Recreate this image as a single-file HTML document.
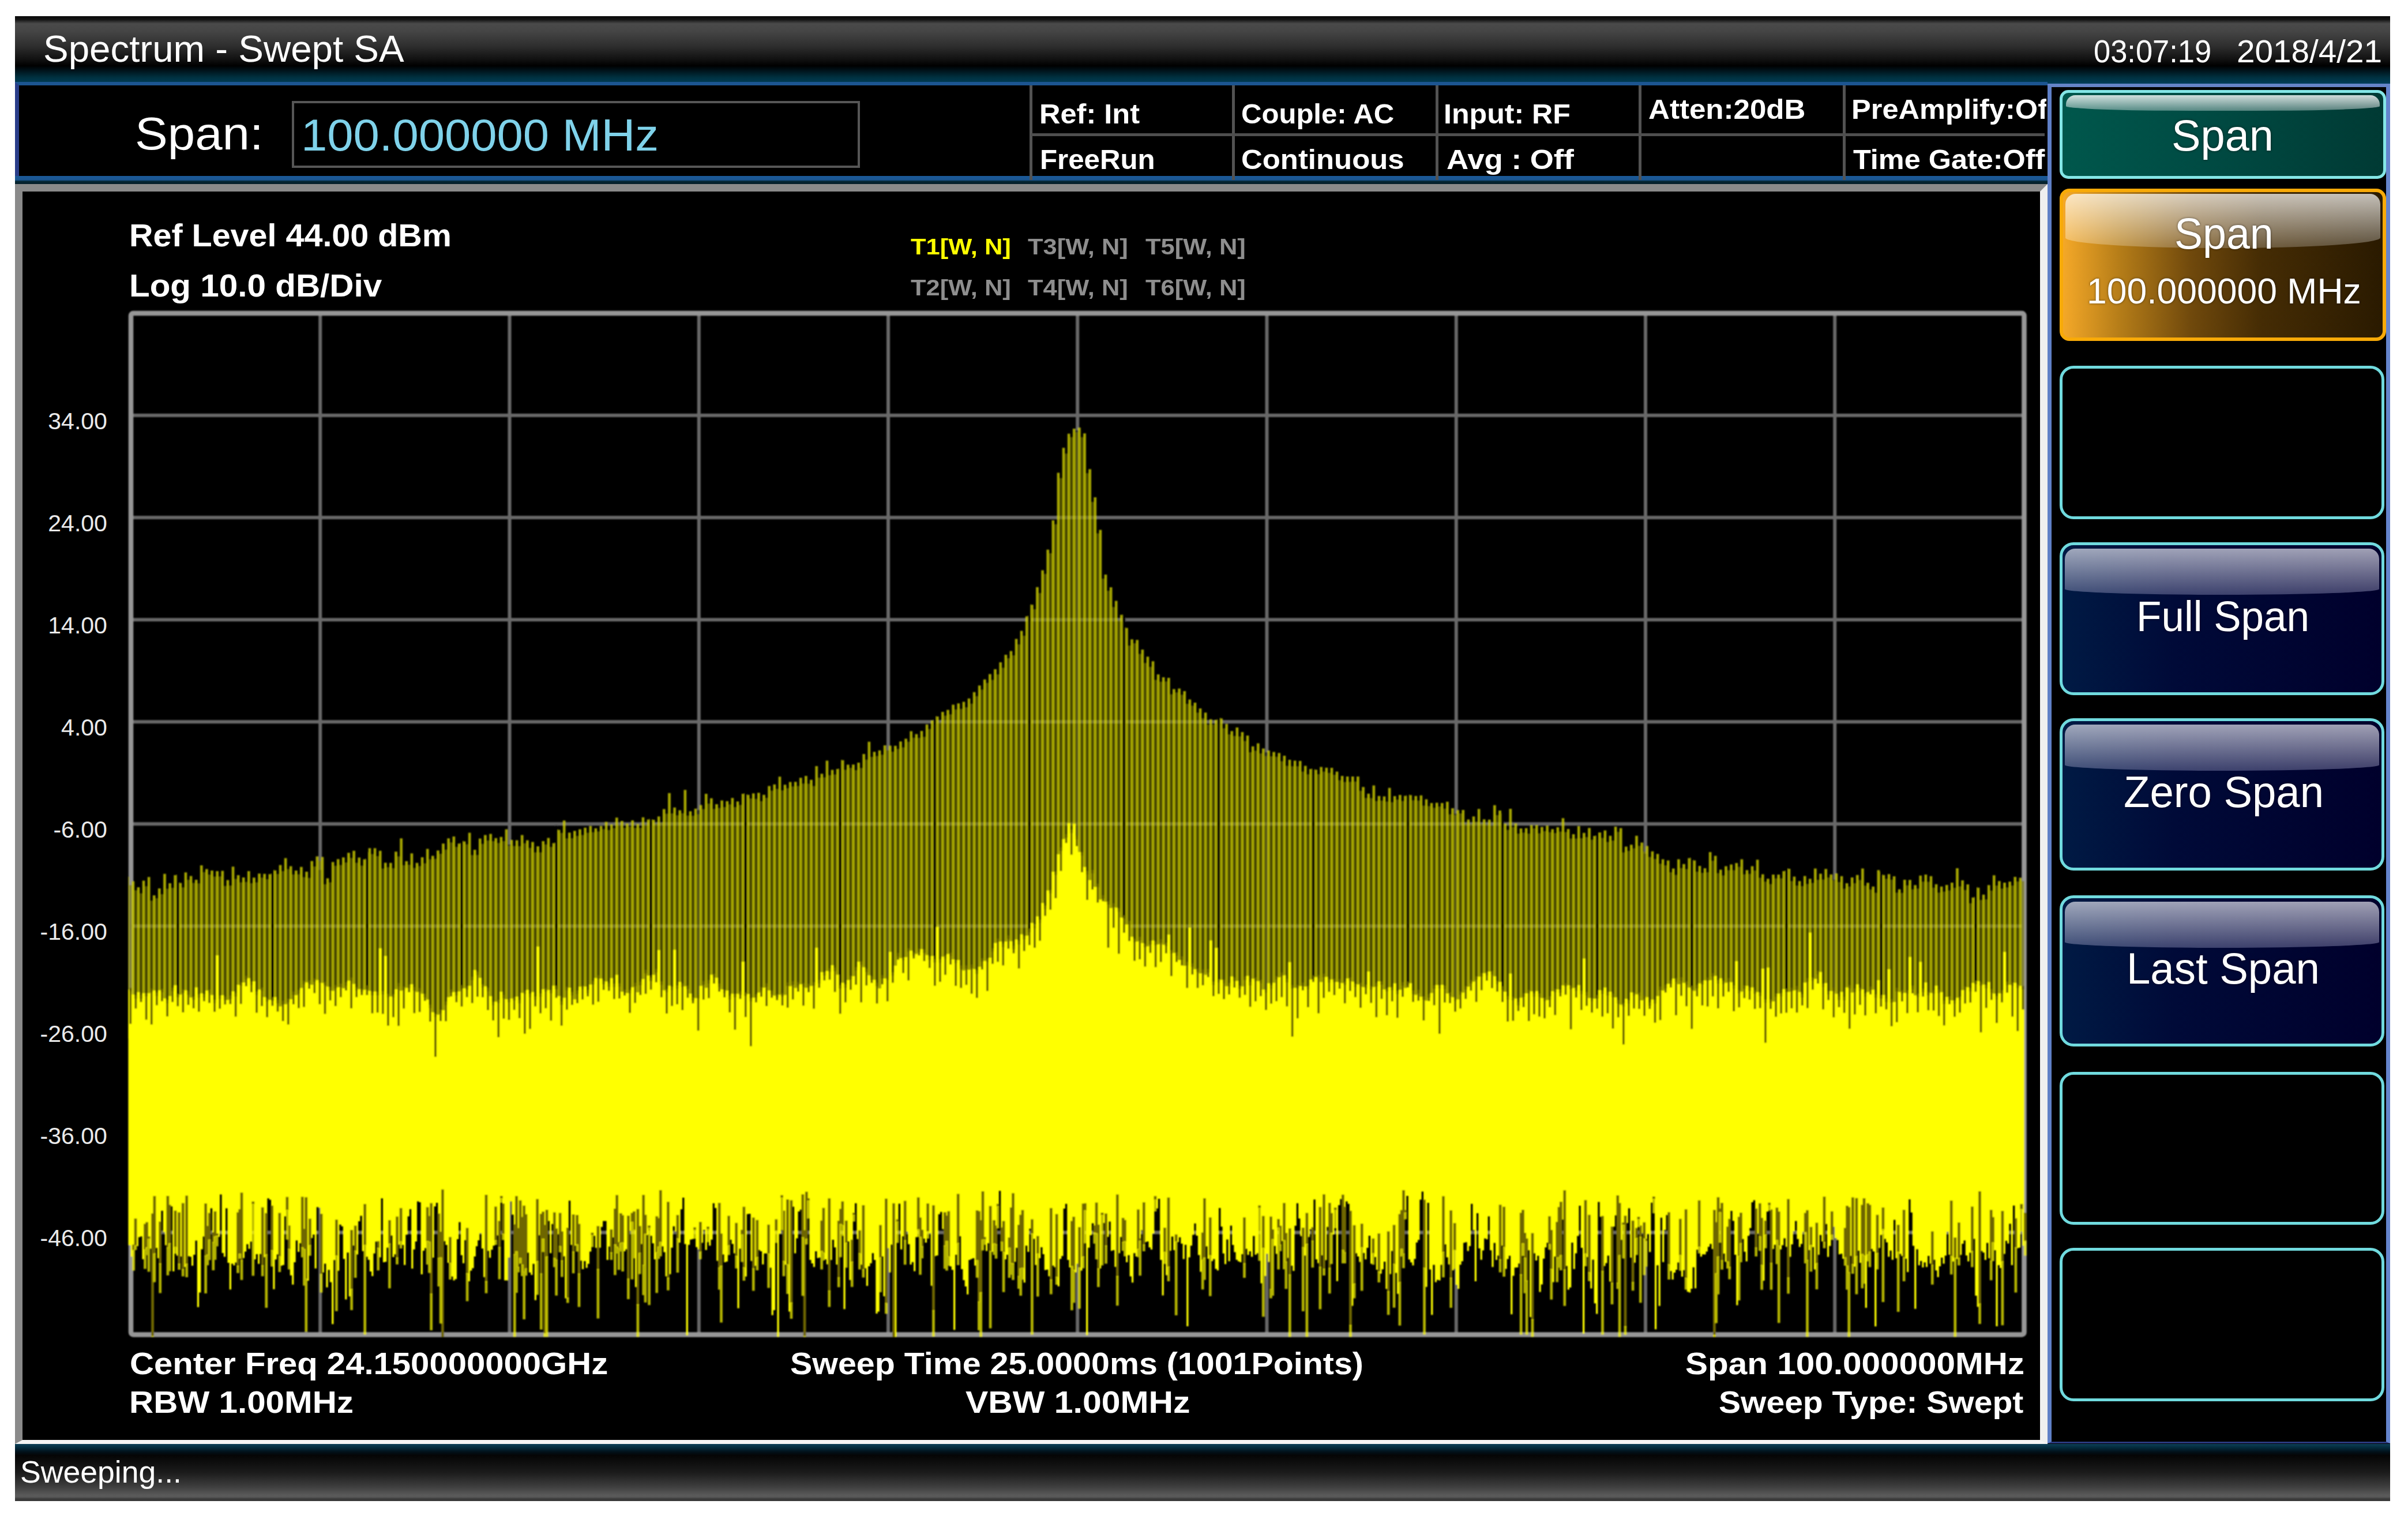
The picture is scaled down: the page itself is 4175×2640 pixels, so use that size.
<!DOCTYPE html>
<html><head><meta charset="utf-8"><title>Spectrum - Swept SA</title>
<style>
html,body{margin:0;padding:0;background:#fff;}
body{width:4175px;height:2640px;overflow:hidden;position:relative;font-family:"Liberation Sans",sans-serif;color:#fff;}
div{box-sizing:border-box;}
.tx{position:absolute;white-space:nowrap;transform-origin:0 0;}
#app{position:absolute;left:26px;top:28px;width:4118px;height:2574px;background:#000;}
#title{position:absolute;left:26px;top:28px;width:4118px;height:118px;
 background:linear-gradient(to bottom,#0a0a0a 0px,#141414 6px,#4a4a4a 13px,#454545 26px,#2e2e2e 52px,#121212 74px,#000 86px,#00121a 94px,#00303f 106px,#003a52 114px,#004060 118px);}
#spanbar{position:absolute;left:26px;top:142px;width:3524px;height:177px;background:#000;border-top:6px solid #1c5591;border-left:7px solid #2a3e8a;}
#spanbar .bb{position:absolute;left:-7px;right:0;bottom:0;height:14px;background:linear-gradient(to bottom,#1b5a98 0px,#1b5590 7px,#062836 9px,#031c26 14px);}
#spanbar .inp{position:absolute;left:473px;top:27px;width:985px;height:116px;border:4px solid #565656;}
.vsep{position:absolute;top:148px;width:5px;height:164px;background:#525252;}
.hsep{position:absolute;left:1788px;top:231px;width:1757px;height:5px;background:#4e4e4e;}
#panel{position:absolute;left:26px;top:319px;width:3524px;height:2184px;background:#000;border:13px solid;border-bottom-width:7px;border-color:#8a8a8a #efefef #f4f4f4 #8a8a8a;}
#plot{position:absolute;left:0;top:0;}
#side{position:absolute;left:3550px;top:145px;width:594px;height:2357px;background:#000;border:7px solid;border-top-width:6px;border-color:#6584c8 #6484cc #2a3a80 #5f7fc6;border-bottom-width:3px;}
.btn{position:absolute;left:3571px;border:5px solid #70dade;border-radius:24px;overflow:hidden;}
.btn.empty{background:#000;}
.btn.teal{background:linear-gradient(to right,#00574c 0%,#004c44 40%,#003a34 100%);border-color:#84e6e6;border-width:5px;border-radius:15px;}
.btn.orange{background:linear-gradient(to right,#f4a828 0%,#b47c18 18%,#70490c 40%,#452c04 62%,#2a1a00 100%);border-color:#f8aa08;border-width:6px;border-radius:17px;}
.btn.navy{background:linear-gradient(to right,#001a44 0%,#000a38 35%,#00002c 100%);}
.gloss{position:absolute;left:4px;right:4px;}
.g1{top:4px;height:27px;left:6px;right:6px;border-radius:16px 16px 40% 40%/16px 16px 8px 8px;background:linear-gradient(to bottom,rgba(255,255,255,.82),rgba(255,255,255,.34));}
.g2{top:3px;height:94px;border-radius:18px 18px 50% 50%/18px 18px 18px 18px;background:linear-gradient(to bottom,rgba(255,255,255,.72),rgba(255,255,255,.22));}
.g3{top:6px;height:80px;border-radius:18px 18px 50% 50%/18px 18px 10px 10px;background:linear-gradient(to bottom,rgba(235,235,245,.68),rgba(160,160,200,.38));}
#status{position:absolute;left:26px;top:2503px;width:4118px;height:99px;
 background:linear-gradient(to bottom,#0c4058 0px,#03283a 7px,#021018 14px,#050505 20px,#1c1c1c 50px,#3e3e3e 74px,#5a5a5a 89px,#585858 92px,#3c3c3c 95px,#383838 99px);}
</style></head><body>
<div id="app"></div>
<div id="title"></div>
<div id="spanbar"><div class="bb"></div><div class="inp"></div></div>
<div class="vsep" style="left:1785px"></div><div class="vsep" style="left:2136px"></div><div class="vsep" style="left:2489px"></div><div class="vsep" style="left:2841px"></div><div class="vsep" style="left:3195px"></div>
<div class="hsep"></div>
<div id="panel"></div>
<svg id="plot" width="4175" height="2640" viewBox="0 0 4175 2640">
<defs>
<pattern id="st" x="219.263" y="0" width="9.1144" height="64" patternUnits="userSpaceOnUse">
<rect x="0" y="0" width="4.9" height="64" fill="#ffff00" fill-opacity="0.65"/><rect x="4.9" y="0" width="4.2144" height="64" fill="#ffff00" fill-opacity="0.25"/>
</pattern>
<filter id="bl" x="0" y="0" width="100%" height="100%" filterUnits="userSpaceOnUse"><feGaussianBlur stdDeviation="1.25"/></filter>
<clipPath id="cp"><rect x="222.5" y="543.0" width="3291.5" height="1775.0"/></clipPath>
</defs>
<g filter="url(#bl)">
<g fill="#686868"><rect x="552.2" y="543.0" width="6" height="965.0"/><rect x="552.2" y="1508.0" width="6" height="292.0" fill-opacity="0.4"/><rect x="552.2" y="2050.0" width="6" height="263.5"/><rect x="227.0" y="717.0" width="3282.5" height="6"/><rect x="880.5" y="543.0" width="6" height="921.1"/><rect x="880.5" y="1464.1" width="6" height="335.9" fill-opacity="0.4"/><rect x="880.5" y="2050.0" width="6" height="263.5"/><rect x="227.0" y="894.1" width="3282.5" height="6"/><rect x="1208.8" y="543.0" width="6" height="861.4"/><rect x="1208.8" y="1404.4" width="6" height="395.6" fill-opacity="0.4"/><rect x="1208.8" y="2050.0" width="6" height="263.5"/><rect x="227.0" y="1071.2" width="3282.5" height="6"/><rect x="1537.0" y="543.0" width="6" height="757.9"/><rect x="1537.0" y="1300.9" width="6" height="499.1" fill-opacity="0.4"/><rect x="1537.0" y="2050.0" width="6" height="263.5"/><rect x="227.0" y="1248.2" width="3282.5" height="6"/><rect x="1865.2" y="543.0" width="6" height="203.0"/><rect x="1865.2" y="746.0" width="6" height="1054.0" fill-opacity="0.4"/><rect x="1865.2" y="2050.0" width="6" height="263.5"/><rect x="227.0" y="1425.2" width="3282.5" height="6"/><rect x="2193.5" y="543.0" width="6" height="761.2"/><rect x="2193.5" y="1304.2" width="6" height="495.8" fill-opacity="0.4"/><rect x="2193.5" y="2050.0" width="6" height="263.5"/><rect x="227.0" y="1602.3" width="3282.5" height="6"/><rect x="2521.8" y="543.0" width="6" height="867.7"/><rect x="2521.8" y="1410.7" width="6" height="389.3" fill-opacity="0.4"/><rect x="2521.8" y="2050.0" width="6" height="263.5"/><rect x="227.0" y="1779.4" width="3282.5" height="6"/><rect x="2850.0" y="543.0" width="6" height="937.0"/><rect x="2850.0" y="1480.0" width="6" height="320.0" fill-opacity="0.4"/><rect x="2850.0" y="2050.0" width="6" height="263.5"/><rect x="227.0" y="1956.4" width="3282.5" height="6"/><rect x="3178.2" y="543.0" width="6" height="981.9"/><rect x="3178.2" y="1524.9" width="6" height="275.1" fill-opacity="0.4"/><rect x="3178.2" y="2050.0" width="6" height="263.5"/><rect x="227.0" y="2133.4" width="3282.5" height="6"/></g>
<rect x="227.0" y="543.0" width="3282.5" height="1770.5" rx="4" fill="none" stroke="#969696" stroke-width="8.5"/>
<g clip-path="url(#cp)">
<polygon points="219.3,1519.7 224.2,1519.7 224.2,1534.2 228.4,1534.2 228.4,1527.4 233.3,1527.4 233.3,1543.3 237.5,1543.3 237.5,1538.1 242.4,1538.1 242.4,1548.4 246.6,1548.4 246.6,1526.6 251.5,1526.6 251.5,1536.3 255.7,1536.3 255.7,1520.2 260.6,1520.2 260.6,1561.3 264.8,1561.3 264.8,1552.0 269.7,1552.0 269.7,1557.0 273.9,1557.0 273.9,1540.0 278.8,1540.0 278.8,1550.1 283.1,1550.1 283.1,1514.7 288.0,1514.7 288.0,1540.6 292.2,1540.6 292.2,1531.1 297.1,1531.1 297.1,1538.9 301.3,1538.9 301.3,1517.0 306.2,1517.0 306.2,1540.0 310.4,1540.0 310.4,1530.5 315.3,1530.5 315.3,1538.2 319.5,1538.2 319.5,1512.2 324.4,1512.2 324.4,1525.0 328.6,1525.0 328.6,1518.6 333.5,1518.6 333.5,1530.5 337.8,1530.5 337.8,1524.9 342.7,1524.9 342.7,1531.2 346.9,1531.2 346.9,1500.0 351.8,1500.0 351.8,1511.7 356.0,1511.7 356.0,1506.4 360.9,1506.4 360.9,1516.0 365.1,1516.0 365.1,1509.0 370.0,1509.0 370.0,1519.6 374.2,1519.6 374.2,1510.1 379.1,1510.1 379.1,1519.3 383.3,1519.3 383.3,1509.4 388.2,1509.4 388.2,1535.7 392.4,1535.7 392.4,1525.6 397.3,1525.6 397.3,1534.9 401.6,1534.9 401.6,1502.3 406.5,1502.3 406.5,1523.5 410.7,1523.5 410.7,1516.9 415.6,1516.9 415.6,1529.5 419.8,1529.5 419.8,1521.1 424.7,1521.1 424.7,1528.7 428.9,1528.7 428.9,1509.9 433.8,1509.9 433.8,1531.0 438.0,1531.0 438.0,1521.2 442.9,1521.2 442.9,1529.4 447.1,1529.4 447.1,1514.3 452.0,1514.3 452.0,1521.3 456.2,1521.3 456.2,1514.7 461.1,1514.7 461.1,1524.1 465.4,1524.1 465.4,1515.2 470.3,1515.2 470.3,1526.0 474.5,1526.0 474.5,1508.7 479.4,1508.7 479.4,1515.0 483.6,1515.0 483.6,1499.6 488.5,1499.6 488.5,1509.9 492.7,1509.9 492.7,1487.5 497.6,1487.5 497.6,1506.6 501.8,1506.6 501.8,1501.5 506.7,1501.5 506.7,1515.7 510.9,1515.7 510.9,1509.1 515.8,1509.1 515.8,1515.5 520.0,1515.5 520.0,1502.8 524.9,1502.8 524.9,1520.5 529.2,1520.5 529.2,1511.0 534.1,1511.0 534.1,1521.7 538.3,1521.7 538.3,1492.5 543.2,1492.5 543.2,1502.0 547.4,1502.0 547.4,1484.4 552.3,1484.4 552.3,1492.3 556.5,1492.3 556.5,1485.4 561.4,1485.4 561.4,1532.8 565.6,1532.8 565.6,1522.6 570.5,1522.6 570.5,1529.5 574.7,1529.5 574.7,1494.3 579.6,1494.3 579.6,1500.7 583.8,1500.7 583.8,1489.2 588.7,1489.2 588.7,1499.6 593.0,1499.6 593.0,1486.3 597.9,1486.3 597.9,1495.1 602.1,1495.1 602.1,1478.2 607.0,1478.2 607.0,1487.3 611.2,1487.3 611.2,1474.7 616.1,1474.7 616.1,1495.4 620.3,1495.4 620.3,1486.4 625.2,1486.4 625.2,1500.5 629.4,1500.5 629.4,1489.6 634.3,1489.6 634.3,1497.4 638.5,1497.4 638.5,1470.3 643.4,1470.3 643.4,1480.4 647.6,1480.4 647.6,1470.3 652.5,1470.3 652.5,1483.9 656.8,1483.9 656.8,1474.7 661.7,1474.7 661.7,1505.6 665.9,1505.6 665.9,1495.4 670.8,1495.4 670.8,1503.3 675.0,1503.3 675.0,1495.7 679.9,1495.7 679.9,1505.0 684.1,1505.0 684.1,1476.2 689.0,1476.2 689.0,1484.6 693.2,1484.6 693.2,1453.3 698.1,1453.3 698.1,1499.7 702.3,1499.7 702.3,1492.8 707.2,1492.8 707.2,1499.1 711.4,1499.1 711.4,1479.2 716.3,1479.2 716.3,1504.4 720.6,1504.4 720.6,1495.7 725.5,1495.7 725.5,1501.2 729.7,1501.2 729.7,1486.1 734.6,1486.1 734.6,1496.6 738.8,1496.6 738.8,1471.6 743.7,1471.6 743.7,1489.4 747.9,1489.4 747.9,1483.5 752.8,1483.5 752.8,1488.7 757.0,1488.7 757.0,1474.2 761.9,1474.2 761.9,1479.9 766.1,1479.9 766.1,1462.2 771.0,1462.2 771.0,1472.8 775.2,1472.8 775.2,1453.2 780.1,1453.2 780.1,1460.3 784.4,1460.3 784.4,1450.1 789.3,1450.1 789.3,1468.0 793.5,1468.0 793.5,1462.2 798.4,1462.2 798.4,1467.3 802.6,1467.3 802.6,1458.4 807.5,1458.4 807.5,1463.6 811.7,1463.6 811.7,1443.5 816.6,1443.5 816.6,1482.2 820.8,1482.2 820.8,1473.1 825.7,1473.1 825.7,1481.9 829.9,1481.9 829.9,1453.5 834.8,1453.5 834.8,1462.7 839.0,1462.7 839.0,1447.5 843.9,1447.5 843.9,1456.9 848.2,1456.9 848.2,1445.4 853.1,1445.4 853.1,1458.1 857.3,1458.1 857.3,1452.8 862.2,1452.8 862.2,1461.3 866.4,1461.3 866.4,1450.8 871.3,1450.8 871.3,1458.0 875.5,1458.0 875.5,1437.5 880.4,1437.5 880.4,1466.1 884.6,1466.1 884.6,1456.1 889.5,1456.1 889.5,1466.4 893.7,1466.4 893.7,1456.5 898.6,1456.5 898.6,1466.8 902.8,1466.8 902.8,1447.5 907.7,1447.5 907.7,1461.8 912.0,1461.8 912.0,1456.4 916.9,1456.4 916.9,1469.7 921.1,1469.7 921.1,1459.5 926.0,1459.5 926.0,1477.4 930.2,1477.4 930.2,1466.9 935.1,1466.9 935.1,1477.6 939.3,1477.6 939.3,1458.1 944.2,1458.1 944.2,1463.8 948.4,1463.8 948.4,1452.4 953.3,1452.4 953.3,1467.9 957.5,1467.9 957.5,1461.6 962.4,1461.6 962.4,1467.3 966.6,1467.3 966.6,1438.5 971.5,1438.5 971.5,1443.7 975.8,1443.7 975.8,1422.3 980.7,1422.3 980.7,1453.3 984.9,1453.3 984.9,1443.2 989.8,1443.2 989.8,1453.1 994.0,1453.1 994.0,1440.2 998.9,1440.2 998.9,1449.0 1003.1,1449.0 1003.1,1437.6 1008.0,1437.6 1008.0,1447.6 1012.2,1447.6 1012.2,1434.8 1017.1,1434.8 1017.1,1443.6 1021.3,1443.6 1021.3,1431.7 1026.2,1431.7 1026.2,1442.4 1030.4,1442.4 1030.4,1435.7 1035.3,1435.7 1035.3,1441.3 1039.6,1441.3 1039.6,1431.7 1044.5,1431.7 1044.5,1437.3 1048.7,1437.3 1048.7,1424.4 1053.6,1424.4 1053.6,1438.7 1057.8,1438.7 1057.8,1429.1 1062.7,1429.1 1062.7,1435.4 1066.9,1435.4 1066.9,1417.2 1071.8,1417.2 1071.8,1429.8 1076.0,1429.8 1076.0,1422.9 1080.9,1422.9 1080.9,1435.1 1085.1,1435.1 1085.1,1427.5 1090.0,1427.5 1090.0,1432.7 1094.2,1432.7 1094.2,1422.1 1099.1,1422.1 1099.1,1434.9 1103.4,1434.9 1103.4,1428.3 1108.3,1428.3 1108.3,1435.0 1112.5,1435.0 1112.5,1416.7 1117.4,1416.7 1117.4,1429.7 1121.6,1429.7 1121.6,1420.4 1126.5,1420.4 1126.5,1428.2 1130.7,1428.2 1130.7,1420.9 1135.6,1420.9 1135.6,1427.9 1139.8,1427.9 1139.8,1415.2 1144.7,1415.2 1144.7,1426.0 1148.9,1426.0 1148.9,1402.6 1153.8,1402.6 1153.8,1410.6 1158.1,1410.6 1158.1,1374.7 1163.0,1374.7 1163.0,1410.0 1167.2,1410.0 1167.2,1399.8 1172.1,1399.8 1172.1,1413.2 1176.3,1413.2 1176.3,1404.5 1181.2,1404.5 1181.2,1409.7 1185.4,1409.7 1185.4,1369.2 1190.3,1369.2 1190.3,1413.8 1194.5,1413.8 1194.5,1406.3 1199.4,1406.3 1199.4,1413.9 1203.6,1413.9 1203.6,1401.8 1208.5,1401.8 1208.5,1411.4 1212.7,1411.4 1212.7,1395.5 1217.6,1395.5 1217.6,1402.5 1221.9,1402.5 1221.9,1376.1 1226.8,1376.1 1226.8,1393.0 1231.0,1393.0 1231.0,1383.8 1235.9,1383.8 1235.9,1402.3 1240.1,1402.3 1240.1,1394.1 1245.0,1394.1 1245.0,1400.4 1249.2,1400.4 1249.2,1387.4 1254.1,1387.4 1254.1,1398.9 1258.3,1398.9 1258.3,1388.8 1263.2,1388.8 1263.2,1394.3 1267.4,1394.3 1267.4,1383.2 1272.3,1383.2 1272.3,1399.1 1276.5,1399.1 1276.5,1389.2 1281.4,1389.2 1281.4,1395.3 1285.7,1395.3 1285.7,1376.0 1290.6,1376.0 1290.6,1382.8 1294.8,1382.8 1294.8,1377.8 1299.7,1377.8 1299.7,1384.0 1303.9,1384.0 1303.9,1375.2 1308.8,1375.2 1308.8,1384.8 1313.0,1384.8 1313.0,1374.3 1317.9,1374.3 1317.9,1388.7 1322.1,1388.7 1322.1,1377.8 1327.0,1377.8 1327.0,1382.9 1331.2,1382.9 1331.2,1362.5 1336.1,1362.5 1336.1,1370.4 1340.3,1370.4 1340.3,1359.7 1345.2,1359.7 1345.2,1367.6 1349.5,1367.6 1349.5,1346.2 1354.4,1346.2 1354.4,1369.9 1358.6,1369.9 1358.6,1360.2 1363.5,1360.2 1363.5,1366.3 1367.7,1366.3 1367.7,1355.4 1372.6,1355.4 1372.6,1363.3 1376.8,1363.3 1376.8,1355.3 1381.7,1355.3 1381.7,1362.4 1385.9,1362.4 1385.9,1348.3 1390.8,1348.3 1390.8,1358.3 1395.0,1358.3 1395.0,1345.0 1399.9,1345.0 1399.9,1358.4 1404.1,1358.4 1404.1,1351.8 1409.0,1351.8 1409.0,1362.5 1413.3,1362.5 1413.3,1328.0 1418.2,1328.0 1418.2,1348.0 1422.4,1348.0 1422.4,1341.3 1427.3,1341.3 1427.3,1347.6 1431.5,1347.6 1431.5,1318.6 1436.4,1318.6 1436.4,1343.7 1440.6,1343.7 1440.6,1334.5 1445.5,1334.5 1445.5,1342.5 1449.7,1342.5 1449.7,1333.0 1454.6,1333.0 1454.6,1338.6 1458.8,1338.6 1458.8,1317.8 1463.7,1317.8 1463.7,1334.2 1467.9,1334.2 1467.9,1325.4 1472.8,1325.4 1472.8,1330.9 1477.1,1330.9 1477.1,1325.2 1482.0,1325.2 1482.0,1334.9 1486.2,1334.9 1486.2,1322.1 1491.1,1322.1 1491.1,1331.3 1495.3,1331.3 1495.3,1306.9 1500.2,1306.9 1500.2,1316.7 1504.4,1316.7 1504.4,1285.8 1509.3,1285.8 1509.3,1312.1 1513.5,1312.1 1513.5,1303.3 1518.4,1303.3 1518.4,1310.4 1522.6,1310.4 1522.6,1300.7 1527.5,1300.7 1527.5,1308.2 1531.7,1308.2 1531.7,1292.0 1536.6,1292.0 1536.6,1299.9 1540.9,1299.9 1540.9,1292.6 1545.8,1292.6 1545.8,1303.1 1550.0,1303.1 1550.0,1292.7 1554.9,1292.7 1554.9,1298.2 1559.1,1298.2 1559.1,1285.2 1564.0,1285.2 1564.0,1295.6 1568.2,1295.6 1568.2,1280.6 1573.1,1280.6 1573.1,1285.7 1577.3,1285.7 1577.3,1267.6 1582.2,1267.6 1582.2,1278.7 1586.4,1278.7 1586.4,1272.4 1591.3,1272.4 1591.3,1279.0 1595.5,1279.0 1595.5,1266.9 1600.4,1266.9 1600.4,1277.3 1604.7,1277.3 1604.7,1255.7 1609.6,1255.7 1609.6,1263.7 1613.8,1263.7 1613.8,1248.8 1618.7,1248.8 1618.7,1256.0 1622.9,1256.0 1622.9,1242.0 1627.8,1242.0 1627.8,1252.3 1632.0,1252.3 1632.0,1233.9 1636.9,1233.9 1636.9,1240.4 1641.1,1240.4 1641.1,1230.5 1646.0,1230.5 1646.0,1238.3 1650.2,1238.3 1650.2,1221.5 1655.1,1221.5 1655.1,1229.7 1659.3,1229.7 1659.3,1219.2 1664.2,1219.2 1664.2,1228.7 1668.5,1228.7 1668.5,1216.4 1673.4,1216.4 1673.4,1225.9 1677.6,1225.9 1677.6,1210.8 1682.5,1210.8 1682.5,1219.7 1686.7,1219.7 1686.7,1199.7 1691.6,1199.7 1691.6,1206.8 1695.8,1206.8 1695.8,1188.2 1700.7,1188.2 1700.7,1195.2 1704.9,1195.2 1704.9,1177.7 1709.8,1177.7 1709.8,1183.7 1714.0,1183.7 1714.0,1168.4 1718.9,1168.4 1718.9,1178.5 1723.1,1178.5 1723.1,1159.9 1728.0,1159.9 1728.0,1168.9 1732.3,1168.9 1732.3,1148.1 1737.2,1148.1 1737.2,1157.6 1741.4,1157.6 1741.4,1135.1 1746.3,1135.1 1746.3,1141.1 1750.5,1141.1 1750.5,1128.4 1755.4,1128.4 1755.4,1136.1 1759.6,1136.1 1759.6,1107.5 1764.5,1107.5 1764.5,1117.1 1768.7,1117.1 1768.7,1093.5 1773.6,1093.5 1773.6,1101.9 1777.8,1101.9 1777.8,1068.2 1782.7,1068.2 1782.7,1074.0 1786.9,1074.0 1786.9,1048.3 1791.8,1048.3 1791.8,1056.1 1796.1,1056.1 1796.1,1017.8 1801.0,1017.8 1801.0,1028.1 1805.2,1028.1 1805.2,988.4 1810.1,988.4 1810.1,994.8 1814.3,994.8 1814.3,952.8 1819.2,952.8 1819.2,959.0 1823.4,959.0 1823.4,901.9 1828.3,901.9 1828.3,908.7 1832.5,908.7 1832.5,819.6 1837.4,819.6 1837.4,828.8 1841.6,828.8 1841.6,776.3 1846.5,776.3 1846.5,786.3 1850.7,786.3 1850.7,751.8 1855.6,751.8 1855.6,757.7 1859.9,757.7 1859.9,743.0 1864.8,743.0 1864.8,749.0 1869.0,749.0 1869.0,741.2 1873.9,741.2 1873.9,757.8 1878.1,757.8 1878.1,751.3 1883.0,751.3 1883.0,820.3 1887.2,820.3 1887.2,813.3 1892.1,813.3 1892.1,870.1 1896.3,870.1 1896.3,862.0 1901.2,862.0 1901.2,924.4 1905.4,924.4 1905.4,918.4 1910.3,918.4 1910.3,1002.9 1914.5,1002.9 1914.5,996.0 1919.4,996.0 1919.4,1024.1 1923.7,1024.1 1923.7,1017.9 1928.6,1017.9 1928.6,1052.2 1932.8,1052.2 1932.8,1041.4 1937.7,1041.4 1937.7,1075.0 1941.9,1075.0 1941.9,1065.7 1946.8,1065.7 1946.8,1094.0 1951.0,1094.0 1951.0,1088.4 1955.9,1088.4 1955.9,1119.1 1960.1,1119.1 1960.1,1108.3 1965.0,1108.3 1965.0,1114.9 1969.2,1114.9 1969.2,1109.3 1974.1,1109.3 1974.1,1133.4 1978.4,1133.4 1978.4,1126.1 1983.3,1126.1 1983.3,1149.2 1987.5,1149.2 1987.5,1138.3 1992.4,1138.3 1992.4,1156.0 1996.6,1156.0 1996.6,1146.2 2001.5,1146.2 2001.5,1178.4 2005.7,1178.4 2005.7,1169.0 2010.6,1169.0 2010.6,1181.7 2014.8,1181.7 2014.8,1174.1 2019.7,1174.1 2019.7,1181.2 2023.9,1181.2 2023.9,1175.0 2028.8,1175.0 2028.8,1203.4 2033.0,1203.4 2033.0,1194.6 2037.9,1194.6 2037.9,1200.2 2042.2,1200.2 2042.2,1193.6 2047.1,1193.6 2047.1,1204.2 2051.3,1204.2 2051.3,1197.9 2056.2,1197.9 2056.2,1219.9 2060.4,1219.9 2060.4,1212.6 2065.3,1212.6 2065.3,1223.3 2069.5,1223.3 2069.5,1218.1 2074.4,1218.1 2074.4,1235.3 2078.6,1235.3 2078.6,1227.9 2083.5,1227.9 2083.5,1244.9 2087.7,1244.9 2087.7,1235.2 2092.6,1235.2 2092.6,1255.9 2096.8,1255.9 2096.8,1246.7 2101.7,1246.7 2101.7,1255.7 2106.0,1255.7 2106.0,1247.7 2110.9,1247.7 2110.9,1256.5 2115.1,1256.5 2115.1,1245.2 2120.0,1245.2 2120.0,1262.6 2124.2,1262.6 2124.2,1254.8 2129.1,1254.8 2129.1,1273.0 2133.3,1273.0 2133.3,1267.2 2138.2,1267.2 2138.2,1275.8 2142.4,1275.8 2142.4,1261.0 2147.3,1261.0 2147.3,1276.5 2151.5,1276.5 2151.5,1269.0 2156.4,1269.0 2156.4,1284.4 2160.6,1284.4 2160.6,1275.0 2165.5,1275.0 2165.5,1304.1 2169.8,1304.1 2169.8,1293.7 2174.7,1293.7 2174.7,1301.3 2178.9,1301.3 2178.9,1288.5 2183.8,1288.5 2183.8,1305.9 2188.0,1305.9 2188.0,1297.5 2192.9,1297.5 2192.9,1310.5 2197.1,1310.5 2197.1,1301.0 2202.0,1301.0 2202.0,1311.1 2206.2,1311.1 2206.2,1303.5 2211.1,1303.5 2211.1,1311.7 2215.3,1311.7 2215.3,1305.3 2220.2,1305.3 2220.2,1319.4 2224.4,1319.4 2224.4,1310.0 2229.3,1310.0 2229.3,1327.4 2233.6,1327.4 2233.6,1317.1 2238.5,1317.1 2238.5,1328.3 2242.7,1328.3 2242.7,1318.6 2247.6,1318.6 2247.6,1328.3 2251.8,1328.3 2251.8,1319.1 2256.7,1319.1 2256.7,1337.5 2260.9,1337.5 2260.9,1327.4 2265.8,1327.4 2265.8,1342.2 2270.0,1342.2 2270.0,1333.1 2274.9,1333.1 2274.9,1343.0 2279.1,1343.0 2279.1,1334.2 2284.0,1334.2 2284.0,1341.9 2288.2,1341.9 2288.2,1329.4 2293.1,1329.4 2293.1,1337.5 2297.4,1337.5 2297.4,1330.7 2302.3,1330.7 2302.3,1339.7 2306.5,1339.7 2306.5,1330.9 2311.4,1330.9 2311.4,1343.1 2315.6,1343.1 2315.6,1337.5 2320.5,1337.5 2320.5,1352.5 2324.7,1352.5 2324.7,1345.0 2329.6,1345.0 2329.6,1355.6 2333.8,1355.6 2333.8,1345.9 2338.7,1345.9 2338.7,1355.2 2342.9,1355.2 2342.9,1346.0 2347.8,1346.0 2347.8,1354.7 2352.0,1354.7 2352.0,1345.9 2356.9,1345.9 2356.9,1370.8 2361.2,1370.8 2361.2,1364.3 2366.1,1364.3 2366.1,1383.3 2370.3,1383.3 2370.3,1375.7 2375.2,1375.7 2375.2,1383.5 2379.4,1383.5 2379.4,1361.4 2384.3,1361.4 2384.3,1388.5 2388.5,1388.5 2388.5,1379.8 2393.4,1379.8 2393.4,1387.8 2397.6,1387.8 2397.6,1380.4 2402.5,1380.4 2402.5,1389.4 2406.7,1389.4 2406.7,1365.7 2411.6,1365.7 2411.6,1390.6 2415.8,1390.6 2415.8,1380.0 2420.7,1380.0 2420.7,1386.1 2425.0,1386.1 2425.0,1378.1 2429.9,1378.1 2429.9,1388.5 2434.1,1388.5 2434.1,1379.5 2439.0,1379.5 2439.0,1389.2 2443.2,1389.2 2443.2,1378.2 2448.1,1378.2 2448.1,1387.2 2452.3,1387.2 2452.3,1379.8 2457.2,1379.8 2457.2,1387.8 2461.4,1387.8 2461.4,1378.7 2466.3,1378.7 2466.3,1396.4 2470.5,1396.4 2470.5,1385.5 2475.4,1385.5 2475.4,1397.2 2479.6,1397.2 2479.6,1392.0 2484.5,1392.0 2484.5,1400.3 2488.8,1400.3 2488.8,1391.5 2493.7,1391.5 2493.7,1397.9 2497.9,1397.9 2497.9,1392.0 2502.8,1392.0 2502.8,1401.7 2507.0,1401.7 2507.0,1389.8 2511.9,1389.8 2511.9,1411.6 2516.1,1411.6 2516.1,1400.9 2521.0,1400.9 2521.0,1412.4 2525.2,1412.4 2525.2,1404.3 2530.1,1404.3 2530.1,1409.9 2534.3,1409.9 2534.3,1404.0 2539.2,1404.0 2539.2,1428.8 2543.4,1428.8 2543.4,1420.4 2548.3,1420.4 2548.3,1428.6 2552.6,1428.6 2552.6,1415.3 2557.5,1415.3 2557.5,1424.6 2561.7,1424.6 2561.7,1402.3 2566.6,1402.3 2566.6,1428.3 2570.8,1428.3 2570.8,1420.2 2575.7,1420.2 2575.7,1429.6 2579.9,1429.6 2579.9,1420.7 2584.8,1420.7 2584.8,1430.7 2589.0,1430.7 2589.0,1395.7 2593.9,1395.7 2593.9,1413.1 2598.1,1413.1 2598.1,1405.0 2603.0,1405.0 2603.0,1435.1 2607.2,1435.1 2607.2,1427.7 2612.1,1427.7 2612.1,1438.4 2616.4,1438.4 2616.4,1402.1 2621.3,1402.1 2621.3,1433.5 2625.5,1433.5 2625.5,1427.3 2630.4,1427.3 2630.4,1445.1 2634.6,1445.1 2634.6,1436.0 2639.5,1436.0 2639.5,1443.3 2643.7,1443.3 2643.7,1435.6 2648.6,1435.6 2648.6,1445.1 2652.8,1445.1 2652.8,1430.2 2657.7,1430.2 2657.7,1436.0 2661.9,1436.0 2661.9,1430.3 2666.8,1430.3 2666.8,1444.5 2671.0,1444.5 2671.0,1433.6 2675.9,1433.6 2675.9,1440.8 2680.2,1440.8 2680.2,1431.2 2685.1,1431.2 2685.1,1442.6 2689.3,1442.6 2689.3,1437.3 2694.2,1437.3 2694.2,1443.9 2698.4,1443.9 2698.4,1434.1 2703.3,1434.1 2703.3,1441.5 2707.5,1441.5 2707.5,1418.3 2712.4,1418.3 2712.4,1442.2 2716.6,1442.2 2716.6,1437.1 2721.5,1437.1 2721.5,1453.4 2725.7,1453.4 2725.7,1445.9 2730.6,1445.9 2730.6,1453.4 2734.8,1453.4 2734.8,1432.0 2739.7,1432.0 2739.7,1452.9 2744.0,1452.9 2744.0,1443.8 2748.9,1443.8 2748.9,1450.9 2753.1,1450.9 2753.1,1435.2 2758.0,1435.2 2758.0,1455.6 2762.2,1455.6 2762.2,1449.0 2767.1,1449.0 2767.1,1455.3 2771.3,1455.3 2771.3,1442.9 2776.2,1442.9 2776.2,1452.4 2780.4,1452.4 2780.4,1439.5 2785.3,1439.5 2785.3,1459.4 2789.5,1459.4 2789.5,1448.8 2794.4,1448.8 2794.4,1457.0 2798.7,1457.0 2798.7,1433.0 2803.6,1433.0 2803.6,1441.9 2807.8,1441.9 2807.8,1435.6 2812.7,1435.6 2812.7,1477.4 2816.9,1477.4 2816.9,1467.6 2821.8,1467.6 2821.8,1475.0 2826.0,1475.0 2826.0,1464.3 2830.9,1464.3 2830.9,1470.6 2835.1,1470.6 2835.1,1448.8 2840.0,1448.8 2840.0,1466.3 2844.2,1466.3 2844.2,1460.5 2849.1,1460.5 2849.1,1476.1 2853.3,1476.1 2853.3,1466.5 2858.2,1466.5 2858.2,1485.5 2862.5,1485.5 2862.5,1475.7 2867.4,1475.7 2867.4,1489.1 2871.6,1489.1 2871.6,1480.2 2876.5,1480.2 2876.5,1497.2 2880.7,1497.2 2880.7,1489.4 2885.6,1489.4 2885.6,1500.0 2889.8,1500.0 2889.8,1491.6 2894.7,1491.6 2894.7,1511.9 2898.9,1511.9 2898.9,1505.6 2903.8,1505.6 2903.8,1516.4 2908.0,1516.4 2908.0,1489.6 2912.9,1489.6 2912.9,1504.8 2917.1,1504.8 2917.1,1497.7 2922.0,1497.7 2922.0,1506.6 2926.3,1506.6 2926.3,1487.4 2931.2,1487.4 2931.2,1501.4 2935.4,1501.4 2935.4,1491.5 2940.3,1491.5 2940.3,1510.9 2944.5,1510.9 2944.5,1501.0 2949.4,1501.0 2949.4,1512.9 2953.6,1512.9 2953.6,1505.1 2958.5,1505.1 2958.5,1511.9 2962.7,1511.9 2962.7,1477.1 2967.6,1477.1 2967.6,1491.9 2971.8,1491.9 2971.8,1483.6 2976.7,1483.6 2976.7,1513.4 2980.9,1513.4 2980.9,1507.6 2985.8,1507.6 2985.8,1517.6 2990.1,1517.6 2990.1,1501.4 2995.0,1501.4 2995.0,1508.5 2999.2,1508.5 2999.2,1498.4 3004.1,1498.4 3004.1,1508.5 3008.3,1508.5 3008.3,1496.0 3013.2,1496.0 3013.2,1502.6 3017.4,1502.6 3017.4,1489.4 3022.3,1489.4 3022.3,1515.4 3026.5,1515.4 3026.5,1508.2 3031.4,1508.2 3031.4,1514.7 3035.6,1514.7 3035.6,1501.4 3040.5,1501.4 3040.5,1509.0 3044.7,1509.0 3044.7,1490.2 3049.6,1490.2 3049.6,1521.5 3053.9,1521.5 3053.9,1515.4 3058.8,1515.4 3058.8,1528.3 3063.0,1528.3 3063.0,1523.3 3067.9,1523.3 3067.9,1532.6 3072.1,1532.6 3072.1,1515.9 3077.0,1515.9 3077.0,1522.6 3081.2,1522.6 3081.2,1515.9 3086.1,1515.9 3086.1,1522.4 3090.3,1522.4 3090.3,1510.1 3095.2,1510.1 3095.2,1516.9 3099.4,1516.9 3099.4,1506.1 3104.3,1506.1 3104.3,1527.3 3108.5,1527.3 3108.5,1519.4 3113.4,1519.4 3113.4,1534.9 3117.7,1534.9 3117.7,1527.3 3122.6,1527.3 3122.6,1536.1 3126.8,1536.1 3126.8,1518.5 3131.7,1518.5 3131.7,1532.2 3135.9,1532.2 3135.9,1523.2 3140.8,1523.2 3140.8,1530.4 3145.0,1530.4 3145.0,1505.6 3149.9,1505.6 3149.9,1525.0 3154.1,1525.0 3154.1,1514.4 3159.0,1514.4 3159.0,1524.5 3163.2,1524.5 3163.2,1506.2 3168.1,1506.2 3168.1,1521.0 3172.3,1521.0 3172.3,1515.7 3177.2,1515.7 3177.2,1525.7 3181.5,1525.7 3181.5,1514.0 3186.4,1514.0 3186.4,1529.1 3190.6,1529.1 3190.6,1518.7 3195.5,1518.7 3195.5,1540.6 3199.7,1540.6 3199.7,1530.9 3204.6,1530.9 3204.6,1536.8 3208.8,1536.8 3208.8,1521.1 3213.7,1521.1 3213.7,1531.1 3217.9,1531.1 3217.9,1516.7 3222.8,1516.7 3222.8,1525.5 3227.0,1525.5 3227.0,1505.6 3231.9,1505.6 3231.9,1535.3 3236.1,1535.3 3236.1,1530.2 3241.0,1530.2 3241.0,1541.7 3245.3,1541.7 3245.3,1536.7 3250.2,1536.7 3250.2,1547.4 3254.4,1547.4 3254.4,1508.3 3259.3,1508.3 3259.3,1525.8 3263.5,1525.8 3263.5,1516.8 3268.4,1516.8 3268.4,1523.3 3272.6,1523.3 3272.6,1515.2 3277.5,1515.2 3277.5,1524.7 3281.7,1524.7 3281.7,1519.1 3286.6,1519.1 3286.6,1547.3 3290.8,1547.3 3290.8,1541.4 3295.7,1541.4 3295.7,1547.8 3299.9,1547.8 3299.9,1524.9 3304.8,1524.9 3304.8,1534.8 3309.1,1534.8 3309.1,1525.2 3314.0,1525.2 3314.0,1541.4 3318.2,1541.4 3318.2,1534.3 3323.1,1534.3 3323.1,1540.2 3327.3,1540.2 3327.3,1517.8 3332.2,1517.8 3332.2,1528.2 3336.4,1528.2 3336.4,1515.9 3341.3,1515.9 3341.3,1528.5 3345.5,1528.5 3345.5,1518.7 3350.4,1518.7 3350.4,1538.7 3354.6,1538.7 3354.6,1532.7 3359.5,1532.7 3359.5,1547.2 3363.7,1547.2 3363.7,1536.8 3368.6,1536.8 3368.6,1545.5 3372.9,1545.5 3372.9,1534.0 3377.8,1534.0 3377.8,1543.6 3382.0,1543.6 3382.0,1530.1 3386.9,1530.1 3386.9,1539.1 3391.1,1539.1 3391.1,1504.9 3396.0,1504.9 3396.0,1536.4 3400.2,1536.4 3400.2,1526.0 3405.1,1526.0 3405.1,1542.8 3409.3,1542.8 3409.3,1533.1 3414.2,1533.1 3414.2,1565.7 3418.4,1565.7 3418.4,1555.7 3423.3,1555.7 3423.3,1561.9 3427.5,1561.9 3427.5,1538.7 3432.4,1538.7 3432.4,1559.9 3436.7,1559.9 3436.7,1550.7 3441.6,1550.7 3441.6,1558.9 3445.8,1558.9 3445.8,1534.3 3450.7,1534.3 3450.7,1543.7 3454.9,1543.7 3454.9,1517.3 3459.8,1517.3 3459.8,1535.0 3464.0,1535.0 3464.0,1527.3 3468.9,1527.3 3468.9,1540.3 3473.1,1540.3 3473.1,1530.0 3478.0,1530.0 3478.0,1538.3 3482.2,1538.3 3482.2,1528.3 3487.1,1528.3 3487.1,1534.9 3491.3,1534.9 3491.3,1519.9 3496.2,1519.9 3496.2,1527.9 3500.5,1527.9 3500.5,1521.5 3505.4,1521.5 3505.4,1527.3 3509.6,1527.3 3509.6,1800 219.3,1800" fill="#000" fill-opacity="0.45"/>
<polygon points="219.3,1519.7 224.2,1519.7 224.2,1534.2 228.4,1534.2 228.4,1527.4 233.3,1527.4 233.3,1543.3 237.5,1543.3 237.5,1538.1 242.4,1538.1 242.4,1548.4 246.6,1548.4 246.6,1526.6 251.5,1526.6 251.5,1536.3 255.7,1536.3 255.7,1520.2 260.6,1520.2 260.6,1561.3 264.8,1561.3 264.8,1552.0 269.7,1552.0 269.7,1557.0 273.9,1557.0 273.9,1540.0 278.8,1540.0 278.8,1550.1 283.1,1550.1 283.1,1514.7 288.0,1514.7 288.0,1540.6 292.2,1540.6 292.2,1531.1 297.1,1531.1 297.1,1538.9 301.3,1538.9 301.3,1517.0 306.2,1517.0 306.2,1540.0 310.4,1540.0 310.4,1530.5 315.3,1530.5 315.3,1538.2 319.5,1538.2 319.5,1512.2 324.4,1512.2 324.4,1525.0 328.6,1525.0 328.6,1518.6 333.5,1518.6 333.5,1530.5 337.8,1530.5 337.8,1524.9 342.7,1524.9 342.7,1531.2 346.9,1531.2 346.9,1500.0 351.8,1500.0 351.8,1511.7 356.0,1511.7 356.0,1506.4 360.9,1506.4 360.9,1516.0 365.1,1516.0 365.1,1509.0 370.0,1509.0 370.0,1519.6 374.2,1519.6 374.2,1510.1 379.1,1510.1 379.1,1519.3 383.3,1519.3 383.3,1509.4 388.2,1509.4 388.2,1535.7 392.4,1535.7 392.4,1525.6 397.3,1525.6 397.3,1534.9 401.6,1534.9 401.6,1502.3 406.5,1502.3 406.5,1523.5 410.7,1523.5 410.7,1516.9 415.6,1516.9 415.6,1529.5 419.8,1529.5 419.8,1521.1 424.7,1521.1 424.7,1528.7 428.9,1528.7 428.9,1509.9 433.8,1509.9 433.8,1531.0 438.0,1531.0 438.0,1521.2 442.9,1521.2 442.9,1529.4 447.1,1529.4 447.1,1514.3 452.0,1514.3 452.0,1521.3 456.2,1521.3 456.2,1514.7 461.1,1514.7 461.1,1524.1 465.4,1524.1 465.4,1515.2 470.3,1515.2 470.3,1526.0 474.5,1526.0 474.5,1508.7 479.4,1508.7 479.4,1515.0 483.6,1515.0 483.6,1499.6 488.5,1499.6 488.5,1509.9 492.7,1509.9 492.7,1487.5 497.6,1487.5 497.6,1506.6 501.8,1506.6 501.8,1501.5 506.7,1501.5 506.7,1515.7 510.9,1515.7 510.9,1509.1 515.8,1509.1 515.8,1515.5 520.0,1515.5 520.0,1502.8 524.9,1502.8 524.9,1520.5 529.2,1520.5 529.2,1511.0 534.1,1511.0 534.1,1521.7 538.3,1521.7 538.3,1492.5 543.2,1492.5 543.2,1502.0 547.4,1502.0 547.4,1484.4 552.3,1484.4 552.3,1492.3 556.5,1492.3 556.5,1485.4 561.4,1485.4 561.4,1532.8 565.6,1532.8 565.6,1522.6 570.5,1522.6 570.5,1529.5 574.7,1529.5 574.7,1494.3 579.6,1494.3 579.6,1500.7 583.8,1500.7 583.8,1489.2 588.7,1489.2 588.7,1499.6 593.0,1499.6 593.0,1486.3 597.9,1486.3 597.9,1495.1 602.1,1495.1 602.1,1478.2 607.0,1478.2 607.0,1487.3 611.2,1487.3 611.2,1474.7 616.1,1474.7 616.1,1495.4 620.3,1495.4 620.3,1486.4 625.2,1486.4 625.2,1500.5 629.4,1500.5 629.4,1489.6 634.3,1489.6 634.3,1497.4 638.5,1497.4 638.5,1470.3 643.4,1470.3 643.4,1480.4 647.6,1480.4 647.6,1470.3 652.5,1470.3 652.5,1483.9 656.8,1483.9 656.8,1474.7 661.7,1474.7 661.7,1505.6 665.9,1505.6 665.9,1495.4 670.8,1495.4 670.8,1503.3 675.0,1503.3 675.0,1495.7 679.9,1495.7 679.9,1505.0 684.1,1505.0 684.1,1476.2 689.0,1476.2 689.0,1484.6 693.2,1484.6 693.2,1453.3 698.1,1453.3 698.1,1499.7 702.3,1499.7 702.3,1492.8 707.2,1492.8 707.2,1499.1 711.4,1499.1 711.4,1479.2 716.3,1479.2 716.3,1504.4 720.6,1504.4 720.6,1495.7 725.5,1495.7 725.5,1501.2 729.7,1501.2 729.7,1486.1 734.6,1486.1 734.6,1496.6 738.8,1496.6 738.8,1471.6 743.7,1471.6 743.7,1489.4 747.9,1489.4 747.9,1483.5 752.8,1483.5 752.8,1488.7 757.0,1488.7 757.0,1474.2 761.9,1474.2 761.9,1479.9 766.1,1479.9 766.1,1462.2 771.0,1462.2 771.0,1472.8 775.2,1472.8 775.2,1453.2 780.1,1453.2 780.1,1460.3 784.4,1460.3 784.4,1450.1 789.3,1450.1 789.3,1468.0 793.5,1468.0 793.5,1462.2 798.4,1462.2 798.4,1467.3 802.6,1467.3 802.6,1458.4 807.5,1458.4 807.5,1463.6 811.7,1463.6 811.7,1443.5 816.6,1443.5 816.6,1482.2 820.8,1482.2 820.8,1473.1 825.7,1473.1 825.7,1481.9 829.9,1481.9 829.9,1453.5 834.8,1453.5 834.8,1462.7 839.0,1462.7 839.0,1447.5 843.9,1447.5 843.9,1456.9 848.2,1456.9 848.2,1445.4 853.1,1445.4 853.1,1458.1 857.3,1458.1 857.3,1452.8 862.2,1452.8 862.2,1461.3 866.4,1461.3 866.4,1450.8 871.3,1450.8 871.3,1458.0 875.5,1458.0 875.5,1437.5 880.4,1437.5 880.4,1466.1 884.6,1466.1 884.6,1456.1 889.5,1456.1 889.5,1466.4 893.7,1466.4 893.7,1456.5 898.6,1456.5 898.6,1466.8 902.8,1466.8 902.8,1447.5 907.7,1447.5 907.7,1461.8 912.0,1461.8 912.0,1456.4 916.9,1456.4 916.9,1469.7 921.1,1469.7 921.1,1459.5 926.0,1459.5 926.0,1477.4 930.2,1477.4 930.2,1466.9 935.1,1466.9 935.1,1477.6 939.3,1477.6 939.3,1458.1 944.2,1458.1 944.2,1463.8 948.4,1463.8 948.4,1452.4 953.3,1452.4 953.3,1467.9 957.5,1467.9 957.5,1461.6 962.4,1461.6 962.4,1467.3 966.6,1467.3 966.6,1438.5 971.5,1438.5 971.5,1443.7 975.8,1443.7 975.8,1422.3 980.7,1422.3 980.7,1453.3 984.9,1453.3 984.9,1443.2 989.8,1443.2 989.8,1453.1 994.0,1453.1 994.0,1440.2 998.9,1440.2 998.9,1449.0 1003.1,1449.0 1003.1,1437.6 1008.0,1437.6 1008.0,1447.6 1012.2,1447.6 1012.2,1434.8 1017.1,1434.8 1017.1,1443.6 1021.3,1443.6 1021.3,1431.7 1026.2,1431.7 1026.2,1442.4 1030.4,1442.4 1030.4,1435.7 1035.3,1435.7 1035.3,1441.3 1039.6,1441.3 1039.6,1431.7 1044.5,1431.7 1044.5,1437.3 1048.7,1437.3 1048.7,1424.4 1053.6,1424.4 1053.6,1438.7 1057.8,1438.7 1057.8,1429.1 1062.7,1429.1 1062.7,1435.4 1066.9,1435.4 1066.9,1417.2 1071.8,1417.2 1071.8,1429.8 1076.0,1429.8 1076.0,1422.9 1080.9,1422.9 1080.9,1435.1 1085.1,1435.1 1085.1,1427.5 1090.0,1427.5 1090.0,1432.7 1094.2,1432.7 1094.2,1422.1 1099.1,1422.1 1099.1,1434.9 1103.4,1434.9 1103.4,1428.3 1108.3,1428.3 1108.3,1435.0 1112.5,1435.0 1112.5,1416.7 1117.4,1416.7 1117.4,1429.7 1121.6,1429.7 1121.6,1420.4 1126.5,1420.4 1126.5,1428.2 1130.7,1428.2 1130.7,1420.9 1135.6,1420.9 1135.6,1427.9 1139.8,1427.9 1139.8,1415.2 1144.7,1415.2 1144.7,1426.0 1148.9,1426.0 1148.9,1402.6 1153.8,1402.6 1153.8,1410.6 1158.1,1410.6 1158.1,1374.7 1163.0,1374.7 1163.0,1410.0 1167.2,1410.0 1167.2,1399.8 1172.1,1399.8 1172.1,1413.2 1176.3,1413.2 1176.3,1404.5 1181.2,1404.5 1181.2,1409.7 1185.4,1409.7 1185.4,1369.2 1190.3,1369.2 1190.3,1413.8 1194.5,1413.8 1194.5,1406.3 1199.4,1406.3 1199.4,1413.9 1203.6,1413.9 1203.6,1401.8 1208.5,1401.8 1208.5,1411.4 1212.7,1411.4 1212.7,1395.5 1217.6,1395.5 1217.6,1402.5 1221.9,1402.5 1221.9,1376.1 1226.8,1376.1 1226.8,1393.0 1231.0,1393.0 1231.0,1383.8 1235.9,1383.8 1235.9,1402.3 1240.1,1402.3 1240.1,1394.1 1245.0,1394.1 1245.0,1400.4 1249.2,1400.4 1249.2,1387.4 1254.1,1387.4 1254.1,1398.9 1258.3,1398.9 1258.3,1388.8 1263.2,1388.8 1263.2,1394.3 1267.4,1394.3 1267.4,1383.2 1272.3,1383.2 1272.3,1399.1 1276.5,1399.1 1276.5,1389.2 1281.4,1389.2 1281.4,1395.3 1285.7,1395.3 1285.7,1376.0 1290.6,1376.0 1290.6,1382.8 1294.8,1382.8 1294.8,1377.8 1299.7,1377.8 1299.7,1384.0 1303.9,1384.0 1303.9,1375.2 1308.8,1375.2 1308.8,1384.8 1313.0,1384.8 1313.0,1374.3 1317.9,1374.3 1317.9,1388.7 1322.1,1388.7 1322.1,1377.8 1327.0,1377.8 1327.0,1382.9 1331.2,1382.9 1331.2,1362.5 1336.1,1362.5 1336.1,1370.4 1340.3,1370.4 1340.3,1359.7 1345.2,1359.7 1345.2,1367.6 1349.5,1367.6 1349.5,1346.2 1354.4,1346.2 1354.4,1369.9 1358.6,1369.9 1358.6,1360.2 1363.5,1360.2 1363.5,1366.3 1367.7,1366.3 1367.7,1355.4 1372.6,1355.4 1372.6,1363.3 1376.8,1363.3 1376.8,1355.3 1381.7,1355.3 1381.7,1362.4 1385.9,1362.4 1385.9,1348.3 1390.8,1348.3 1390.8,1358.3 1395.0,1358.3 1395.0,1345.0 1399.9,1345.0 1399.9,1358.4 1404.1,1358.4 1404.1,1351.8 1409.0,1351.8 1409.0,1362.5 1413.3,1362.5 1413.3,1328.0 1418.2,1328.0 1418.2,1348.0 1422.4,1348.0 1422.4,1341.3 1427.3,1341.3 1427.3,1347.6 1431.5,1347.6 1431.5,1318.6 1436.4,1318.6 1436.4,1343.7 1440.6,1343.7 1440.6,1334.5 1445.5,1334.5 1445.5,1342.5 1449.7,1342.5 1449.7,1333.0 1454.6,1333.0 1454.6,1338.6 1458.8,1338.6 1458.8,1317.8 1463.7,1317.8 1463.7,1334.2 1467.9,1334.2 1467.9,1325.4 1472.8,1325.4 1472.8,1330.9 1477.1,1330.9 1477.1,1325.2 1482.0,1325.2 1482.0,1334.9 1486.2,1334.9 1486.2,1322.1 1491.1,1322.1 1491.1,1331.3 1495.3,1331.3 1495.3,1306.9 1500.2,1306.9 1500.2,1316.7 1504.4,1316.7 1504.4,1285.8 1509.3,1285.8 1509.3,1312.1 1513.5,1312.1 1513.5,1303.3 1518.4,1303.3 1518.4,1310.4 1522.6,1310.4 1522.6,1300.7 1527.5,1300.7 1527.5,1308.2 1531.7,1308.2 1531.7,1292.0 1536.6,1292.0 1536.6,1299.9 1540.9,1299.9 1540.9,1292.6 1545.8,1292.6 1545.8,1303.1 1550.0,1303.1 1550.0,1292.7 1554.9,1292.7 1554.9,1298.2 1559.1,1298.2 1559.1,1285.2 1564.0,1285.2 1564.0,1295.6 1568.2,1295.6 1568.2,1280.6 1573.1,1280.6 1573.1,1285.7 1577.3,1285.7 1577.3,1267.6 1582.2,1267.6 1582.2,1278.7 1586.4,1278.7 1586.4,1272.4 1591.3,1272.4 1591.3,1279.0 1595.5,1279.0 1595.5,1266.9 1600.4,1266.9 1600.4,1277.3 1604.7,1277.3 1604.7,1255.7 1609.6,1255.7 1609.6,1263.7 1613.8,1263.7 1613.8,1248.8 1618.7,1248.8 1618.7,1256.0 1622.9,1256.0 1622.9,1242.0 1627.8,1242.0 1627.8,1252.3 1632.0,1252.3 1632.0,1233.9 1636.9,1233.9 1636.9,1240.4 1641.1,1240.4 1641.1,1230.5 1646.0,1230.5 1646.0,1238.3 1650.2,1238.3 1650.2,1221.5 1655.1,1221.5 1655.1,1229.7 1659.3,1229.7 1659.3,1219.2 1664.2,1219.2 1664.2,1228.7 1668.5,1228.7 1668.5,1216.4 1673.4,1216.4 1673.4,1225.9 1677.6,1225.9 1677.6,1210.8 1682.5,1210.8 1682.5,1219.7 1686.7,1219.7 1686.7,1199.7 1691.6,1199.7 1691.6,1206.8 1695.8,1206.8 1695.8,1188.2 1700.7,1188.2 1700.7,1195.2 1704.9,1195.2 1704.9,1177.7 1709.8,1177.7 1709.8,1183.7 1714.0,1183.7 1714.0,1168.4 1718.9,1168.4 1718.9,1178.5 1723.1,1178.5 1723.1,1159.9 1728.0,1159.9 1728.0,1168.9 1732.3,1168.9 1732.3,1148.1 1737.2,1148.1 1737.2,1157.6 1741.4,1157.6 1741.4,1135.1 1746.3,1135.1 1746.3,1141.1 1750.5,1141.1 1750.5,1128.4 1755.4,1128.4 1755.4,1136.1 1759.6,1136.1 1759.6,1107.5 1764.5,1107.5 1764.5,1117.1 1768.7,1117.1 1768.7,1093.5 1773.6,1093.5 1773.6,1101.9 1777.8,1101.9 1777.8,1068.2 1782.7,1068.2 1782.7,1074.0 1786.9,1074.0 1786.9,1048.3 1791.8,1048.3 1791.8,1056.1 1796.1,1056.1 1796.1,1017.8 1801.0,1017.8 1801.0,1028.1 1805.2,1028.1 1805.2,988.4 1810.1,988.4 1810.1,994.8 1814.3,994.8 1814.3,952.8 1819.2,952.8 1819.2,959.0 1823.4,959.0 1823.4,901.9 1828.3,901.9 1828.3,908.7 1832.5,908.7 1832.5,819.6 1837.4,819.6 1837.4,828.8 1841.6,828.8 1841.6,776.3 1846.5,776.3 1846.5,786.3 1850.7,786.3 1850.7,751.8 1855.6,751.8 1855.6,757.7 1859.9,757.7 1859.9,743.0 1864.8,743.0 1864.8,749.0 1869.0,749.0 1869.0,741.2 1873.9,741.2 1873.9,757.8 1878.1,757.8 1878.1,751.3 1883.0,751.3 1883.0,820.3 1887.2,820.3 1887.2,813.3 1892.1,813.3 1892.1,870.1 1896.3,870.1 1896.3,862.0 1901.2,862.0 1901.2,924.4 1905.4,924.4 1905.4,918.4 1910.3,918.4 1910.3,1002.9 1914.5,1002.9 1914.5,996.0 1919.4,996.0 1919.4,1024.1 1923.7,1024.1 1923.7,1017.9 1928.6,1017.9 1928.6,1052.2 1932.8,1052.2 1932.8,1041.4 1937.7,1041.4 1937.7,1075.0 1941.9,1075.0 1941.9,1065.7 1946.8,1065.7 1946.8,1094.0 1951.0,1094.0 1951.0,1088.4 1955.9,1088.4 1955.9,1119.1 1960.1,1119.1 1960.1,1108.3 1965.0,1108.3 1965.0,1114.9 1969.2,1114.9 1969.2,1109.3 1974.1,1109.3 1974.1,1133.4 1978.4,1133.4 1978.4,1126.1 1983.3,1126.1 1983.3,1149.2 1987.5,1149.2 1987.5,1138.3 1992.4,1138.3 1992.4,1156.0 1996.6,1156.0 1996.6,1146.2 2001.5,1146.2 2001.5,1178.4 2005.7,1178.4 2005.7,1169.0 2010.6,1169.0 2010.6,1181.7 2014.8,1181.7 2014.8,1174.1 2019.7,1174.1 2019.7,1181.2 2023.9,1181.2 2023.9,1175.0 2028.8,1175.0 2028.8,1203.4 2033.0,1203.4 2033.0,1194.6 2037.9,1194.6 2037.9,1200.2 2042.2,1200.2 2042.2,1193.6 2047.1,1193.6 2047.1,1204.2 2051.3,1204.2 2051.3,1197.9 2056.2,1197.9 2056.2,1219.9 2060.4,1219.9 2060.4,1212.6 2065.3,1212.6 2065.3,1223.3 2069.5,1223.3 2069.5,1218.1 2074.4,1218.1 2074.4,1235.3 2078.6,1235.3 2078.6,1227.9 2083.5,1227.9 2083.5,1244.9 2087.7,1244.9 2087.7,1235.2 2092.6,1235.2 2092.6,1255.9 2096.8,1255.9 2096.8,1246.7 2101.7,1246.7 2101.7,1255.7 2106.0,1255.7 2106.0,1247.7 2110.9,1247.7 2110.9,1256.5 2115.1,1256.5 2115.1,1245.2 2120.0,1245.2 2120.0,1262.6 2124.2,1262.6 2124.2,1254.8 2129.1,1254.8 2129.1,1273.0 2133.3,1273.0 2133.3,1267.2 2138.2,1267.2 2138.2,1275.8 2142.4,1275.8 2142.4,1261.0 2147.3,1261.0 2147.3,1276.5 2151.5,1276.5 2151.5,1269.0 2156.4,1269.0 2156.4,1284.4 2160.6,1284.4 2160.6,1275.0 2165.5,1275.0 2165.5,1304.1 2169.8,1304.1 2169.8,1293.7 2174.7,1293.7 2174.7,1301.3 2178.9,1301.3 2178.9,1288.5 2183.8,1288.5 2183.8,1305.9 2188.0,1305.9 2188.0,1297.5 2192.9,1297.5 2192.9,1310.5 2197.1,1310.5 2197.1,1301.0 2202.0,1301.0 2202.0,1311.1 2206.2,1311.1 2206.2,1303.5 2211.1,1303.5 2211.1,1311.7 2215.3,1311.7 2215.3,1305.3 2220.2,1305.3 2220.2,1319.4 2224.4,1319.4 2224.4,1310.0 2229.3,1310.0 2229.3,1327.4 2233.6,1327.4 2233.6,1317.1 2238.5,1317.1 2238.5,1328.3 2242.7,1328.3 2242.7,1318.6 2247.6,1318.6 2247.6,1328.3 2251.8,1328.3 2251.8,1319.1 2256.7,1319.1 2256.7,1337.5 2260.9,1337.5 2260.9,1327.4 2265.8,1327.4 2265.8,1342.2 2270.0,1342.2 2270.0,1333.1 2274.9,1333.1 2274.9,1343.0 2279.1,1343.0 2279.1,1334.2 2284.0,1334.2 2284.0,1341.9 2288.2,1341.9 2288.2,1329.4 2293.1,1329.4 2293.1,1337.5 2297.4,1337.5 2297.4,1330.7 2302.3,1330.7 2302.3,1339.7 2306.5,1339.7 2306.5,1330.9 2311.4,1330.9 2311.4,1343.1 2315.6,1343.1 2315.6,1337.5 2320.5,1337.5 2320.5,1352.5 2324.7,1352.5 2324.7,1345.0 2329.6,1345.0 2329.6,1355.6 2333.8,1355.6 2333.8,1345.9 2338.7,1345.9 2338.7,1355.2 2342.9,1355.2 2342.9,1346.0 2347.8,1346.0 2347.8,1354.7 2352.0,1354.7 2352.0,1345.9 2356.9,1345.9 2356.9,1370.8 2361.2,1370.8 2361.2,1364.3 2366.1,1364.3 2366.1,1383.3 2370.3,1383.3 2370.3,1375.7 2375.2,1375.7 2375.2,1383.5 2379.4,1383.5 2379.4,1361.4 2384.3,1361.4 2384.3,1388.5 2388.5,1388.5 2388.5,1379.8 2393.4,1379.8 2393.4,1387.8 2397.6,1387.8 2397.6,1380.4 2402.5,1380.4 2402.5,1389.4 2406.7,1389.4 2406.7,1365.7 2411.6,1365.7 2411.6,1390.6 2415.8,1390.6 2415.8,1380.0 2420.7,1380.0 2420.7,1386.1 2425.0,1386.1 2425.0,1378.1 2429.9,1378.1 2429.9,1388.5 2434.1,1388.5 2434.1,1379.5 2439.0,1379.5 2439.0,1389.2 2443.2,1389.2 2443.2,1378.2 2448.1,1378.2 2448.1,1387.2 2452.3,1387.2 2452.3,1379.8 2457.2,1379.8 2457.2,1387.8 2461.4,1387.8 2461.4,1378.7 2466.3,1378.7 2466.3,1396.4 2470.5,1396.4 2470.5,1385.5 2475.4,1385.5 2475.4,1397.2 2479.6,1397.2 2479.6,1392.0 2484.5,1392.0 2484.5,1400.3 2488.8,1400.3 2488.8,1391.5 2493.7,1391.5 2493.7,1397.9 2497.9,1397.9 2497.9,1392.0 2502.8,1392.0 2502.8,1401.7 2507.0,1401.7 2507.0,1389.8 2511.9,1389.8 2511.9,1411.6 2516.1,1411.6 2516.1,1400.9 2521.0,1400.9 2521.0,1412.4 2525.2,1412.4 2525.2,1404.3 2530.1,1404.3 2530.1,1409.9 2534.3,1409.9 2534.3,1404.0 2539.2,1404.0 2539.2,1428.8 2543.4,1428.8 2543.4,1420.4 2548.3,1420.4 2548.3,1428.6 2552.6,1428.6 2552.6,1415.3 2557.5,1415.3 2557.5,1424.6 2561.7,1424.6 2561.7,1402.3 2566.6,1402.3 2566.6,1428.3 2570.8,1428.3 2570.8,1420.2 2575.7,1420.2 2575.7,1429.6 2579.9,1429.6 2579.9,1420.7 2584.8,1420.7 2584.8,1430.7 2589.0,1430.7 2589.0,1395.7 2593.9,1395.7 2593.9,1413.1 2598.1,1413.1 2598.1,1405.0 2603.0,1405.0 2603.0,1435.1 2607.2,1435.1 2607.2,1427.7 2612.1,1427.7 2612.1,1438.4 2616.4,1438.4 2616.4,1402.1 2621.3,1402.1 2621.3,1433.5 2625.5,1433.5 2625.5,1427.3 2630.4,1427.3 2630.4,1445.1 2634.6,1445.1 2634.6,1436.0 2639.5,1436.0 2639.5,1443.3 2643.7,1443.3 2643.7,1435.6 2648.6,1435.6 2648.6,1445.1 2652.8,1445.1 2652.8,1430.2 2657.7,1430.2 2657.7,1436.0 2661.9,1436.0 2661.9,1430.3 2666.8,1430.3 2666.8,1444.5 2671.0,1444.5 2671.0,1433.6 2675.9,1433.6 2675.9,1440.8 2680.2,1440.8 2680.2,1431.2 2685.1,1431.2 2685.1,1442.6 2689.3,1442.6 2689.3,1437.3 2694.2,1437.3 2694.2,1443.9 2698.4,1443.9 2698.4,1434.1 2703.3,1434.1 2703.3,1441.5 2707.5,1441.5 2707.5,1418.3 2712.4,1418.3 2712.4,1442.2 2716.6,1442.2 2716.6,1437.1 2721.5,1437.1 2721.5,1453.4 2725.7,1453.4 2725.7,1445.9 2730.6,1445.9 2730.6,1453.4 2734.8,1453.4 2734.8,1432.0 2739.7,1432.0 2739.7,1452.9 2744.0,1452.9 2744.0,1443.8 2748.9,1443.8 2748.9,1450.9 2753.1,1450.9 2753.1,1435.2 2758.0,1435.2 2758.0,1455.6 2762.2,1455.6 2762.2,1449.0 2767.1,1449.0 2767.1,1455.3 2771.3,1455.3 2771.3,1442.9 2776.2,1442.9 2776.2,1452.4 2780.4,1452.4 2780.4,1439.5 2785.3,1439.5 2785.3,1459.4 2789.5,1459.4 2789.5,1448.8 2794.4,1448.8 2794.4,1457.0 2798.7,1457.0 2798.7,1433.0 2803.6,1433.0 2803.6,1441.9 2807.8,1441.9 2807.8,1435.6 2812.7,1435.6 2812.7,1477.4 2816.9,1477.4 2816.9,1467.6 2821.8,1467.6 2821.8,1475.0 2826.0,1475.0 2826.0,1464.3 2830.9,1464.3 2830.9,1470.6 2835.1,1470.6 2835.1,1448.8 2840.0,1448.8 2840.0,1466.3 2844.2,1466.3 2844.2,1460.5 2849.1,1460.5 2849.1,1476.1 2853.3,1476.1 2853.3,1466.5 2858.2,1466.5 2858.2,1485.5 2862.5,1485.5 2862.5,1475.7 2867.4,1475.7 2867.4,1489.1 2871.6,1489.1 2871.6,1480.2 2876.5,1480.2 2876.5,1497.2 2880.7,1497.2 2880.7,1489.4 2885.6,1489.4 2885.6,1500.0 2889.8,1500.0 2889.8,1491.6 2894.7,1491.6 2894.7,1511.9 2898.9,1511.9 2898.9,1505.6 2903.8,1505.6 2903.8,1516.4 2908.0,1516.4 2908.0,1489.6 2912.9,1489.6 2912.9,1504.8 2917.1,1504.8 2917.1,1497.7 2922.0,1497.7 2922.0,1506.6 2926.3,1506.6 2926.3,1487.4 2931.2,1487.4 2931.2,1501.4 2935.4,1501.4 2935.4,1491.5 2940.3,1491.5 2940.3,1510.9 2944.5,1510.9 2944.5,1501.0 2949.4,1501.0 2949.4,1512.9 2953.6,1512.9 2953.6,1505.1 2958.5,1505.1 2958.5,1511.9 2962.7,1511.9 2962.7,1477.1 2967.6,1477.1 2967.6,1491.9 2971.8,1491.9 2971.8,1483.6 2976.7,1483.6 2976.7,1513.4 2980.9,1513.4 2980.9,1507.6 2985.8,1507.6 2985.8,1517.6 2990.1,1517.6 2990.1,1501.4 2995.0,1501.4 2995.0,1508.5 2999.2,1508.5 2999.2,1498.4 3004.1,1498.4 3004.1,1508.5 3008.3,1508.5 3008.3,1496.0 3013.2,1496.0 3013.2,1502.6 3017.4,1502.6 3017.4,1489.4 3022.3,1489.4 3022.3,1515.4 3026.5,1515.4 3026.5,1508.2 3031.4,1508.2 3031.4,1514.7 3035.6,1514.7 3035.6,1501.4 3040.5,1501.4 3040.5,1509.0 3044.7,1509.0 3044.7,1490.2 3049.6,1490.2 3049.6,1521.5 3053.9,1521.5 3053.9,1515.4 3058.8,1515.4 3058.8,1528.3 3063.0,1528.3 3063.0,1523.3 3067.9,1523.3 3067.9,1532.6 3072.1,1532.6 3072.1,1515.9 3077.0,1515.9 3077.0,1522.6 3081.2,1522.6 3081.2,1515.9 3086.1,1515.9 3086.1,1522.4 3090.3,1522.4 3090.3,1510.1 3095.2,1510.1 3095.2,1516.9 3099.4,1516.9 3099.4,1506.1 3104.3,1506.1 3104.3,1527.3 3108.5,1527.3 3108.5,1519.4 3113.4,1519.4 3113.4,1534.9 3117.7,1534.9 3117.7,1527.3 3122.6,1527.3 3122.6,1536.1 3126.8,1536.1 3126.8,1518.5 3131.7,1518.5 3131.7,1532.2 3135.9,1532.2 3135.9,1523.2 3140.8,1523.2 3140.8,1530.4 3145.0,1530.4 3145.0,1505.6 3149.9,1505.6 3149.9,1525.0 3154.1,1525.0 3154.1,1514.4 3159.0,1514.4 3159.0,1524.5 3163.2,1524.5 3163.2,1506.2 3168.1,1506.2 3168.1,1521.0 3172.3,1521.0 3172.3,1515.7 3177.2,1515.7 3177.2,1525.7 3181.5,1525.7 3181.5,1514.0 3186.4,1514.0 3186.4,1529.1 3190.6,1529.1 3190.6,1518.7 3195.5,1518.7 3195.5,1540.6 3199.7,1540.6 3199.7,1530.9 3204.6,1530.9 3204.6,1536.8 3208.8,1536.8 3208.8,1521.1 3213.7,1521.1 3213.7,1531.1 3217.9,1531.1 3217.9,1516.7 3222.8,1516.7 3222.8,1525.5 3227.0,1525.5 3227.0,1505.6 3231.9,1505.6 3231.9,1535.3 3236.1,1535.3 3236.1,1530.2 3241.0,1530.2 3241.0,1541.7 3245.3,1541.7 3245.3,1536.7 3250.2,1536.7 3250.2,1547.4 3254.4,1547.4 3254.4,1508.3 3259.3,1508.3 3259.3,1525.8 3263.5,1525.8 3263.5,1516.8 3268.4,1516.8 3268.4,1523.3 3272.6,1523.3 3272.6,1515.2 3277.5,1515.2 3277.5,1524.7 3281.7,1524.7 3281.7,1519.1 3286.6,1519.1 3286.6,1547.3 3290.8,1547.3 3290.8,1541.4 3295.7,1541.4 3295.7,1547.8 3299.9,1547.8 3299.9,1524.9 3304.8,1524.9 3304.8,1534.8 3309.1,1534.8 3309.1,1525.2 3314.0,1525.2 3314.0,1541.4 3318.2,1541.4 3318.2,1534.3 3323.1,1534.3 3323.1,1540.2 3327.3,1540.2 3327.3,1517.8 3332.2,1517.8 3332.2,1528.2 3336.4,1528.2 3336.4,1515.9 3341.3,1515.9 3341.3,1528.5 3345.5,1528.5 3345.5,1518.7 3350.4,1518.7 3350.4,1538.7 3354.6,1538.7 3354.6,1532.7 3359.5,1532.7 3359.5,1547.2 3363.7,1547.2 3363.7,1536.8 3368.6,1536.8 3368.6,1545.5 3372.9,1545.5 3372.9,1534.0 3377.8,1534.0 3377.8,1543.6 3382.0,1543.6 3382.0,1530.1 3386.9,1530.1 3386.9,1539.1 3391.1,1539.1 3391.1,1504.9 3396.0,1504.9 3396.0,1536.4 3400.2,1536.4 3400.2,1526.0 3405.1,1526.0 3405.1,1542.8 3409.3,1542.8 3409.3,1533.1 3414.2,1533.1 3414.2,1565.7 3418.4,1565.7 3418.4,1555.7 3423.3,1555.7 3423.3,1561.9 3427.5,1561.9 3427.5,1538.7 3432.4,1538.7 3432.4,1559.9 3436.7,1559.9 3436.7,1550.7 3441.6,1550.7 3441.6,1558.9 3445.8,1558.9 3445.8,1534.3 3450.7,1534.3 3450.7,1543.7 3454.9,1543.7 3454.9,1517.3 3459.8,1517.3 3459.8,1535.0 3464.0,1535.0 3464.0,1527.3 3468.9,1527.3 3468.9,1540.3 3473.1,1540.3 3473.1,1530.0 3478.0,1530.0 3478.0,1538.3 3482.2,1538.3 3482.2,1528.3 3487.1,1528.3 3487.1,1534.9 3491.3,1534.9 3491.3,1519.9 3496.2,1519.9 3496.2,1527.9 3500.5,1527.9 3500.5,1521.5 3505.4,1521.5 3505.4,1527.3 3509.6,1527.3 3509.6,1800 219.3,1800" fill="url(#st)"/>
<rect x="305.9" y="1513.9" width="4.8" height="302.0" fill="#000"/><rect x="470.0" y="1496.7" width="4.8" height="284.7" fill="#000"/><rect x="634.0" y="1477.4" width="4.8" height="283.9" fill="#000"/><rect x="798.1" y="1455.4" width="4.8" height="314.1" fill="#000"/><rect x="962.1" y="1430.6" width="4.8" height="363.7" fill="#000"/><rect x="1126.2" y="1400.7" width="4.8" height="388.4" fill="#000"/><rect x="1290.3" y="1362.6" width="4.8" height="394.6" fill="#000"/><rect x="1454.3" y="1315.0" width="4.8" height="439.1" fill="#000"/><rect x="1618.4" y="1234.4" width="4.8" height="475.5" fill="#000"/><rect x="1782.4" y="1046.5" width="4.8" height="599.1" fill="#000"/><rect x="1946.5" y="1064.5" width="4.8" height="602.6" fill="#000"/><rect x="2110.6" y="1235.0" width="4.8" height="503.6" fill="#000"/><rect x="2274.6" y="1318.9" width="4.8" height="413.6" fill="#000"/><rect x="2438.7" y="1369.6" width="4.8" height="415.4" fill="#000"/><rect x="2602.7" y="1410.8" width="4.8" height="345.8" fill="#000"/><rect x="2766.8" y="1443.1" width="4.8" height="338.4" fill="#000"/><rect x="2930.9" y="1476.2" width="4.8" height="308.3" fill="#000"/><rect x="3094.9" y="1497.1" width="4.8" height="273.5" fill="#000"/><rect x="3259.0" y="1511.4" width="4.8" height="259.0" fill="#000"/><rect x="3423.0" y="1518.9" width="4.8" height="291.4" fill="#000"/>
<polygon points="219.3,1715.3 224.2,1715.3 224.2,1718.6 228.4,1718.6 228.4,1723.8 233.3,1723.8 233.3,1730.9 237.5,1730.9 237.5,1719.8 242.4,1719.8 242.4,1730.9 246.6,1730.9 246.6,1721.5 251.5,1721.5 251.5,1726.9 255.7,1726.9 255.7,1721.4 260.6,1721.4 260.6,1719.6 264.8,1719.6 264.8,1716.8 269.7,1716.8 269.7,1726.5 273.9,1726.5 273.9,1716.4 278.8,1716.4 278.8,1719.9 283.1,1719.9 283.1,1730.4 288.0,1730.4 288.0,1739.2 292.2,1739.2 292.2,1726.6 297.1,1726.6 297.1,1718.3 301.3,1718.3 301.3,1707.8 306.2,1707.8 306.2,1728.5 310.4,1728.5 310.4,1723.9 315.3,1723.9 315.3,1720.9 319.5,1720.9 319.5,1716.4 324.4,1716.4 324.4,1724.3 328.6,1724.3 328.6,1729.1 333.5,1729.1 333.5,1733.0 337.8,1733.0 337.8,1711.4 342.7,1711.4 342.7,1729.4 346.9,1729.4 346.9,1721.8 351.8,1721.8 351.8,1728.9 356.0,1728.9 356.0,1717.0 360.9,1717.0 360.9,1721.1 365.1,1721.1 365.1,1724.8 370.0,1724.8 370.0,1739.1 374.2,1739.1 374.2,1656.1 379.1,1656.1 379.1,1731.6 383.3,1731.6 383.3,1725.1 388.2,1725.1 388.2,1733.8 392.4,1733.8 392.4,1733.2 397.3,1733.2 397.3,1731.5 401.6,1731.5 401.6,1718.2 406.5,1718.2 406.5,1727.6 410.7,1727.6 410.7,1707.1 415.6,1707.1 415.6,1708.7 419.8,1708.7 419.8,1703.1 424.7,1703.1 424.7,1697.6 428.9,1697.6 428.9,1695.6 433.8,1695.6 433.8,1707.3 438.0,1707.3 438.0,1701.1 442.9,1701.1 442.9,1724.6 447.1,1724.6 447.1,1715.2 452.0,1715.2 452.0,1717.7 456.2,1717.7 456.2,1728.2 461.1,1728.2 461.1,1736.2 465.4,1736.2 465.4,1732.9 470.3,1732.9 470.3,1734.8 474.5,1734.8 474.5,1728.2 479.4,1728.2 479.4,1739.2 483.6,1739.2 483.6,1744.6 488.5,1744.6 488.5,1741.1 492.7,1741.1 492.7,1740.7 497.6,1740.7 497.6,1736.9 501.8,1736.9 501.8,1732.0 506.7,1732.0 506.7,1724.7 510.9,1724.7 510.9,1724.9 515.8,1724.9 515.8,1722.1 520.0,1722.1 520.0,1712.6 524.9,1712.6 524.9,1706.0 529.2,1706.0 529.2,1702.8 534.1,1702.8 534.1,1705.3 538.3,1705.3 538.3,1706.9 543.2,1706.9 543.2,1702.1 547.4,1702.1 547.4,1698.8 552.3,1698.8 552.3,1703.2 556.5,1703.2 556.5,1703.8 561.4,1703.8 561.4,1707.7 565.6,1707.7 565.6,1710.2 570.5,1710.2 570.5,1716.9 574.7,1716.9 574.7,1717.4 579.6,1717.4 579.6,1713.4 583.8,1713.4 583.8,1711.2 588.7,1711.2 588.7,1711.1 593.0,1711.1 593.0,1713.0 597.9,1713.0 597.9,1708.6 602.1,1708.6 602.1,1699.7 607.0,1699.7 607.0,1700.6 611.2,1700.6 611.2,1705.4 616.1,1705.4 616.1,1716.9 620.3,1716.9 620.3,1714.4 625.2,1714.4 625.2,1719.4 629.4,1719.4 629.4,1715.7 634.3,1715.7 634.3,1714.3 638.5,1714.3 638.5,1717.5 643.4,1717.5 643.4,1725.3 647.6,1725.3 647.6,1718.6 652.5,1718.6 652.5,1725.3 656.8,1725.3 656.8,1643.7 661.7,1643.7 661.7,1724.0 665.9,1724.0 665.9,1657.0 670.8,1657.0 670.8,1728.7 675.0,1728.7 675.0,1727.2 679.9,1727.2 679.9,1729.2 684.1,1729.2 684.1,1714.7 689.0,1714.7 689.0,1709.9 693.2,1709.9 693.2,1717.2 698.1,1717.2 698.1,1715.9 702.3,1715.9 702.3,1712.3 707.2,1712.3 707.2,1712.7 711.4,1712.7 711.4,1705.9 716.3,1705.9 716.3,1716.9 720.6,1716.9 720.6,1719.5 725.5,1719.5 725.5,1718.7 729.7,1718.7 729.7,1722.6 734.6,1722.6 734.6,1728.8 738.8,1728.8 738.8,1732.6 743.7,1732.6 743.7,1747.5 747.9,1747.5 747.9,1754.4 752.8,1754.4 752.8,1763.1 757.0,1763.1 757.0,1758.8 761.9,1758.8 761.9,1756.0 766.1,1756.0 766.1,1750.9 771.0,1750.9 771.0,1742.0 775.2,1742.0 775.2,1728.6 780.1,1728.6 780.1,1721.0 784.4,1721.0 784.4,1719.6 789.3,1719.6 789.3,1725.6 793.5,1725.6 793.5,1718.5 798.4,1718.5 798.4,1713.8 802.6,1713.8 802.6,1712.9 807.5,1712.9 807.5,1715.2 811.7,1715.2 811.7,1708.8 816.6,1708.8 816.6,1699.1 820.8,1699.1 820.8,1681.2 825.7,1681.2 825.7,1690.2 829.9,1690.2 829.9,1695.0 834.8,1695.0 834.8,1712.0 839.0,1712.0 839.0,1709.6 843.9,1709.6 843.9,1718.2 848.2,1718.2 848.2,1726.7 853.1,1726.7 853.1,1742.4 857.3,1742.4 857.3,1736.2 862.2,1736.2 862.2,1738.7 866.4,1738.7 866.4,1718.9 871.3,1718.9 871.3,1730.4 875.5,1730.4 875.5,1731.9 880.4,1731.9 880.4,1737.3 884.6,1737.3 884.6,1730.8 889.5,1730.8 889.5,1734.2 893.7,1734.2 893.7,1727.6 898.6,1727.6 898.6,1739.3 902.8,1739.3 902.8,1721.0 907.7,1721.0 907.7,1722.9 912.0,1722.9 912.0,1715.7 916.9,1715.7 916.9,1728.4 921.1,1728.4 921.1,1719.5 926.0,1719.5 926.0,1733.2 930.2,1733.2 930.2,1640.7 935.1,1640.7 935.1,1728.0 939.3,1728.0 939.3,1714.7 944.2,1714.7 944.2,1719.0 948.4,1719.0 948.4,1716.0 953.3,1716.0 953.3,1721.7 957.5,1721.7 957.5,1708.6 962.4,1708.6 962.4,1714.4 966.6,1714.4 966.6,1726.4 971.5,1726.4 971.5,1741.8 975.8,1741.8 975.8,1729.4 980.7,1729.4 980.7,1716.5 984.9,1716.5 984.9,1712.0 989.8,1712.0 989.8,1725.6 994.0,1725.6 994.0,1732.3 998.9,1732.3 998.9,1722.7 1003.1,1722.7 1003.1,1710.3 1008.0,1710.3 1008.0,1714.5 1012.2,1714.5 1012.2,1709.9 1017.1,1709.9 1017.1,1721.7 1021.3,1721.7 1021.3,1706.5 1026.2,1706.5 1026.2,1706.5 1030.4,1706.5 1030.4,1695.3 1035.3,1695.3 1035.3,1696.5 1039.6,1696.5 1039.6,1696.3 1044.5,1696.3 1044.5,1705.9 1048.7,1705.9 1048.7,1701.2 1053.6,1701.2 1053.6,1710.5 1057.8,1710.5 1057.8,1695.5 1062.7,1695.5 1062.7,1710.9 1066.9,1710.9 1066.9,1689.8 1071.8,1689.8 1071.8,1710.4 1076.0,1710.4 1076.0,1719.0 1080.9,1719.0 1080.9,1721.6 1085.1,1721.6 1085.1,1721.2 1090.0,1721.2 1090.0,1721.9 1094.2,1721.9 1094.2,1711.2 1099.1,1711.2 1099.1,1709.4 1103.4,1709.4 1103.4,1720.0 1108.3,1720.0 1108.3,1707.8 1112.5,1707.8 1112.5,1697.0 1117.4,1697.0 1117.4,1687.3 1121.6,1687.3 1121.6,1691.1 1126.5,1691.1 1126.5,1700.4 1130.7,1700.4 1130.7,1689.7 1135.6,1689.7 1135.6,1685.5 1139.8,1685.5 1139.8,1646.7 1144.7,1646.7 1144.7,1707.3 1148.9,1707.3 1148.9,1716.4 1153.8,1716.4 1153.8,1720.1 1158.1,1720.1 1158.1,1708.5 1163.0,1708.5 1163.0,1716.2 1167.2,1716.2 1167.2,1646.2 1172.1,1646.2 1172.1,1714.0 1176.3,1714.0 1176.3,1701.9 1181.2,1701.9 1181.2,1710.8 1185.4,1710.8 1185.4,1709.6 1190.3,1709.6 1190.3,1714.2 1194.5,1714.2 1194.5,1722.3 1199.4,1722.3 1199.4,1734.2 1203.6,1734.2 1203.6,1729.9 1208.5,1729.9 1208.5,1730.6 1212.7,1730.6 1212.7,1709.1 1217.6,1709.1 1217.6,1706.7 1221.9,1706.7 1221.9,1712.3 1226.8,1712.3 1226.8,1704.8 1231.0,1704.8 1231.0,1689.6 1235.9,1689.6 1235.9,1694.0 1240.1,1694.0 1240.1,1694.7 1245.0,1694.7 1245.0,1710.8 1249.2,1710.8 1249.2,1715.0 1254.1,1715.0 1254.1,1721.4 1258.3,1721.4 1258.3,1717.1 1263.2,1717.1 1263.2,1732.4 1267.4,1732.4 1267.4,1722.5 1272.3,1722.5 1272.3,1728.7 1276.5,1728.7 1276.5,1722.5 1281.4,1722.5 1281.4,1724.5 1285.7,1724.5 1285.7,1666.9 1290.6,1666.9 1290.6,1726.3 1294.8,1726.3 1294.8,1722.9 1299.7,1722.9 1299.7,1736.0 1303.9,1736.0 1303.9,1729.2 1308.8,1729.2 1308.8,1729.5 1313.0,1729.5 1313.0,1720.5 1317.9,1720.5 1317.9,1717.2 1322.1,1717.2 1322.1,1712.1 1327.0,1712.1 1327.0,1710.6 1331.2,1710.6 1331.2,1716.8 1336.1,1716.8 1336.1,1723.3 1340.3,1723.3 1340.3,1725.7 1345.2,1725.7 1345.2,1729.2 1349.5,1729.2 1349.5,1724.2 1354.4,1724.2 1354.4,1727.6 1358.6,1727.6 1358.6,1724.6 1363.5,1724.6 1363.5,1708.9 1367.7,1708.9 1367.7,1709.6 1372.6,1709.6 1372.6,1707.0 1376.8,1707.0 1376.8,1712.4 1381.7,1712.4 1381.7,1708.5 1385.9,1708.5 1385.9,1705.9 1390.8,1705.9 1390.8,1710.3 1395.0,1710.3 1395.0,1712.2 1399.9,1712.2 1399.9,1711.3 1404.1,1711.3 1404.1,1708.9 1409.0,1708.9 1409.0,1708.4 1413.3,1708.4 1413.3,1642.7 1418.2,1642.7 1418.2,1704.4 1422.4,1704.4 1422.4,1684.9 1427.3,1684.9 1427.3,1691.1 1431.5,1691.1 1431.5,1683.0 1436.4,1683.0 1436.4,1684.6 1440.6,1684.6 1440.6,1673.1 1445.5,1673.1 1445.5,1683.6 1449.7,1683.6 1449.7,1689.5 1454.6,1689.5 1454.6,1713.5 1458.8,1713.5 1458.8,1703.5 1463.7,1703.5 1463.7,1712.3 1467.9,1712.3 1467.9,1698.8 1472.8,1698.8 1472.8,1697.3 1477.1,1697.3 1477.1,1691.9 1482.0,1691.9 1482.0,1682.5 1486.2,1682.5 1486.2,1667.0 1491.1,1667.0 1491.1,1672.2 1495.3,1672.2 1495.3,1676.5 1500.2,1676.5 1500.2,1685.1 1504.4,1685.1 1504.4,1690.6 1509.3,1690.6 1509.3,1698.4 1513.5,1698.4 1513.5,1698.3 1518.4,1698.3 1518.4,1709.6 1522.6,1709.6 1522.6,1713.2 1527.5,1713.2 1527.5,1696.2 1531.7,1696.2 1531.7,1696.0 1536.6,1696.0 1536.6,1698.5 1540.9,1698.5 1540.9,1649.9 1545.8,1649.9 1545.8,1691.3 1550.0,1691.3 1550.0,1673.8 1554.9,1673.8 1554.9,1657.7 1559.1,1657.7 1559.1,1660.8 1564.0,1660.8 1564.0,1665.0 1568.2,1665.0 1568.2,1659.1 1573.1,1659.1 1573.1,1649.7 1577.3,1649.7 1577.3,1647.8 1582.2,1647.8 1582.2,1656.7 1586.4,1656.7 1586.4,1653.5 1591.3,1653.5 1591.3,1650.5 1595.5,1650.5 1595.5,1645.3 1600.4,1645.3 1600.4,1651.7 1604.7,1651.7 1604.7,1655.6 1609.6,1655.6 1609.6,1663.9 1613.8,1663.9 1613.8,1657.1 1618.7,1657.1 1618.7,1668.4 1622.9,1668.4 1622.9,1606.8 1627.8,1606.8 1627.8,1668.8 1632.0,1668.8 1632.0,1658.3 1636.9,1658.3 1636.9,1661.7 1641.1,1661.7 1641.1,1653.6 1646.0,1653.6 1646.0,1657.4 1650.2,1657.4 1650.2,1663.1 1655.1,1663.1 1655.1,1669.4 1659.3,1669.4 1659.3,1663.9 1664.2,1663.9 1664.2,1679.5 1668.5,1679.5 1668.5,1682.2 1673.4,1682.2 1673.4,1679.2 1677.6,1679.2 1677.6,1680.9 1682.5,1680.9 1682.5,1678.0 1686.7,1678.0 1686.7,1679.8 1691.6,1679.8 1691.6,1688.2 1695.8,1688.2 1695.8,1675.8 1700.7,1675.8 1700.7,1667.1 1704.9,1667.1 1704.9,1665.5 1709.8,1665.5 1709.8,1667.4 1714.0,1667.4 1714.0,1660.1 1718.9,1660.1 1718.9,1649.8 1723.1,1649.8 1723.1,1634.5 1728.0,1634.5 1728.0,1632.7 1732.3,1632.7 1732.3,1631.9 1737.2,1631.9 1737.2,1641.8 1741.4,1641.8 1741.4,1632.1 1746.3,1632.1 1746.3,1627.5 1750.5,1627.5 1750.5,1631.6 1755.4,1631.6 1755.4,1645.4 1759.6,1645.4 1759.6,1628.6 1764.5,1628.6 1764.5,1637.3 1768.7,1637.3 1768.7,1619.6 1773.6,1619.6 1773.6,1628.2 1777.8,1628.2 1777.8,1621.8 1782.7,1621.8 1782.7,1615.9 1786.9,1615.9 1786.9,1599.7 1791.8,1599.7 1791.8,1609.2 1796.1,1609.2 1796.1,1588.5 1801.0,1588.5 1801.0,1600.0 1805.2,1600.0 1805.2,1565.2 1810.1,1565.2 1810.1,1575.8 1814.3,1575.8 1814.3,1543.6 1819.2,1543.6 1819.2,1548.4 1823.4,1548.4 1823.4,1511.0 1828.3,1511.0 1828.3,1516.5 1832.5,1516.5 1832.5,1480.7 1837.4,1480.7 1837.4,1475.0 1841.6,1475.0 1841.6,1454.5 1846.5,1454.5 1846.5,1452.0 1850.7,1452.0 1850.7,1427.0 1855.6,1427.0 1855.6,1444.1 1859.9,1444.1 1859.9,1428.0 1864.8,1428.0 1864.8,1454.7 1869.0,1454.7 1869.0,1476.8 1873.9,1476.8 1873.9,1483.3 1878.1,1483.3 1878.1,1502.8 1883.0,1502.8 1883.0,1515.7 1887.2,1515.7 1887.2,1525.4 1892.1,1525.4 1892.1,1514.1 1896.3,1514.1 1896.3,1537.3 1901.2,1537.3 1901.2,1537.8 1905.4,1537.8 1905.4,1559.2 1910.3,1559.2 1910.3,1557.7 1914.5,1557.7 1914.5,1563.1 1919.4,1563.1 1919.4,1567.9 1923.7,1567.9 1923.7,1574.1 1928.6,1574.1 1928.6,1572.0 1932.8,1572.0 1932.8,1573.3 1937.7,1573.3 1937.7,1580.6 1941.9,1580.6 1941.9,1590.5 1946.8,1590.5 1946.8,1592.5 1951.0,1592.5 1951.0,1602.5 1955.9,1602.5 1955.9,1602.3 1960.1,1602.3 1960.1,1623.8 1965.0,1623.8 1965.0,1633.4 1969.2,1633.4 1969.2,1631.9 1974.1,1631.9 1974.1,1629.9 1978.4,1629.9 1978.4,1634.8 1983.3,1634.8 1983.3,1642.2 1987.5,1642.2 1987.5,1640.3 1992.4,1640.3 1992.4,1637.1 1996.6,1637.1 1996.6,1630.2 2001.5,1630.2 2001.5,1638.3 2005.7,1638.3 2005.7,1636.9 2010.6,1636.9 2010.6,1634.1 2014.8,1634.1 2014.8,1637.5 2019.7,1637.5 2019.7,1639.9 2023.9,1639.9 2023.9,1620.0 2028.8,1620.0 2028.8,1652.9 2033.0,1652.9 2033.0,1651.7 2037.9,1651.7 2037.9,1656.6 2042.2,1656.6 2042.2,1663.9 2047.1,1663.9 2047.1,1663.8 2051.3,1663.8 2051.3,1674.1 2056.2,1674.1 2056.2,1673.5 2060.4,1673.5 2060.4,1608.1 2065.3,1608.1 2065.3,1676.1 2069.5,1676.1 2069.5,1680.1 2074.4,1680.1 2074.4,1684.4 2078.6,1684.4 2078.6,1687.2 2083.5,1687.2 2083.5,1686.6 2087.7,1686.6 2087.7,1689.8 2092.6,1689.8 2092.6,1685.7 2096.8,1685.7 2096.8,1630.3 2101.7,1630.3 2101.7,1707.4 2106.0,1707.4 2106.0,1643.0 2110.9,1643.0 2110.9,1703.3 2115.1,1703.3 2115.1,1698.2 2120.0,1698.2 2120.0,1704.3 2124.2,1704.3 2124.2,1709.5 2129.1,1709.5 2129.1,1710.1 2133.3,1710.1 2133.3,1692.4 2138.2,1692.4 2138.2,1700.4 2142.4,1700.4 2142.4,1700.3 2147.3,1700.3 2147.3,1714.2 2151.5,1714.2 2151.5,1709.8 2156.4,1709.8 2156.4,1698.8 2160.6,1698.8 2160.6,1691.6 2165.5,1691.6 2165.5,1708.2 2169.8,1708.2 2169.8,1696.5 2174.7,1696.5 2174.7,1700.4 2178.9,1700.4 2178.9,1700.6 2183.8,1700.6 2183.8,1704.3 2188.0,1704.3 2188.0,1715.2 2192.9,1715.2 2192.9,1720.9 2197.1,1720.9 2197.1,1704.2 2202.0,1704.2 2202.0,1713.7 2206.2,1713.7 2206.2,1703.5 2211.1,1703.5 2211.1,1698.0 2215.3,1698.0 2215.3,1694.0 2220.2,1694.0 2220.2,1691.7 2224.4,1691.7 2224.4,1690.6 2229.3,1690.6 2229.3,1702.7 2233.6,1702.7 2233.6,1667.8 2238.5,1667.8 2238.5,1713.6 2242.7,1713.6 2242.7,1712.3 2247.6,1712.3 2247.6,1713.3 2251.8,1713.3 2251.8,1709.3 2256.7,1709.3 2256.7,1709.3 2260.9,1709.3 2260.9,1710.1 2265.8,1710.1 2265.8,1714.8 2270.0,1714.8 2270.0,1697.8 2274.9,1697.8 2274.9,1696.9 2279.1,1696.9 2279.1,1693.4 2284.0,1693.4 2284.0,1696.2 2288.2,1696.2 2288.2,1702.2 2293.1,1702.2 2293.1,1693.9 2297.4,1693.9 2297.4,1693.2 2302.3,1693.2 2302.3,1703.2 2306.5,1703.2 2306.5,1697.7 2311.4,1697.7 2311.4,1702.6 2315.6,1702.6 2315.6,1701.9 2320.5,1701.9 2320.5,1703.1 2324.7,1703.1 2324.7,1704.1 2329.6,1704.1 2329.6,1707.2 2333.8,1707.2 2333.8,1695.9 2338.7,1695.9 2338.7,1700.3 2342.9,1700.3 2342.9,1701.5 2347.8,1701.5 2347.8,1711.1 2352.0,1711.1 2352.0,1706.2 2356.9,1706.2 2356.9,1709.4 2361.2,1709.4 2361.2,1710.9 2366.1,1710.9 2366.1,1712.8 2370.3,1712.8 2370.3,1684.1 2375.2,1684.1 2375.2,1715.2 2379.4,1715.2 2379.4,1710.8 2384.3,1710.8 2384.3,1709.8 2388.5,1709.8 2388.5,1701.1 2393.4,1701.1 2393.4,1706.9 2397.6,1706.9 2397.6,1715.1 2402.5,1715.1 2402.5,1718.6 2406.7,1718.6 2406.7,1711.3 2411.6,1711.3 2411.6,1716.5 2415.8,1716.5 2415.8,1704.6 2420.7,1704.6 2420.7,1723.3 2425.0,1723.3 2425.0,1715.5 2429.9,1715.5 2429.9,1708.5 2434.1,1708.5 2434.1,1712.5 2439.0,1712.5 2439.0,1707.5 2443.2,1707.5 2443.2,1704.3 2448.1,1704.3 2448.1,1723.0 2452.3,1723.0 2452.3,1724.4 2457.2,1724.4 2457.2,1721.7 2461.4,1721.7 2461.4,1727.7 2466.3,1727.7 2466.3,1733.1 2470.5,1733.1 2470.5,1734.4 2475.4,1734.4 2475.4,1729.3 2479.6,1729.3 2479.6,1721.3 2484.5,1721.3 2484.5,1713.9 2488.8,1713.9 2488.8,1707.3 2493.7,1707.3 2493.7,1713.6 2497.9,1713.6 2497.9,1706.9 2502.8,1706.9 2502.8,1714.4 2507.0,1714.4 2507.0,1721.9 2511.9,1721.9 2511.9,1726.1 2516.1,1726.1 2516.1,1728.6 2521.0,1728.6 2521.0,1735.3 2525.2,1735.3 2525.2,1732.3 2530.1,1732.3 2530.1,1724.2 2534.3,1724.2 2534.3,1720.5 2539.2,1720.5 2539.2,1715.3 2543.4,1715.3 2543.4,1710.2 2548.3,1710.2 2548.3,1704.8 2552.6,1704.8 2552.6,1701.5 2557.5,1701.5 2557.5,1698.2 2561.7,1698.2 2561.7,1692.7 2566.6,1692.7 2566.6,1692.8 2570.8,1692.8 2570.8,1686.7 2575.7,1686.7 2575.7,1690.5 2579.9,1690.5 2579.9,1684.1 2584.8,1684.1 2584.8,1689.1 2589.0,1689.1 2589.0,1692.2 2593.9,1692.2 2593.9,1705.8 2598.1,1705.8 2598.1,1702.1 2603.0,1702.1 2603.0,1715.5 2607.2,1715.5 2607.2,1719.1 2612.1,1719.1 2612.1,1732.8 2616.4,1732.8 2616.4,1687.5 2621.3,1687.5 2621.3,1733.9 2625.5,1733.9 2625.5,1730.8 2630.4,1730.8 2630.4,1742.7 2634.6,1742.7 2634.6,1729.5 2639.5,1729.5 2639.5,1728.1 2643.7,1728.1 2643.7,1721.7 2648.6,1721.7 2648.6,1721.8 2652.8,1721.8 2652.8,1718.3 2657.7,1718.3 2657.7,1727.8 2661.9,1727.8 2661.9,1717.7 2666.8,1717.7 2666.8,1728.0 2671.0,1728.0 2671.0,1730.1 2675.9,1730.1 2675.9,1735.4 2680.2,1735.4 2680.2,1733.4 2685.1,1733.4 2685.1,1733.1 2689.3,1733.1 2689.3,1718.1 2694.2,1718.1 2694.2,1719.9 2698.4,1719.9 2698.4,1714.9 2703.3,1714.9 2703.3,1721.0 2707.5,1721.0 2707.5,1708.0 2712.4,1708.0 2712.4,1709.9 2716.6,1709.9 2716.6,1707.7 2721.5,1707.7 2721.5,1714.5 2725.7,1714.5 2725.7,1712.4 2730.6,1712.4 2730.6,1717.5 2734.8,1717.5 2734.8,1707.4 2739.7,1707.4 2739.7,1723.2 2744.0,1723.2 2744.0,1661.5 2748.9,1661.5 2748.9,1725.6 2753.1,1725.6 2753.1,1730.1 2758.0,1730.1 2758.0,1735.8 2762.2,1735.8 2762.2,1730.9 2767.1,1730.9 2767.1,1731.1 2771.3,1731.1 2771.3,1716.2 2776.2,1716.2 2776.2,1723.1 2780.4,1723.1 2780.4,1711.8 2785.3,1711.8 2785.3,1725.4 2789.5,1725.4 2789.5,1718.9 2794.4,1718.9 2794.4,1728.7 2798.7,1728.7 2798.7,1728.7 2803.6,1728.7 2803.6,1739.6 2807.8,1739.6 2807.8,1741.4 2812.7,1741.4 2812.7,1744.8 2816.9,1744.8 2816.9,1731.3 2821.8,1731.3 2821.8,1739.5 2826.0,1739.5 2826.0,1720.2 2830.9,1720.2 2830.9,1726.2 2835.1,1726.2 2835.1,1723.6 2840.0,1723.6 2840.0,1726.2 2844.2,1726.2 2844.2,1734.0 2849.1,1734.0 2849.1,1731.5 2853.3,1731.5 2853.3,1728.4 2858.2,1728.4 2858.2,1743.5 2862.5,1743.5 2862.5,1732.4 2867.4,1732.4 2867.4,1739.6 2871.6,1739.6 2871.6,1726.4 2876.5,1726.4 2876.5,1716.3 2880.7,1716.3 2880.7,1717.1 2885.6,1717.1 2885.6,1713.2 2889.8,1713.2 2889.8,1705.2 2894.7,1705.2 2894.7,1705.6 2898.9,1705.6 2898.9,1696.3 2903.8,1696.3 2903.8,1701.8 2908.0,1701.8 2908.0,1706.1 2912.9,1706.1 2912.9,1700.0 2917.1,1700.0 2917.1,1703.8 2922.0,1703.8 2922.0,1707.1 2926.3,1707.1 2926.3,1711.7 2931.2,1711.7 2931.2,1715.0 2935.4,1715.0 2935.4,1717.5 2940.3,1717.5 2940.3,1713.3 2944.5,1713.3 2944.5,1704.4 2949.4,1704.4 2949.4,1706.4 2953.6,1706.4 2953.6,1699.2 2958.5,1699.2 2958.5,1700.6 2962.7,1700.6 2962.7,1699.1 2967.6,1699.1 2967.6,1692.7 2971.8,1692.7 2971.8,1691.5 2976.7,1691.5 2976.7,1705.1 2980.9,1705.1 2980.9,1695.8 2985.8,1695.8 2985.8,1706.0 2990.1,1706.0 2990.1,1703.6 2995.0,1703.6 2995.0,1701.4 2999.2,1701.4 2999.2,1702.4 3004.1,1702.4 3004.1,1714.1 3008.3,1714.1 3008.3,1666.1 3013.2,1666.1 3013.2,1722.0 3017.4,1722.0 3017.4,1718.7 3022.3,1718.7 3022.3,1714.0 3026.5,1714.0 3026.5,1708.8 3031.4,1708.8 3031.4,1717.6 3035.6,1717.6 3035.6,1711.4 3040.5,1711.4 3040.5,1722.5 3044.7,1722.5 3044.7,1719.6 3049.6,1719.6 3049.6,1726.5 3053.9,1726.5 3053.9,1679.0 3058.8,1679.0 3058.8,1738.3 3063.0,1738.3 3063.0,1677.3 3067.9,1677.3 3067.9,1738.3 3072.1,1738.3 3072.1,1735.8 3077.0,1735.8 3077.0,1728.0 3081.2,1728.0 3081.2,1722.2 3086.1,1722.2 3086.1,1727.2 3090.3,1727.2 3090.3,1714.6 3095.2,1714.6 3095.2,1719.6 3099.4,1719.6 3099.4,1719.3 3104.3,1719.3 3104.3,1718.2 3108.5,1718.2 3108.5,1716.7 3113.4,1716.7 3113.4,1715.2 3117.7,1715.2 3117.7,1719.6 3122.6,1719.6 3122.6,1729.2 3126.8,1729.2 3126.8,1703.3 3131.7,1703.3 3131.7,1701.6 3135.9,1701.6 3135.9,1616.5 3140.8,1616.5 3140.8,1700.3 3145.0,1700.3 3145.0,1696.7 3149.9,1696.7 3149.9,1688.8 3154.1,1688.8 3154.1,1684.8 3159.0,1684.8 3159.0,1711.0 3163.2,1711.0 3163.2,1704.1 3168.1,1704.1 3168.1,1723.7 3172.3,1723.7 3172.3,1717.7 3177.2,1717.7 3177.2,1718.2 3181.5,1718.2 3181.5,1722.6 3186.4,1722.6 3186.4,1733.5 3190.6,1733.5 3190.6,1719.3 3195.5,1719.3 3195.5,1734.1 3199.7,1734.1 3199.7,1711.5 3204.6,1711.5 3204.6,1713.6 3208.8,1713.6 3208.8,1720.6 3213.7,1720.6 3213.7,1719.4 3217.9,1719.4 3217.9,1706.3 3222.8,1706.3 3222.8,1718.0 3227.0,1718.0 3227.0,1714.9 3231.9,1714.9 3231.9,1727.8 3236.1,1727.8 3236.1,1719.5 3241.0,1719.5 3241.0,1716.3 3245.3,1716.3 3245.3,1715.6 3250.2,1715.6 3250.2,1729.8 3254.4,1729.8 3254.4,1699.0 3259.3,1699.0 3259.3,1730.7 3263.5,1730.7 3263.5,1724.5 3268.4,1724.5 3268.4,1737.1 3272.6,1737.1 3272.6,1679.9 3277.5,1679.9 3277.5,1738.1 3281.7,1738.1 3281.7,1736.8 3286.6,1736.8 3286.6,1718.2 3290.8,1718.2 3290.8,1719.4 3295.7,1719.4 3295.7,1722.5 3299.9,1722.5 3299.9,1721.0 3304.8,1721.0 3304.8,1722.4 3309.1,1722.4 3309.1,1658.7 3314.0,1658.7 3314.0,1714.5 3318.2,1714.5 3318.2,1725.2 3323.1,1725.2 3323.1,1728.2 3327.3,1728.2 3327.3,1667.2 3332.2,1667.2 3332.2,1719.8 3336.4,1719.8 3336.4,1703.0 3341.3,1703.0 3341.3,1725.3 3345.5,1725.3 3345.5,1720.9 3350.4,1720.9 3350.4,1722.6 3354.6,1722.6 3354.6,1708.4 3359.5,1708.4 3359.5,1721.5 3363.7,1721.5 3363.7,1719.8 3368.6,1719.8 3368.6,1740.3 3372.9,1740.3 3372.9,1728.1 3377.8,1728.1 3377.8,1733.1 3382.0,1733.1 3382.0,1733.9 3386.9,1733.9 3386.9,1739.7 3391.1,1739.7 3391.1,1729.6 3396.0,1729.6 3396.0,1733.4 3400.2,1733.4 3400.2,1716.2 3405.1,1716.2 3405.1,1716.1 3409.3,1716.1 3409.3,1711.3 3414.2,1711.3 3414.2,1718.8 3418.4,1718.8 3418.4,1703.8 3423.3,1703.8 3423.3,1706.1 3427.5,1706.1 3427.5,1700.5 3432.4,1700.5 3432.4,1708.4 3436.7,1708.4 3436.7,1706.5 3441.6,1706.5 3441.6,1713.2 3445.8,1713.2 3445.8,1702.3 3450.7,1702.3 3450.7,1720.5 3454.9,1720.5 3454.9,1722.2 3459.8,1722.2 3459.8,1732.5 3464.0,1732.5 3464.0,1721.8 3468.9,1721.8 3468.9,1722.4 3473.1,1722.4 3473.1,1650.0 3478.0,1650.0 3478.0,1707.8 3482.2,1707.8 3482.2,1706.9 3487.1,1706.9 3487.1,1708.8 3491.3,1708.8 3491.3,1703.6 3496.2,1703.6 3496.2,1712.4 3500.5,1712.4 3500.5,1708.7 3505.4,1708.7 3505.4,1715.0 3509.6,1715.0 3509.6,2150.6 3513.0,2150.6 3509.7,2150.6 3509.7,2159.3 3506.4,2159.3 3506.4,2095.6 3503.1,2095.6 3503.1,2162.8 3499.9,2162.8 3499.9,2163.4 3496.6,2163.4 3496.6,2162.3 3493.3,2162.3 3493.3,2089.8 3490.0,2089.8 3490.0,2193.1 3486.7,2193.1 3486.7,2121.3 3483.4,2121.3 3483.4,2155.5 3480.1,2155.5 3480.1,2150.8 3476.9,2150.8 3476.9,2173.6 3473.6,2173.6 3473.6,2186.3 3470.3,2186.3 3470.3,2198.0 3467.0,2198.0 3467.0,2192.9 3463.7,2192.9 3463.7,2299.0 3460.4,2299.0 3460.4,2167.2 3457.1,2167.2 3457.1,2153.2 3453.8,2153.2 3453.8,2185.5 3450.6,2185.5 3450.6,2181.1 3447.3,2181.1 3447.3,2154.5 3444.0,2154.5 3444.0,2183.9 3440.7,2183.9 3440.7,2171.3 3437.4,2171.3 3437.4,2168.4 3434.1,2168.4 3434.1,2259.5 3430.8,2259.5 3430.8,2265.2 3427.6,2265.2 3427.6,2246.1 3424.3,2246.1 3424.3,2147.4 3421.0,2147.4 3421.0,2168.4 3417.7,2168.4 3417.7,2171.4 3414.4,2171.4 3414.4,2186.4 3411.1,2186.4 3411.1,2176.3 3407.8,2176.3 3407.8,2150.3 3404.6,2150.3 3404.6,2156.1 3401.3,2156.1 3401.3,2175.2 3398.0,2175.2 3398.0,2180.5 3394.7,2180.5 3394.7,2182.2 3391.4,2182.2 3391.4,2180.3 3388.1,2180.3 3388.1,2186.7 3384.8,2186.7 3384.8,2177.3 3381.6,2177.3 3381.6,2175.1 3378.3,2175.1 3378.3,2134.9 3375.0,2134.9 3375.0,2176.6 3371.7,2176.6 3371.7,2190.5 3368.4,2190.5 3368.4,2180.0 3365.1,2180.0 3365.1,2195.1 3361.8,2195.1 3361.8,2213.7 3358.5,2213.7 3358.5,2202.2 3355.3,2202.2 3355.3,2183.7 3352.0,2183.7 3352.0,2192.4 3348.7,2192.4 3348.7,2190.4 3345.4,2190.4 3345.4,2176.9 3342.1,2176.9 3342.1,2196.2 3338.8,2196.2 3338.8,2188.2 3335.5,2188.2 3335.5,2197.0 3332.3,2197.0 3332.3,2185.7 3329.0,2185.7 3329.0,2193.3 3325.7,2193.3 3325.7,2165.5 3322.4,2165.5 3322.4,2268.7 3319.1,2268.7 3319.1,2159.4 3315.8,2159.4 3315.8,2101.7 3312.5,2101.7 3312.5,2078.9 3309.3,2078.9 3309.3,2204.9 3306.0,2204.9 3306.0,2181.7 3302.7,2181.7 3302.7,2179.5 3299.4,2179.5 3299.4,2177.3 3296.1,2177.3 3296.1,2173.4 3292.8,2173.4 3292.8,2169.7 3289.5,2169.7 3289.5,2181.0 3286.3,2181.0 3286.3,2114.4 3283.0,2114.4 3283.0,2183.8 3279.7,2183.8 3279.7,2167.8 3276.4,2167.8 3276.4,2178.6 3273.1,2178.6 3273.1,2153.4 3269.8,2153.4 3269.8,2147.5 3266.5,2147.5 3266.5,2130.6 3263.2,2130.6 3263.2,2140.7 3260.0,2140.7 3260.0,2163.3 3256.7,2163.3 3256.7,2172.0 3253.4,2172.0 3253.4,2299.2 3250.1,2299.2 3250.1,2169.3 3246.8,2169.3 3246.8,2165.1 3243.5,2165.1 3243.5,2169.4 3240.2,2169.4 3240.2,2174.2 3237.0,2174.2 3237.0,2266.9 3233.7,2266.9 3233.7,2176.3 3230.4,2176.3 3230.4,2173.6 3227.1,2173.6 3227.1,2188.9 3223.8,2188.9 3223.8,2167.9 3220.5,2167.9 3220.5,2177.3 3217.2,2177.3 3217.2,2195.4 3214.0,2195.4 3214.0,2191.2 3210.7,2191.2 3210.7,2177.1 3207.4,2177.1 3207.4,2205.3 3204.1,2205.3 3204.1,2193.6 3200.8,2193.6 3200.8,2179.3 3197.5,2179.3 3197.5,2182.1 3194.2,2182.1 3194.2,2173.2 3191.0,2173.2 3191.0,2174.3 3187.7,2174.3 3187.7,2149.6 3184.4,2149.6 3184.4,2146.0 3181.1,2146.0 3181.1,2126.4 3177.8,2126.4 3177.8,2140.2 3174.5,2140.2 3174.5,2159.8 3171.2,2159.8 3171.2,2178.7 3167.9,2178.7 3167.9,2121.7 3164.7,2121.7 3164.7,2153.1 3161.4,2153.1 3161.4,2151.9 3158.1,2151.9 3158.1,2140.7 3154.8,2140.7 3154.8,2175.0 3151.5,2175.0 3151.5,2189.5 3148.2,2189.5 3148.2,2200.4 3144.9,2200.4 3144.9,2161.8 3141.7,2161.8 3141.7,2158.1 3138.4,2158.1 3138.4,2167.1 3135.1,2167.1 3135.1,2184.1 3131.8,2184.1 3131.8,2135.6 3128.5,2135.6 3128.5,2135.3 3125.2,2135.3 3125.2,2156.3 3121.9,2156.3 3121.9,2161.5 3118.7,2161.5 3118.7,2147.7 3115.4,2147.7 3115.4,2116.4 3112.1,2116.4 3112.1,2133.9 3108.8,2133.9 3108.8,2157.0 3105.5,2157.0 3105.5,2178.4 3102.2,2178.4 3102.2,2214.4 3098.9,2214.4 3098.9,2161.3 3095.7,2161.3 3095.7,2146.6 3092.4,2146.6 3092.4,2158.6 3089.1,2158.6 3089.1,2165.7 3085.8,2165.7 3085.8,2158.9 3082.5,2158.9 3082.5,2149.3 3079.2,2149.3 3079.2,2157.8 3075.9,2157.8 3075.9,2165.0 3072.6,2165.0 3072.6,2189.3 3069.4,2189.3 3069.4,2088.8 3066.1,2088.8 3066.1,2100.3 3062.8,2100.3 3062.8,2140.1 3059.5,2140.1 3059.5,2220.1 3056.2,2220.1 3056.2,2192.4 3052.9,2192.4 3052.9,2143.1 3049.6,2143.1 3049.6,2138.1 3046.4,2138.1 3046.4,2162.4 3043.1,2162.4 3043.1,2080.4 3039.8,2080.4 3039.8,2084.0 3036.5,2084.0 3036.5,2128.7 3033.2,2128.7 3033.2,2142.3 3029.9,2142.3 3029.9,2186.6 3026.6,2186.6 3026.6,2169.8 3023.4,2169.8 3023.4,2147.8 3020.1,2147.8 3020.1,2154.8 3016.8,2154.8 3016.8,2177.1 3013.5,2177.1 3013.5,2262.6 3010.2,2262.6 3010.2,2175.0 3006.9,2175.0 3006.9,2116.3 3003.6,2116.3 3003.6,2099.0 3000.4,2099.0 3000.4,2196.1 2997.1,2196.1 2997.1,2186.4 2993.8,2186.4 2993.8,2187.2 2990.5,2187.2 2990.5,2173.1 2987.2,2173.1 2987.2,2184.4 2983.9,2184.4 2983.9,2101.0 2980.6,2101.0 2980.6,2178.0 2977.3,2178.0 2977.3,2207.0 2974.1,2207.0 2974.1,2317.5 2970.8,2317.5 2970.8,2165.1 2967.5,2165.1 2967.5,2156.2 2964.2,2156.2 2964.2,2161.2 2960.9,2161.2 2960.9,2169.5 2957.6,2169.5 2957.6,2174.4 2954.3,2174.4 2954.3,2174.3 2951.1,2174.3 2951.1,2178.3 2947.8,2178.3 2947.8,2161.1 2944.5,2161.1 2944.5,2166.3 2941.2,2166.3 2941.2,2233.3 2937.9,2233.3 2937.9,2196.7 2934.6,2196.7 2934.6,2234.1 2931.3,2234.1 2931.3,2240.6 2928.1,2240.6 2928.1,2239.3 2924.8,2239.3 2924.8,2215.0 2921.5,2215.0 2921.5,2201.7 2918.2,2201.7 2918.2,2213.0 2914.9,2213.0 2914.9,2175.2 2911.6,2175.2 2911.6,2188.4 2908.3,2188.4 2908.3,2200.9 2905.1,2200.9 2905.1,2205.9 2901.8,2205.9 2901.8,2218.0 2898.5,2218.0 2898.5,2203.3 2895.2,2203.3 2895.2,2191.5 2891.9,2191.5 2891.9,2106.3 2888.6,2106.3 2888.6,2131.9 2885.3,2131.9 2885.3,2187.8 2882.0,2187.8 2882.0,2110.8 2878.8,2110.8 2878.8,2263.7 2875.5,2263.7 2875.5,2193.2 2872.2,2193.2 2872.2,2304.2 2868.9,2304.2 2868.9,2077.9 2865.6,2077.9 2865.6,2084.7 2862.3,2084.7 2862.3,2170.3 2859.0,2170.3 2859.0,2139.0 2855.8,2139.0 2855.8,2151.0 2852.5,2151.0 2852.5,2146.7 2849.2,2146.7 2849.2,2137.5 2845.9,2137.5 2845.9,2144.1 2842.6,2144.1 2842.6,2113.2 2839.3,2113.2 2839.3,2146.0 2836.0,2146.0 2836.0,2188.8 2832.8,2188.8 2832.8,2222.4 2829.5,2222.4 2829.5,2180.0 2826.2,2180.0 2826.2,2094.5 2822.9,2094.5 2822.9,2120.1 2819.6,2120.1 2819.6,2298.9 2816.3,2298.9 2816.3,2122.9 2813.0,2122.9 2813.0,2149.2 2809.8,2149.2 2809.8,2175.4 2806.5,2175.4 2806.5,2223.4 2803.2,2223.4 2803.2,2106.8 2799.9,2106.8 2799.9,2126.2 2796.6,2126.2 2796.6,2223.8 2793.3,2223.8 2793.3,2221.6 2790.0,2221.6 2790.0,2176.4 2786.7,2176.4 2786.7,2189.5 2783.5,2189.5 2783.5,2194.6 2780.2,2194.6 2780.2,2203.3 2776.9,2203.3 2776.9,2109.3 2773.6,2109.3 2773.6,2083.6 2770.3,2083.6 2770.3,2277.5 2767.0,2277.5 2767.0,2259.3 2763.7,2259.3 2763.7,2183.6 2760.5,2183.6 2760.5,2233.6 2757.2,2233.6 2757.2,2205.2 2753.9,2205.2 2753.9,2178.9 2750.6,2178.9 2750.6,2172.7 2747.3,2172.7 2747.3,2311.7 2744.0,2311.7 2744.0,2163.1 2740.7,2163.1 2740.7,2090.0 2737.5,2090.0 2737.5,2142.5 2734.2,2142.5 2734.2,2172.4 2730.9,2172.4 2730.9,2199.7 2727.6,2199.7 2727.6,2154.0 2724.3,2154.0 2724.3,2231.7 2721.0,2231.7 2721.0,2235.4 2717.7,2235.4 2717.7,2194.6 2714.5,2194.6 2714.5,2200.5 2711.2,2200.5 2711.2,2114.1 2707.9,2114.1 2707.9,2175.4 2704.6,2175.4 2704.6,2179.2 2701.3,2179.2 2701.3,2179.5 2698.0,2179.5 2698.0,2178.2 2694.7,2178.2 2694.7,2222.5 2691.4,2222.5 2691.4,2199.5 2688.2,2199.5 2688.2,2156.4 2684.9,2156.4 2684.9,2154.2 2681.6,2154.2 2681.6,2162.2 2678.3,2162.2 2678.3,2181.7 2675.0,2181.7 2675.0,2226.6 2671.7,2226.6 2671.7,2239.6 2668.4,2239.6 2668.4,2176.8 2665.2,2176.8 2665.2,2184.9 2661.9,2184.9 2661.9,2172.5 2658.6,2172.5 2658.6,2286.9 2655.3,2286.9 2655.3,2282.9 2652.0,2282.9 2652.0,2167.3 2648.7,2167.3 2648.7,2219.8 2645.4,2219.8 2645.4,2179.9 2642.2,2179.9 2642.2,2155.1 2638.9,2155.1 2638.9,2209.1 2635.6,2209.1 2635.6,2190.2 2632.3,2190.2 2632.3,2196.9 2629.0,2196.9 2629.0,2197.2 2625.7,2197.2 2625.7,2211.5 2622.4,2211.5 2622.4,2278.2 2619.1,2278.2 2619.1,2176.8 2615.9,2176.8 2615.9,2182.6 2612.6,2182.6 2612.6,2199.6 2609.3,2199.6 2609.3,2161.6 2606.0,2161.6 2606.0,2159.3 2602.7,2159.3 2602.7,2183.0 2599.4,2183.0 2599.4,2176.4 2596.1,2176.4 2596.1,2184.1 2592.9,2184.1 2592.9,2154.4 2589.6,2154.4 2589.6,2196.2 2586.3,2196.2 2586.3,2167.2 2583.0,2167.2 2583.0,2108.4 2579.7,2108.4 2579.7,2148.3 2576.4,2148.3 2576.4,2146.8 2573.1,2146.8 2573.1,2167.6 2569.9,2167.6 2569.9,2183.7 2566.6,2183.7 2566.6,2163.9 2563.3,2163.9 2563.3,2103.0 2560.0,2103.0 2560.0,2220.9 2556.7,2220.9 2556.7,2132.3 2553.4,2132.3 2553.4,2086.7 2550.1,2086.7 2550.1,2160.0 2546.9,2160.0 2546.9,2168.6 2543.6,2168.6 2543.6,2153.2 2540.3,2153.2 2540.3,2154.3 2537.0,2154.3 2537.0,2186.3 2533.7,2186.3 2533.7,2192.3 2530.4,2192.3 2530.4,2234.1 2527.1,2234.1 2527.1,2227.0 2523.8,2227.0 2523.8,2166.5 2520.6,2166.5 2520.6,2202.1 2517.3,2202.1 2517.3,2214.7 2514.0,2214.7 2514.0,2191.8 2510.7,2191.8 2510.7,2179.6 2507.4,2179.6 2507.4,2157.0 2504.1,2157.0 2504.1,2170.0 2500.8,2170.0 2500.8,2192.4 2497.6,2192.4 2497.6,2219.4 2494.3,2219.4 2494.3,2218.4 2491.0,2218.4 2491.0,2222.4 2487.7,2222.4 2487.7,2192.4 2484.4,2192.4 2484.4,2279.2 2481.1,2279.2 2481.1,2200.5 2477.8,2200.5 2477.8,2085.1 2474.6,2085.1 2474.6,2230.8 2471.3,2230.8 2471.3,2197.6 2468.0,2197.6 2468.0,2065.5 2464.7,2065.5 2464.7,2079.4 2461.4,2079.4 2461.4,2149.3 2458.1,2149.3 2458.1,2153.7 2454.8,2153.7 2454.8,2182.3 2451.6,2182.3 2451.6,2193.4 2448.3,2193.4 2448.3,2188.3 2445.0,2188.3 2445.0,2183.3 2441.7,2183.3 2441.7,2072.9 2438.4,2072.9 2438.4,2101.4 2435.1,2101.4 2435.1,2172.9 2431.8,2172.9 2431.8,2164.6 2428.5,2164.6 2428.5,2222.2 2425.3,2222.2 2425.3,2242.7 2422.0,2242.7 2422.0,2206.5 2418.7,2206.5 2418.7,2190.8 2415.4,2190.8 2415.4,2168.5 2412.1,2168.5 2412.1,2208.6 2408.8,2208.6 2408.8,2238.3 2405.5,2238.3 2405.5,2234.2 2402.3,2234.2 2402.3,2187.1 2399.0,2187.1 2399.0,2200.2 2395.7,2200.2 2395.7,2207.7 2392.4,2207.7 2392.4,2204.0 2389.1,2204.0 2389.1,2201.0 2385.8,2201.0 2385.8,2179.1 2382.5,2179.1 2382.5,2172.2 2379.3,2172.2 2379.3,2190.5 2376.0,2190.5 2376.0,2141.9 2372.7,2141.9 2372.7,2162.9 2369.4,2162.9 2369.4,2182.9 2366.1,2182.9 2366.1,2171.9 2362.8,2171.9 2362.8,2162.0 2359.5,2162.0 2359.5,2187.6 2356.3,2187.6 2356.3,2177.9 2353.0,2177.9 2353.0,2172.5 2349.7,2172.5 2349.7,2225.1 2346.4,2225.1 2346.4,2263.6 2343.1,2263.6 2343.1,2296.8 2339.8,2296.8 2339.8,2086.7 2336.5,2086.7 2336.5,2082.5 2333.2,2082.5 2333.2,2170.8 2330.0,2170.8 2330.0,2166.6 2326.7,2166.6 2326.7,2078.5 2323.4,2078.5 2323.4,2088.9 2320.1,2088.9 2320.1,2220.7 2316.8,2220.7 2316.8,2097.2 2313.5,2097.2 2313.5,2139.9 2310.2,2139.9 2310.2,2136.7 2307.0,2136.7 2307.0,2197.7 2303.7,2197.7 2303.7,2126.7 2300.4,2126.7 2300.4,2184.2 2297.1,2184.2 2297.1,2199.3 2293.8,2199.3 2293.8,2176.1 2290.5,2176.1 2290.5,2195.9 2287.2,2195.9 2287.2,2189.6 2284.0,2189.6 2284.0,2182.9 2280.7,2182.9 2280.7,2079.3 2277.4,2079.3 2277.4,2150.8 2274.1,2150.8 2274.1,2130.9 2270.8,2130.9 2270.8,2144.2 2267.5,2144.2 2267.5,2155.9 2264.2,2155.9 2264.2,2176.6 2261.0,2176.6 2261.0,2161.7 2257.7,2161.7 2257.7,2142.8 2254.4,2142.8 2254.4,2112.3 2251.1,2112.3 2251.1,2085.8 2247.8,2085.8 2247.8,2124.7 2244.5,2124.7 2244.5,2203.0 2241.2,2203.0 2241.2,2193.9 2237.9,2193.9 2237.9,2209.3 2234.7,2209.3 2234.7,2180.6 2231.4,2180.6 2231.4,2186.8 2228.1,2186.8 2228.1,2149.4 2224.8,2149.4 2224.8,2151.3 2221.5,2151.3 2221.5,2157.5 2218.2,2157.5 2218.2,2127.7 2214.9,2127.7 2214.9,2173.5 2211.7,2173.5 2211.7,2159.8 2208.4,2159.8 2208.4,2147.8 2205.1,2147.8 2205.1,2234.6 2201.8,2234.6 2201.8,2187.5 2198.5,2187.5 2198.5,2173.3 2195.2,2173.3 2195.2,2211.8 2191.9,2211.8 2191.9,2163.1 2188.7,2163.1 2188.7,2224.4 2185.4,2224.4 2185.4,2093.5 2182.1,2093.5 2182.1,2172.5 2178.8,2172.5 2178.8,2175.0 2175.5,2175.0 2175.5,2142.5 2172.2,2142.5 2172.2,2178.5 2168.9,2178.5 2168.9,2169.1 2165.7,2169.1 2165.7,2175.3 2162.4,2175.3 2162.4,2164.7 2159.1,2164.7 2159.1,2189.7 2155.8,2189.7 2155.8,2174.1 2152.5,2174.1 2152.5,2188.1 2149.2,2188.1 2149.2,2186.6 2145.9,2186.6 2145.9,2183.8 2142.6,2183.8 2142.6,2170.6 2139.4,2170.6 2139.4,2157.9 2136.1,2157.9 2136.1,2124.6 2132.8,2124.6 2132.8,2186.3 2129.5,2186.3 2129.5,2148.4 2126.2,2148.4 2126.2,2191.3 2122.9,2191.3 2122.9,2172.8 2119.6,2172.8 2119.6,2126.3 2116.4,2126.3 2116.4,2094.0 2113.1,2094.0 2113.1,2202.2 2109.8,2202.2 2109.8,2199.5 2106.5,2199.5 2106.5,2182.5 2103.2,2182.5 2103.2,2186.1 2099.9,2186.1 2099.9,2175.7 2096.6,2175.7 2096.6,2182.1 2093.4,2182.1 2093.4,2160.5 2090.1,2160.5 2090.1,2179.7 2086.8,2179.7 2086.8,2183.4 2083.5,2183.4 2083.5,2204.5 2080.2,2204.5 2080.2,2175.5 2076.9,2175.5 2076.9,2141.9 2073.6,2141.9 2073.6,2120.8 2070.4,2120.8 2070.4,2140.6 2067.1,2140.6 2067.1,2159.3 2063.8,2159.3 2063.8,2179.5 2060.5,2179.5 2060.5,2299.1 2057.2,2299.1 2057.2,2157.7 2053.9,2157.7 2053.9,2182.5 2050.6,2182.5 2050.6,2155.8 2047.3,2155.8 2047.3,2144.8 2044.1,2144.8 2044.1,2152.9 2040.8,2152.9 2040.8,2151.7 2037.5,2151.7 2037.5,2167.1 2034.2,2167.1 2034.2,2143.6 2030.9,2143.6 2030.9,2168.0 2027.6,2168.0 2027.6,2195.4 2024.3,2195.4 2024.3,2210.4 2021.1,2210.4 2021.1,2169.9 2017.8,2169.9 2017.8,2245.5 2014.5,2245.5 2014.5,2184.0 2011.2,2184.0 2011.2,2078.0 2007.9,2078.0 2007.9,2094.8 2004.6,2094.8 2004.6,2079.2 2001.3,2079.2 2001.3,2138.1 1998.1,2138.1 1998.1,2166.0 1994.8,2166.0 1994.8,2162.2 1991.5,2162.2 1991.5,2152.0 1988.2,2152.0 1988.2,2153.1 1984.9,2153.1 1984.9,2157.3 1981.6,2157.3 1981.6,2132.4 1978.3,2132.4 1978.3,2150.5 1975.1,2150.5 1975.1,2164.7 1971.8,2164.7 1971.8,2178.0 1968.5,2178.0 1968.5,2172.3 1965.2,2172.3 1965.2,2223.3 1961.9,2223.3 1961.9,2212.4 1958.6,2212.4 1958.6,2175.7 1955.3,2175.7 1955.3,2188.0 1952.0,2188.0 1952.0,2151.5 1948.8,2151.5 1948.8,2152.9 1945.5,2152.9 1945.5,2144.3 1942.2,2144.3 1942.2,2172.3 1938.9,2172.3 1938.9,2211.9 1935.6,2211.9 1935.6,2196.1 1932.3,2196.1 1932.3,2167.0 1929.0,2167.0 1929.0,2168.2 1925.8,2168.2 1925.8,2117.5 1922.5,2117.5 1922.5,2143.9 1919.2,2143.9 1919.2,2159.0 1915.9,2159.0 1915.9,2120.1 1912.6,2120.1 1912.6,2106.0 1909.3,2106.0 1909.3,2198.8 1906.0,2198.8 1906.0,2198.8 1902.8,2198.8 1902.8,2137.5 1899.5,2137.5 1899.5,2136.2 1896.2,2136.2 1896.2,2120.5 1892.9,2120.5 1892.9,2141.3 1889.6,2141.3 1889.6,2162.8 1886.3,2162.8 1886.3,2314.2 1883.0,2314.2 1883.0,2097.8 1879.8,2097.8 1879.8,2178.0 1876.5,2178.0 1876.5,2202.4 1873.2,2202.4 1873.2,2196.9 1869.9,2196.9 1869.9,2190.4 1866.6,2190.4 1866.6,2205.4 1863.3,2205.4 1863.3,2201.1 1860.0,2201.1 1860.0,2194.5 1856.7,2194.5 1856.7,2197.1 1853.5,2197.1 1853.5,2184.0 1850.2,2184.0 1850.2,2086.7 1846.9,2086.7 1846.9,2095.0 1843.6,2095.0 1843.6,2177.3 1840.3,2177.3 1840.3,2182.2 1837.0,2182.2 1837.0,2229.8 1833.7,2229.8 1833.7,2213.2 1830.5,2213.2 1830.5,2196.4 1827.2,2196.4 1827.2,2193.8 1823.9,2193.8 1823.9,2217.9 1820.6,2217.9 1820.6,2212.3 1817.3,2212.3 1817.3,2200.7 1814.0,2200.7 1814.0,2201.5 1810.7,2201.5 1810.7,2173.9 1807.5,2173.9 1807.5,2162.1 1804.2,2162.1 1804.2,2180.9 1800.9,2180.9 1800.9,2172.8 1797.6,2172.8 1797.6,2192.7 1794.3,2192.7 1794.3,2147.4 1791.0,2147.4 1791.0,2138.1 1787.7,2138.1 1787.7,2129.8 1784.5,2129.8 1784.5,2169.9 1781.2,2169.9 1781.2,2159.3 1777.9,2159.3 1777.9,2223.2 1774.6,2223.2 1774.6,2197.4 1771.3,2197.4 1771.3,2198.2 1768.0,2198.2 1768.0,2211.9 1764.7,2211.9 1764.7,2163.0 1761.4,2163.0 1761.4,2187.2 1758.2,2187.2 1758.2,2190.0 1754.9,2190.0 1754.9,2189.2 1751.6,2189.2 1751.6,2162.6 1748.3,2162.6 1748.3,2175.1 1745.0,2175.1 1745.0,2183.0 1741.7,2183.0 1741.7,2170.0 1738.4,2170.0 1738.4,2152.6 1735.2,2152.6 1735.2,2064.2 1731.9,2064.2 1731.9,2090.8 1728.6,2090.8 1728.6,2156.7 1725.3,2156.7 1725.3,2155.3 1722.0,2155.3 1722.0,2170.1 1718.7,2170.1 1718.7,2168.4 1715.4,2168.4 1715.4,2155.1 1712.2,2155.1 1712.2,2168.4 1708.9,2168.4 1708.9,2148.3 1705.6,2148.3 1705.6,2148.4 1702.3,2148.4 1702.3,2240.0 1699.0,2240.0 1699.0,2256.3 1695.7,2256.3 1695.7,2184.2 1692.4,2184.2 1692.4,2193.7 1689.2,2193.7 1689.2,2181.1 1685.9,2181.1 1685.9,2182.6 1682.6,2182.6 1682.6,2184.1 1679.3,2184.1 1679.3,2243.7 1676.0,2243.7 1676.0,2229.9 1672.7,2229.9 1672.7,2219.1 1669.4,2219.1 1669.4,2199.9 1666.1,2199.9 1666.1,2142.9 1662.9,2142.9 1662.9,2154.6 1659.6,2154.6 1659.6,2175.1 1656.3,2175.1 1656.3,2305.2 1653.0,2305.2 1653.0,2201.2 1649.7,2201.2 1649.7,2195.2 1646.4,2195.2 1646.4,2177.7 1643.1,2177.7 1643.1,2150.9 1639.9,2150.9 1639.9,2158.9 1636.6,2158.9 1636.6,2130.5 1633.3,2130.5 1633.3,2100.7 1630.0,2100.7 1630.0,2104.8 1626.7,2104.8 1626.7,2176.3 1623.4,2176.3 1623.4,2177.2 1620.1,2177.2 1620.1,2271.2 1616.9,2271.2 1616.9,2228.7 1613.6,2228.7 1613.6,2137.6 1610.3,2137.6 1610.3,2134.0 1607.0,2134.0 1607.0,2153.9 1603.7,2153.9 1603.7,2146.9 1600.4,2146.9 1600.4,2160.3 1597.1,2160.3 1597.1,2143.8 1593.9,2143.8 1593.9,2130.7 1590.6,2130.7 1590.6,2144.4 1587.3,2144.4 1587.3,2203.6 1584.0,2203.6 1584.0,2187.8 1580.7,2187.8 1580.7,2192.0 1577.4,2192.0 1577.4,2156.8 1574.1,2156.8 1574.1,2134.8 1570.8,2134.8 1570.8,2149.7 1567.6,2149.7 1567.6,2142.9 1564.3,2142.9 1564.3,2165.8 1561.0,2165.8 1561.0,2086.6 1557.7,2086.6 1557.7,2117.6 1554.4,2117.6 1554.4,2317.5 1551.1,2317.5 1551.1,2317.5 1547.8,2317.5 1547.8,2157.6 1544.6,2157.6 1544.6,2205.5 1541.3,2205.5 1541.3,2163.4 1538.0,2163.4 1538.0,2258.6 1534.7,2258.6 1534.7,2247.0 1531.4,2247.0 1531.4,2178.1 1528.1,2178.1 1528.1,2179.6 1524.8,2179.6 1524.8,2273.6 1521.6,2273.6 1521.6,2277.0 1518.3,2277.0 1518.3,2184.1 1515.0,2184.1 1515.0,2172.2 1511.7,2172.2 1511.7,2189.7 1508.4,2189.7 1508.4,2195.1 1505.1,2195.1 1505.1,2229.1 1501.8,2229.1 1501.8,2198.6 1498.6,2198.6 1498.6,2200.2 1495.3,2200.2 1495.3,2192.2 1492.0,2192.2 1492.0,2172.3 1488.7,2172.3 1488.7,2147.7 1485.4,2147.7 1485.4,2085.8 1482.1,2085.8 1482.1,2105.9 1478.8,2105.9 1478.8,2186.9 1475.5,2186.9 1475.5,2218.8 1472.3,2218.8 1472.3,2152.1 1469.0,2152.1 1469.0,2153.9 1465.7,2153.9 1465.7,2269.2 1462.4,2269.2 1462.4,2123.5 1459.1,2123.5 1459.1,2121.6 1455.8,2121.6 1455.8,2214.3 1452.5,2214.3 1452.5,2192.0 1449.3,2192.0 1449.3,2162.2 1446.0,2162.2 1446.0,2148.9 1442.7,2148.9 1442.7,2183.9 1439.4,2183.9 1439.4,2237.2 1436.1,2237.2 1436.1,2191.5 1432.8,2191.5 1432.8,2183.1 1429.5,2183.1 1429.5,2171.3 1426.3,2171.3 1426.3,2168.2 1423.0,2168.2 1423.0,2179.8 1419.7,2179.8 1419.7,2180.7 1416.4,2180.7 1416.4,2168.9 1413.1,2168.9 1413.1,2196.3 1409.8,2196.3 1409.8,2190.1 1406.5,2190.1 1406.5,2184.0 1403.3,2184.0 1403.3,2081.1 1400.0,2081.1 1400.0,2147.2 1396.7,2147.2 1396.7,2315.7 1393.4,2315.7 1393.4,2144.5 1390.1,2144.5 1390.1,2096.7 1386.8,2096.7 1386.8,2100.1 1383.5,2100.1 1383.5,2146.6 1380.2,2146.6 1380.2,2172.5 1377.0,2172.5 1377.0,2091.7 1373.7,2091.7 1373.7,2257.8 1370.4,2257.8 1370.4,2273.4 1367.1,2273.4 1367.1,2191.4 1363.8,2191.4 1363.8,2192.2 1360.5,2192.2 1360.5,2185.8 1357.2,2185.8 1357.2,2075.8 1354.0,2075.8 1354.0,2138.6 1350.7,2138.6 1350.7,2317.5 1347.4,2317.5 1347.4,2133.1 1344.1,2133.1 1344.1,2271.1 1340.8,2271.1 1340.8,2279.8 1337.5,2279.8 1337.5,2197.5 1334.2,2197.5 1334.2,2172.8 1331.0,2172.8 1331.0,2172.7 1327.7,2172.7 1327.7,2172.7 1324.4,2172.7 1324.4,2191.7 1321.1,2191.7 1321.1,2169.1 1317.8,2169.1 1317.8,2166.8 1314.5,2166.8 1314.5,2179.1 1311.2,2179.1 1311.2,2194.2 1308.0,2194.2 1308.0,2198.6 1304.7,2198.6 1304.7,2185.8 1301.4,2185.8 1301.4,2103.9 1298.1,2103.9 1298.1,2104.4 1294.8,2104.4 1294.8,2212.7 1291.5,2212.7 1291.5,2196.7 1288.2,2196.7 1288.2,2139.5 1284.9,2139.5 1284.9,2164.5 1281.7,2164.5 1281.7,2267.8 1278.4,2267.8 1278.4,2177.0 1275.1,2177.0 1275.1,2172.5 1271.8,2172.5 1271.8,2156.3 1268.5,2156.3 1268.5,2149.0 1265.2,2149.0 1265.2,2158.4 1261.9,2158.4 1261.9,2186.8 1258.7,2186.8 1258.7,2188.0 1255.4,2188.0 1255.4,2174.6 1252.1,2174.6 1252.1,2194.0 1248.8,2194.0 1248.8,2197.3 1245.5,2197.3 1245.5,2185.5 1242.2,2185.5 1242.2,2094.1 1238.9,2094.1 1238.9,2085.8 1235.7,2085.8 1235.7,2148.7 1232.4,2148.7 1232.4,2159.2 1229.1,2159.2 1229.1,2130.2 1225.8,2130.2 1225.8,2166.8 1222.5,2166.8 1222.5,2132.0 1219.2,2132.0 1219.2,2154.3 1215.9,2154.3 1215.9,2169.4 1212.7,2169.4 1212.7,2165.4 1209.4,2165.4 1209.4,2161.7 1206.1,2161.7 1206.1,2131.5 1202.8,2131.5 1202.8,2147.7 1199.5,2147.7 1199.5,2148.7 1196.2,2148.7 1196.2,2157.8 1192.9,2157.8 1192.9,2314.6 1189.6,2314.6 1189.6,2156.6 1186.4,2156.6 1186.4,2076.1 1183.1,2076.1 1183.1,2096.2 1179.8,2096.2 1179.8,2154.0 1176.5,2154.0 1176.5,2146.4 1173.2,2146.4 1173.2,2134.4 1169.9,2134.4 1169.9,2125.7 1166.6,2125.7 1166.6,2162.7 1163.4,2162.7 1163.4,2208.8 1160.1,2208.8 1160.1,2215.0 1156.8,2215.0 1156.8,2212.6 1153.5,2212.6 1153.5,2170.5 1150.2,2170.5 1150.2,2160.5 1146.9,2160.5 1146.9,2152.6 1143.6,2152.6 1143.6,2160.7 1140.4,2160.7 1140.4,2170.6 1137.1,2170.6 1137.1,2182.9 1133.8,2182.9 1133.8,2155.2 1130.5,2155.2 1130.5,2142.2 1127.2,2142.2 1127.2,2128.3 1123.9,2128.3 1123.9,2140.8 1120.6,2140.8 1120.6,2138.5 1117.4,2138.5 1117.4,2192.4 1114.1,2192.4 1114.1,2156.4 1110.8,2156.4 1110.8,2171.4 1107.5,2171.4 1107.5,2260.9 1104.2,2260.9 1104.2,2231.1 1100.9,2231.1 1100.9,2131.5 1097.6,2131.5 1097.6,2117.8 1094.3,2117.8 1094.3,2133.4 1091.1,2133.4 1091.1,2216.6 1087.8,2216.6 1087.8,2165.5 1084.5,2165.5 1084.5,2168.9 1081.2,2168.9 1081.2,2153.4 1077.9,2153.4 1077.9,2154.2 1074.6,2154.2 1074.6,2164.2 1071.3,2164.2 1071.3,2160.9 1068.1,2160.9 1068.1,2157.0 1064.8,2157.0 1064.8,2144.9 1061.5,2144.9 1061.5,2170.9 1058.2,2170.9 1058.2,2160.8 1054.9,2160.8 1054.9,2183.9 1051.6,2183.9 1051.6,2116.6 1048.3,2116.6 1048.3,2116.5 1045.1,2116.5 1045.1,2126.7 1041.8,2126.7 1041.8,2162.7 1038.5,2162.7 1038.5,2199.7 1035.2,2199.7 1035.2,2162.9 1031.9,2162.9 1031.9,2142.3 1028.6,2142.3 1028.6,2140.8 1025.3,2140.8 1025.3,2169.4 1022.0,2169.4 1022.0,2190.7 1018.8,2190.7 1018.8,2197.7 1015.5,2197.7 1015.5,2186.0 1012.2,2186.0 1012.2,2200.1 1008.9,2200.1 1008.9,2185.2 1005.6,2185.2 1005.6,2207.5 1002.3,2207.5 1002.3,2156.7 999.0,2156.7 999.0,2159.2 995.8,2159.2 995.8,2169.5 992.5,2169.5 992.5,2158.1 989.2,2158.1 989.2,2081.3 985.9,2081.3 985.9,2249.6 982.6,2249.6 982.6,2250.6 979.3,2250.6 979.3,2177.8 976.0,2177.8 976.0,2185.0 972.8,2185.0 972.8,2159.8 969.5,2159.8 969.5,2139.5 966.2,2139.5 966.2,2183.4 962.9,2183.4 962.9,2180.5 959.6,2180.5 959.6,2121.8 956.3,2121.8 956.3,2172.2 953.0,2172.2 953.0,2116.4 949.8,2116.4 949.8,2178.1 946.5,2178.1 946.5,2310.4 943.2,2310.4 943.2,2147.0 939.9,2147.0 939.9,2207.5 936.6,2207.5 936.6,2141.2 933.3,2141.2 933.3,2185.9 930.0,2185.9 930.0,2253.7 926.7,2253.7 926.7,2190.8 923.5,2190.8 923.5,2210.1 920.2,2210.1 920.2,2205.8 916.9,2205.8 916.9,2171.5 913.6,2171.5 913.6,2198.6 910.3,2198.6 910.3,2204.5 907.0,2204.5 907.0,2191.8 903.7,2191.8 903.7,2180.2 900.5,2180.2 900.5,2196.3 897.2,2196.3 897.2,2168.8 893.9,2168.8 893.9,2173.9 890.6,2173.9 890.6,2105.4 887.3,2105.4 887.3,2082.5 884.0,2082.5 884.0,2179.8 880.7,2179.8 880.7,2219.5 877.5,2219.5 877.5,2219.6 874.2,2219.6 874.2,2138.6 870.9,2138.6 870.9,2076.9 867.6,2076.9 867.6,2161.7 864.3,2161.7 864.3,2141.6 861.0,2141.6 861.0,2149.8 857.7,2149.8 857.7,2159.3 854.5,2159.3 854.5,2166.3 851.2,2166.3 851.2,2180.2 847.9,2180.2 847.9,2168.2 844.6,2168.2 844.6,2220.9 841.3,2220.9 841.3,2213.8 838.0,2213.8 838.0,2164.3 834.7,2164.3 834.7,2137.5 831.4,2137.5 831.4,2150.1 828.2,2150.1 828.2,2160.2 824.9,2160.2 824.9,2177.9 821.6,2177.9 821.6,2198.3 818.3,2198.3 818.3,2202.4 815.0,2202.4 815.0,2221.1 811.7,2221.1 811.7,2207.1 808.4,2207.1 808.4,2149.8 805.2,2149.8 805.2,2189.7 801.9,2189.7 801.9,2175.7 798.6,2175.7 798.6,2118.4 795.3,2118.4 795.3,2148.1 792.0,2148.1 792.0,2217.3 788.7,2217.3 788.7,2219.4 785.4,2219.4 785.4,2212.7 782.2,2212.7 782.2,2188.9 778.9,2188.9 778.9,2188.9 775.6,2188.9 775.6,2157.9 772.3,2157.9 772.3,2151.5 769.0,2151.5 769.0,2317.5 765.7,2317.5 765.7,2179.6 762.4,2179.6 762.4,2180.6 759.2,2180.6 759.2,2085.0 755.9,2085.0 755.9,2091.2 752.6,2091.2 752.6,2180.1 749.3,2180.1 749.3,2242.5 746.0,2242.5 746.0,2152.3 742.7,2152.3 742.7,2151.0 739.4,2151.0 739.4,2163.5 736.1,2163.5 736.1,2168.1 732.9,2168.1 732.9,2209.1 729.6,2209.1 729.6,2084.1 726.3,2084.1 726.3,2082.5 723.0,2082.5 723.0,2151.9 719.7,2151.9 719.7,2165.8 716.4,2165.8 716.4,2199.1 713.1,2199.1 713.1,2096.1 709.9,2096.1 709.9,2108.6 706.6,2108.6 706.6,2140.2 703.3,2140.2 703.3,2192.8 700.0,2192.8 700.0,2158.0 696.7,2158.0 696.7,2151.6 693.4,2151.6 693.4,2157.4 690.1,2157.4 690.1,2179.8 686.9,2179.8 686.9,2174.3 683.6,2174.3 683.6,2179.1 680.3,2179.1 680.3,2141.8 677.0,2141.8 677.0,2155.6 673.7,2155.6 673.7,2162.7 670.4,2162.7 670.4,2187.2 667.1,2187.2 667.1,2188.0 663.9,2188.0 663.9,2077.2 660.6,2077.2 660.6,2179.6 657.3,2179.6 657.3,2163.1 654.0,2163.1 654.0,2152.3 650.7,2152.3 650.7,2172.7 647.4,2172.7 647.4,2211.9 644.1,2211.9 644.1,2204.0 640.8,2204.0 640.8,2183.8 637.6,2183.8 637.6,2178.6 634.3,2178.6 634.3,2157.7 631.0,2157.7 631.0,2168.7 627.7,2168.7 627.7,2107.5 624.4,2107.5 624.4,2117.1 621.1,2117.1 621.1,2174.5 617.8,2174.5 617.8,2167.8 614.6,2167.8 614.6,2158.9 611.3,2158.9 611.3,2234.2 608.0,2234.2 608.0,2247.3 604.7,2247.3 604.7,2171.3 601.4,2171.3 601.4,2252.4 598.1,2252.4 598.1,2182.3 594.8,2182.3 594.8,2125.7 591.6,2125.7 591.6,2122.8 588.3,2122.8 588.3,2202.7 585.0,2202.7 585.0,2176.3 581.7,2176.3 581.7,2184.2 578.4,2184.2 578.4,2295.3 575.1,2295.3 575.1,2222.5 571.8,2222.5 571.8,2201.2 568.6,2201.2 568.6,2231.6 565.3,2231.6 565.3,2190.6 562.0,2190.6 562.0,2205.8 558.7,2205.8 558.7,2208.0 555.4,2208.0 555.4,2093.6 552.1,2093.6 552.1,2092.4 548.8,2092.4 548.8,2198.8 545.5,2198.8 545.5,2139.9 542.3,2139.9 542.3,2146.0 539.0,2146.0 539.0,2158.3 535.7,2158.3 535.7,2220.1 532.4,2220.1 532.4,2216.6 529.1,2216.6 529.1,2164.9 525.8,2164.9 525.8,2162.0 522.5,2162.0 522.5,2155.1 519.3,2155.1 519.3,2170.1 516.0,2170.1 516.0,2150.3 512.7,2150.3 512.7,2188.0 509.4,2188.0 509.4,2226.7 506.1,2226.7 506.1,2210.8 502.8,2210.8 502.8,2164.7 499.5,2164.7 499.5,2096.9 496.3,2096.9 496.3,2108.4 493.0,2108.4 493.0,2192.8 489.7,2192.8 489.7,2193.9 486.4,2193.9 486.4,2177.5 483.1,2177.5 483.1,2174.6 479.8,2174.6 479.8,2183.2 476.5,2183.2 476.5,2234.8 473.3,2234.8 473.3,2166.9 470.0,2166.9 470.0,2079.8 466.7,2079.8 466.7,2077.3 463.4,2077.3 463.4,2174.3 460.1,2174.3 460.1,2179.2 456.8,2179.2 456.8,2193.3 453.5,2193.3 453.5,2173.8 450.2,2173.8 450.2,2190.8 447.0,2190.8 447.0,2174.1 443.7,2174.1 443.7,2183.1 440.4,2183.1 440.4,2086.7 437.1,2086.7 437.1,2152.3 433.8,2152.3 433.8,2164.7 430.5,2164.7 430.5,2156.7 427.2,2156.7 427.2,2169.5 424.0,2169.5 424.0,2180.7 420.7,2180.7 420.7,2184.3 417.4,2184.3 417.4,2173.0 414.1,2173.0 414.1,2193.9 410.8,2193.9 410.8,2188.5 407.5,2188.5 407.5,2193.4 404.2,2193.4 404.2,2190.5 401.0,2190.5 401.0,2235.3 397.7,2235.3 397.7,2189.0 394.4,2189.0 394.4,2094.6 391.1,2094.6 391.1,2178.4 387.8,2178.4 387.8,2172.1 384.5,2172.1 384.5,2070.4 381.2,2070.4 381.2,2144.1 378.0,2144.1 378.0,2142.1 374.7,2142.1 374.7,2143.0 371.4,2143.0 371.4,2153.1 368.1,2153.1 368.1,2094.5 364.8,2094.5 364.8,2148.5 361.5,2148.5 361.5,2174.6 358.2,2174.6 358.2,2176.5 354.9,2176.5 354.9,2143.5 351.7,2143.5 351.7,2165.4 348.4,2165.4 348.4,2240.5 345.1,2240.5 345.1,2265.8 341.8,2265.8 341.8,2150.5 338.5,2150.5 338.5,2175.0 335.2,2175.0 335.2,2193.9 331.9,2193.9 331.9,2178.5 328.7,2178.5 328.7,2177.6 325.4,2177.6 325.4,2190.4 322.1,2190.4 322.1,2196.2 318.8,2196.2 318.8,2199.9 315.5,2199.9 315.5,2177.9 312.2,2177.9 312.2,2190.6 308.9,2190.6 308.9,2176.6 305.7,2176.6 305.7,2161.2 302.4,2161.2 302.4,2203.7 299.1,2203.7 299.1,2091.3 295.8,2091.3 295.8,2154.9 292.5,2154.9 292.5,2162.2 289.2,2162.2 289.2,2158.4 285.9,2158.4 285.9,2135.4 282.7,2135.4 282.7,2098.8 279.4,2098.8 279.4,2190.0 276.1,2190.0 276.1,2181.0 272.8,2181.0 272.8,2163.3 269.5,2163.3 269.5,2172.6 266.2,2172.6 266.2,2315.7 262.9,2315.7 262.9,2164.6 259.6,2164.6 259.6,2147.2 256.4,2147.2 256.4,2162.1 253.1,2162.1 253.1,2165.8 249.8,2165.8 249.8,2182.7 246.5,2182.7 246.5,2143.3 243.2,2143.3 243.2,2144.5 239.9,2144.5 239.9,2159.9 236.6,2159.9 236.6,2158.4 233.4,2158.4 233.4,2166.6 230.1,2166.6 230.1,2178.2 226.8,2178.2 226.8,2158.5 223.5,2158.5 219.3,2158.5" fill="#ffff00"/>
<path d="M224.5,1712.6h3.61v62.2h-3.61zM233.6,1724.9h3.61v23.3h-3.61zM242.7,1724.9h3.61v12.1h-3.61zM251.8,1720.9h3.61v46.5h-3.61zM260.9,1713.6h3.61v62.4h-3.61zM270.0,1720.5h3.61v22.0h-3.61zM279.1,1713.9h3.61v21.5h-3.61zM288.3,1733.2h3.61v28.8h-3.61zM297.4,1712.3h3.61v24.8h-3.61zM306.5,1722.5h3.61v21.7h-3.61zM315.6,1714.9h3.61v40.1h-3.61zM324.7,1718.3h3.61v23.6h-3.61zM333.8,1727.0h3.61v21.0h-3.61zM343.0,1723.4h3.61v30.3h-3.61zM352.1,1722.9h3.61v12.5h-3.61zM361.2,1715.1h3.61v23.3h-3.61zM370.3,1733.1h3.61v20.8h-3.61zM379.4,1725.6h3.61v23.0h-3.61zM388.5,1727.8h3.61v13.5h-3.61zM397.6,1725.5h3.61v14.9h-3.61zM406.8,1721.6h3.61v40.6h-3.61zM415.9,1702.7h3.61v37.5h-3.61zM425.0,1691.6h3.61v17.9h-3.61zM434.1,1701.3h3.61v18.6h-3.61zM443.2,1718.6h3.61v36.8h-3.61zM452.3,1711.7h3.61v32.3h-3.61zM461.4,1730.2h3.61v33.1h-3.61zM470.6,1728.8h3.61v14.7h-3.61zM479.7,1733.2h3.61v20.3h-3.61zM488.8,1735.1h3.61v35.0h-3.61zM497.9,1730.9h3.61v45.1h-3.61zM507.0,1718.7h3.61v22.2h-3.61zM516.1,1716.1h3.61v31.4h-3.61zM525.2,1700.0h3.61v45.6h-3.61zM534.4,1699.3h3.61v14.8h-3.61zM543.5,1696.1h3.61v25.3h-3.61zM552.6,1697.2h3.61v43.5h-3.61zM561.7,1701.7h3.61v55.9h-3.61zM570.8,1710.9h3.61v23.4h-3.61zM579.9,1707.4h3.61v36.6h-3.61zM589.0,1705.1h3.61v23.4h-3.61zM598.2,1702.6h3.61v14.4h-3.61zM607.3,1694.6h3.61v53.3h-3.61zM616.4,1710.9h3.61v17.5h-3.61zM625.5,1713.4h3.61v11.5h-3.61zM634.6,1708.3h3.61v16.8h-3.61zM643.7,1719.3h3.61v37.2h-3.61zM652.8,1719.3h3.61v36.0h-3.61zM662.0,1718.0h3.61v39.5h-3.61zM671.1,1722.7h3.61v55.4h-3.61zM680.2,1723.2h3.61v40.1h-3.61zM689.3,1703.9h3.61v74.3h-3.61zM698.4,1709.9h3.61v38.4h-3.61zM707.5,1706.7h3.61v13.4h-3.61zM716.6,1710.9h3.61v45.3h-3.61zM725.8,1712.7h3.61v41.5h-3.61zM734.9,1722.8h3.61v12.1h-3.61zM744.0,1741.5h3.61v29.5h-3.61zM753.1,1757.1h3.61v75.0h-3.61zM762.2,1750.0h3.61v19.9h-3.61zM771.3,1736.0h3.61v34.2h-3.61zM780.4,1715.0h3.61v12.3h-3.61zM789.6,1719.6h3.61v17.7h-3.61zM798.7,1707.8h3.61v36.9h-3.61zM807.8,1709.2h3.61v19.2h-3.61zM816.9,1693.1h3.61v45.6h-3.61zM826.0,1684.2h3.61v43.6h-3.61zM835.1,1706.0h3.61v22.7h-3.61zM844.2,1712.2h3.61v38.9h-3.61zM853.4,1736.4h3.61v32.7h-3.61zM862.5,1732.7h3.61v65.3h-3.61zM871.6,1724.4h3.61v41.3h-3.61zM880.7,1731.3h3.61v36.7h-3.61zM889.8,1728.2h3.61v22.3h-3.61zM898.9,1733.3h3.61v31.7h-3.61zM908.0,1716.9h3.61v75.0h-3.61zM917.2,1722.4h3.61v61.1h-3.61zM926.3,1727.2h3.61v17.2h-3.61zM935.4,1722.0h3.61v34.5h-3.61zM944.5,1713.0h3.61v34.8h-3.61zM953.6,1715.7h3.61v53.5h-3.61zM962.7,1708.4h3.61v21.3h-3.61zM971.8,1735.8h3.61v42.1h-3.61zM981.0,1710.5h3.61v39.8h-3.61zM990.1,1719.6h3.61v22.4h-3.61zM999.2,1716.7h3.61v22.2h-3.61zM1008.3,1708.5h3.61v24.0h-3.61zM1017.4,1715.7h3.61v11.6h-3.61zM1026.5,1700.5h3.61v41.1h-3.61zM1035.6,1690.5h3.61v45.9h-3.61zM1044.8,1699.9h3.61v16.0h-3.61zM1053.9,1704.5h3.61v13.0h-3.61zM1063.0,1704.9h3.61v26.8h-3.61zM1072.1,1704.4h3.61v26.7h-3.61zM1081.2,1715.6h3.61v10.1h-3.61zM1090.3,1715.9h3.61v39.9h-3.61zM1099.4,1703.4h3.61v35.1h-3.61zM1108.6,1701.8h3.61v22.9h-3.61zM1117.7,1681.3h3.61v41.4h-3.61zM1126.8,1694.4h3.61v21.2h-3.61zM1135.9,1679.5h3.61v23.2h-3.61zM1145.0,1701.3h3.61v27.5h-3.61zM1154.1,1714.1h3.61v42.9h-3.61zM1163.3,1710.2h3.61v33.6h-3.61zM1172.4,1708.0h3.61v33.1h-3.61zM1181.5,1704.8h3.61v46.2h-3.61zM1190.6,1708.2h3.61v21.4h-3.61zM1199.7,1728.2h3.61v11.1h-3.61zM1208.8,1724.6h3.61v61.8h-3.61zM1217.9,1700.7h3.61v32.1h-3.61zM1227.1,1698.8h3.61v31.5h-3.61zM1236.2,1688.0h3.61v16.9h-3.61zM1245.3,1704.8h3.61v14.3h-3.61zM1254.4,1715.4h3.61v13.6h-3.61zM1263.5,1726.4h3.61v28.6h-3.61zM1272.6,1722.7h3.61v62.2h-3.61zM1281.7,1718.5h3.61v13.0h-3.61zM1290.9,1720.3h3.61v42.8h-3.61zM1300.0,1730.0h3.61v83.5h-3.61zM1309.1,1723.5h3.61v13.9h-3.61zM1318.2,1711.2h3.61v16.5h-3.61zM1327.3,1704.6h3.61v39.4h-3.61zM1336.4,1717.3h3.61v12.2h-3.61zM1345.5,1723.2h3.61v10.6h-3.61zM1354.7,1721.6h3.61v21.4h-3.61zM1363.8,1702.9h3.61v43.8h-3.61zM1372.9,1701.0h3.61v31.4h-3.61zM1382.0,1702.5h3.61v16.4h-3.61zM1391.1,1704.3h3.61v39.0h-3.61zM1400.2,1705.3h3.61v14.7h-3.61zM1409.3,1702.4h3.61v46.0h-3.61zM1418.5,1698.4h3.61v13.8h-3.61zM1427.6,1685.1h3.61v14.3h-3.61zM1436.7,1678.6h3.61v19.7h-3.61zM1445.8,1677.6h3.61v41.9h-3.61zM1454.9,1707.5h3.61v49.8h-3.61zM1464.0,1706.3h3.61v31.1h-3.61zM1473.1,1691.3h3.61v24.5h-3.61zM1482.3,1676.5h3.61v30.5h-3.61zM1491.4,1666.2h3.61v71.3h-3.61zM1500.5,1679.1h3.61v29.1h-3.61zM1509.6,1692.4h3.61v11.3h-3.61zM1518.7,1703.6h3.61v35.8h-3.61zM1527.8,1690.2h3.61v16.0h-3.61zM1536.9,1692.5h3.61v43.2h-3.61zM1546.1,1685.3h3.61v18.2h-3.61zM1555.2,1651.7h3.61v11.7h-3.61zM1564.3,1659.0h3.61v27.8h-3.61zM1573.4,1643.7h3.61v55.8h-3.61zM1582.5,1650.7h3.61v10.8h-3.61zM1591.6,1644.5h3.61v11.7h-3.61zM1600.7,1645.7h3.61v20.4h-3.61zM1609.9,1657.9h3.61v20.0h-3.61zM1619.0,1662.4h3.61v46.4h-3.61zM1628.1,1662.8h3.61v39.3h-3.61zM1637.2,1655.7h3.61v34.1h-3.61zM1646.3,1651.4h3.61v20.7h-3.61zM1655.4,1663.4h3.61v45.7h-3.61zM1664.5,1673.5h3.61v39.0h-3.61zM1673.7,1673.2h3.61v34.1h-3.61zM1682.8,1672.0h3.61v50.5h-3.61zM1691.9,1682.2h3.61v47.6h-3.61zM1701.0,1661.1h3.61v19.3h-3.61zM1710.1,1661.4h3.61v56.3h-3.61zM1719.2,1643.8h3.61v26.9h-3.61zM1728.3,1626.7h3.61v40.5h-3.61zM1737.5,1635.8h3.61v37.6h-3.61zM1746.6,1621.5h3.61v22.9h-3.61zM1755.7,1639.4h3.61v13.0h-3.61zM1764.8,1631.3h3.61v47.5h-3.61zM1773.9,1622.2h3.61v26.3h-3.61zM1783.0,1609.9h3.61v28.4h-3.61zM1792.1,1603.2h3.61v39.7h-3.61zM1801.3,1594.0h3.61v36.8h-3.61zM1810.4,1569.8h3.61v17.6h-3.61zM1819.5,1542.4h3.61v34.6h-3.61zM1828.6,1510.5h3.61v46.6h-3.61zM1837.7,1469.0h3.61v40.8h-3.61zM1846.8,1446.0h3.61v15.2h-3.61zM1855.9,1438.1h3.61v43.3h-3.61zM1865.1,1448.7h3.61v18.1h-3.61zM1874.2,1477.3h3.61v34.7h-3.61zM1883.3,1509.7h3.61v50.3h-3.61zM1892.4,1508.1h3.61v33.8h-3.61zM1901.5,1531.8h3.61v32.7h-3.61zM1910.6,1551.7h3.61v10.5h-3.61zM1919.7,1561.9h3.61v80.9h-3.61zM1928.9,1566.0h3.61v42.2h-3.61zM1938.0,1574.6h3.61v78.6h-3.61zM1947.1,1586.5h3.61v30.5h-3.61zM1956.2,1596.3h3.61v35.0h-3.61zM1965.3,1627.4h3.61v38.2h-3.61zM1974.4,1623.9h3.61v39.0h-3.61zM1983.6,1636.2h3.61v39.4h-3.61zM1992.7,1631.1h3.61v20.6h-3.61zM2001.8,1632.3h3.61v44.3h-3.61zM2010.9,1628.1h3.61v39.4h-3.61zM2020.0,1633.9h3.61v18.7h-3.61zM2029.1,1646.9h3.61v45.2h-3.61zM2038.2,1650.6h3.61v16.9h-3.61zM2047.4,1657.8h3.61v15.7h-3.61zM2056.5,1667.5h3.61v45.0h-3.61zM2065.6,1670.1h3.61v19.2h-3.61zM2074.7,1678.4h3.61v34.2h-3.61zM2083.8,1680.6h3.61v27.5h-3.61zM2092.9,1679.7h3.61v14.1h-3.61zM2102.0,1701.4h3.61v25.3h-3.61zM2111.2,1697.3h3.61v25.6h-3.61zM2120.3,1698.3h3.61v33.8h-3.61zM2129.4,1704.1h3.61v20.0h-3.61zM2138.5,1694.4h3.61v17.7h-3.61zM2147.6,1708.2h3.61v21.3h-3.61zM2156.7,1692.8h3.61v31.6h-3.61zM2165.8,1702.2h3.61v43.0h-3.61zM2175.0,1694.4h3.61v41.3h-3.61zM2184.1,1698.3h3.61v28.5h-3.61zM2193.2,1714.9h3.61v35.9h-3.61zM2202.3,1707.7h3.61v32.0h-3.61zM2211.4,1692.0h3.61v43.6h-3.61zM2220.5,1685.7h3.61v42.8h-3.61zM2229.6,1696.7h3.61v47.8h-3.61zM2238.8,1707.6h3.61v89.4h-3.61zM2247.9,1707.3h3.61v58.0h-3.61zM2257.0,1703.3h3.61v13.4h-3.61zM2266.1,1708.8h3.61v37.2h-3.61zM2275.2,1690.9h3.61v11.3h-3.61zM2284.3,1690.2h3.61v66.3h-3.61zM2293.4,1687.9h3.61v42.0h-3.61zM2302.6,1697.2h3.61v22.0h-3.61zM2311.7,1696.6h3.61v28.5h-3.61zM2320.8,1697.1h3.61v16.8h-3.61zM2329.9,1701.2h3.61v38.1h-3.61zM2339.0,1694.3h3.61v23.4h-3.61zM2348.1,1705.1h3.61v23.3h-3.61zM2357.2,1703.4h3.61v43.6h-3.61zM2366.4,1706.8h3.61v16.7h-3.61zM2375.5,1709.2h3.61v29.3h-3.61zM2384.6,1703.8h3.61v59.4h-3.61zM2393.7,1700.9h3.61v30.7h-3.61zM2402.8,1712.6h3.61v47.3h-3.61zM2411.9,1710.5h3.61v25.2h-3.61zM2421.0,1717.3h3.61v47.0h-3.61zM2430.2,1702.5h3.61v25.6h-3.61zM2439.3,1701.5h3.61v10.2h-3.61zM2448.4,1717.0h3.61v19.7h-3.61zM2457.5,1715.7h3.61v19.1h-3.61zM2466.6,1727.1h3.61v42.0h-3.61zM2475.7,1723.3h3.61v11.9h-3.61zM2484.8,1707.9h3.61v34.6h-3.61zM2494.0,1707.6h3.61v84.3h-3.61zM2503.1,1708.4h3.61v29.4h-3.61zM2512.2,1720.1h3.61v18.9h-3.61zM2521.3,1729.3h3.61v24.4h-3.61zM2530.4,1718.2h3.61v30.0h-3.61zM2539.5,1709.3h3.61v22.2h-3.61zM2548.6,1698.8h3.61v18.5h-3.61zM2557.8,1692.2h3.61v44.5h-3.61zM2566.9,1686.8h3.61v29.8h-3.61zM2576.0,1684.5h3.61v15.4h-3.61zM2585.1,1683.1h3.61v29.9h-3.61zM2594.2,1699.8h3.61v19.1h-3.61zM2603.3,1709.5h3.61v27.5h-3.61zM2612.4,1726.8h3.61v44.0h-3.61zM2621.6,1727.9h3.61v41.6h-3.61zM2630.7,1736.7h3.61v15.8h-3.61zM2639.8,1722.1h3.61v23.6h-3.61zM2648.9,1715.8h3.61v54.1h-3.61zM2658.0,1721.8h3.61v36.4h-3.61zM2667.1,1722.0h3.61v40.3h-3.61zM2676.2,1729.4h3.61v35.8h-3.61zM2685.4,1727.1h3.61v19.0h-3.61zM2694.5,1713.9h3.61v45.5h-3.61zM2703.6,1715.0h3.61v12.2h-3.61zM2712.7,1703.9h3.61v20.4h-3.61zM2721.8,1708.5h3.61v75.8h-3.61zM2730.9,1711.5h3.61v17.7h-3.61zM2740.0,1717.2h3.61v33.5h-3.61zM2749.2,1719.6h3.61v24.0h-3.61zM2758.3,1729.8h3.61v25.5h-3.61zM2767.4,1725.1h3.61v23.4h-3.61zM2776.5,1717.1h3.61v45.1h-3.61zM2785.6,1719.4h3.61v37.1h-3.61zM2794.7,1722.7h3.61v60.2h-3.61zM2803.9,1733.6h3.61v30.0h-3.61zM2813.0,1738.8h3.61v71.6h-3.61zM2822.1,1733.5h3.61v27.6h-3.61zM2831.2,1720.2h3.61v28.0h-3.61zM2840.3,1720.2h3.61v28.7h-3.61zM2849.4,1725.5h3.61v35.5h-3.61zM2858.5,1737.5h3.61v11.5h-3.61zM2867.7,1733.6h3.61v39.2h-3.61zM2876.8,1710.3h3.61v57.9h-3.61zM2885.9,1707.2h3.61v13.4h-3.61zM2895.0,1699.6h3.61v12.1h-3.61zM2904.1,1695.8h3.61v64.1h-3.61zM2913.2,1694.0h3.61v32.2h-3.61zM2922.3,1701.1h3.61v43.1h-3.61zM2931.5,1709.0h3.61v74.4h-3.61zM2940.6,1707.3h3.61v20.0h-3.61zM2949.7,1700.4h3.61v42.6h-3.61zM2958.8,1694.6h3.61v50.1h-3.61zM2967.9,1686.7h3.61v40.5h-3.61zM2977.0,1699.1h3.61v48.8h-3.61zM2986.1,1700.0h3.61v27.6h-3.61zM2995.3,1695.4h3.61v23.9h-3.61zM3004.4,1708.1h3.61v44.9h-3.61zM3013.5,1716.0h3.61v30.3h-3.61zM3022.6,1708.0h3.61v22.3h-3.61zM3031.7,1711.6h3.61v21.1h-3.61zM3040.8,1716.5h3.61v32.5h-3.61zM3049.9,1720.5h3.61v26.9h-3.61zM3059.1,1732.3h3.61v75.2h-3.61zM3068.2,1732.3h3.61v16.8h-3.61zM3077.3,1722.0h3.61v40.4h-3.61zM3086.4,1721.2h3.61v35.6h-3.61zM3095.5,1713.6h3.61v41.9h-3.61zM3104.6,1712.2h3.61v35.7h-3.61zM3113.7,1709.2h3.61v46.1h-3.61zM3122.9,1723.2h3.61v19.8h-3.61zM3132.0,1695.6h3.61v51.8h-3.61zM3141.1,1694.3h3.61v21.2h-3.61zM3150.2,1682.8h3.61v22.1h-3.61zM3159.3,1705.0h3.61v44.7h-3.61zM3168.4,1717.7h3.61v15.8h-3.61zM3177.5,1712.2h3.61v51.3h-3.61zM3186.7,1727.5h3.61v18.5h-3.61zM3195.8,1728.1h3.61v27.6h-3.61zM3204.9,1707.6h3.61v75.7h-3.61zM3214.0,1713.4h3.61v45.1h-3.61zM3223.1,1712.0h3.61v30.0h-3.61zM3232.2,1721.8h3.61v38.5h-3.61zM3241.3,1710.3h3.61v13.5h-3.61zM3250.5,1723.8h3.61v32.7h-3.61zM3259.6,1724.7h3.61v20.3h-3.61zM3268.7,1731.1h3.61v18.6h-3.61zM3277.8,1732.1h3.61v46.8h-3.61zM3286.9,1712.2h3.61v59.9h-3.61zM3296.0,1716.5h3.61v19.4h-3.61zM3305.1,1716.4h3.61v39.9h-3.61zM3314.3,1708.5h3.61v13.6h-3.61zM3323.4,1722.2h3.61v32.6h-3.61zM3332.5,1713.8h3.61v13.7h-3.61zM3341.6,1719.3h3.61v32.0h-3.61zM3350.7,1716.6h3.61v35.2h-3.61zM3359.8,1715.5h3.61v45.8h-3.61zM3368.9,1734.3h3.61v43.2h-3.61zM3378.1,1727.1h3.61v13.6h-3.61zM3387.2,1733.7h3.61v28.9h-3.61zM3396.3,1727.4h3.61v27.8h-3.61zM3405.4,1710.1h3.61v29.3h-3.61zM3414.5,1712.8h3.61v25.3h-3.61zM3423.6,1700.1h3.61v19.1h-3.61zM3432.7,1702.4h3.61v87.1h-3.61zM3441.9,1707.2h3.61v40.1h-3.61zM3451.0,1714.5h3.61v18.7h-3.61zM3460.1,1726.5h3.61v46.8h-3.61zM3469.2,1716.4h3.61v21.1h-3.61zM3478.3,1701.8h3.61v18.9h-3.61zM3487.4,1702.8h3.61v59.4h-3.61zM3496.5,1706.4h3.61v80.9h-3.61zM3505.7,1709.0h3.61v41.0h-3.61z" fill="#5c5600"/>
<path d="M229.3,2157.6h4.77v9.9h-4.77zM232.6,2112.2h4.77v47.3h-4.77zM249.1,2121.4h4.77v45.3h-4.77zM252.3,2118.5h4.77v44.6h-4.77zM255.6,2143.2h4.77v5.0h-4.77zM262.2,2103.4h4.77v213.3h-4.77zM265.5,2073.3h4.77v100.3h-4.77zM275.3,2117.4h4.77v73.7h-4.77zM288.5,2073.1h4.77v90.1h-4.77zM291.8,2088.4h4.77v67.5h-4.77zM301.6,2098.4h4.77v63.7h-4.77zM308.2,2101.4h4.77v90.2h-4.77zM314.8,2085.4h4.77v115.4h-4.77zM321.3,2072.5h4.77v118.9h-4.77zM354.2,2086.0h4.77v91.6h-4.77zM357.5,2124.9h4.77v50.7h-4.77zM360.8,2102.6h4.77v47.0h-4.77zM367.4,2135.9h4.77v18.2h-4.77zM370.6,2099.7h4.77v44.3h-4.77zM373.9,2138.1h4.77v5.0h-4.77zM410.1,2101.6h4.77v93.4h-4.77zM413.4,2096.0h4.77v78.0h-4.77zM416.6,2067.2h4.77v118.2h-4.77zM436.4,2082.7h4.77v5.0h-4.77zM452.8,2092.8h4.77v101.5h-4.77zM459.4,2102.8h4.77v72.5h-4.77zM469.2,2089.7h4.77v78.2h-4.77zM482.4,2102.6h4.77v75.9h-4.77zM495.5,2074.7h4.77v23.3h-4.77zM498.8,2124.3h4.77v41.4h-4.77zM521.8,2074.5h4.77v88.5h-4.77zM525.1,2130.1h4.77v35.8h-4.77zM528.4,2075.2h4.77v142.4h-4.77zM535.0,2112.6h4.77v46.7h-4.77zM554.7,2103.9h4.77v105.1h-4.77zM581.0,2114.1h4.77v63.2h-4.77zM607.2,2132.0h4.77v103.2h-4.77zM613.8,2124.6h4.77v44.2h-4.77zM630.3,2087.0h4.77v71.7h-4.77zM653.3,2151.6h4.77v12.5h-4.77zM673.0,2115.0h4.77v41.7h-4.77zM686.1,2108.7h4.77v72.1h-4.77zM692.7,2094.1h4.77v58.4h-4.77zM738.7,2092.6h4.77v59.4h-4.77zM742.0,2107.7h4.77v45.7h-4.77zM745.3,2085.4h4.77v158.1h-4.77zM758.4,2103.4h4.77v78.2h-4.77zM761.7,2135.1h4.77v45.5h-4.77zM765.0,2061.8h4.77v256.7h-4.77zM778.1,2144.3h4.77v45.6h-4.77zM807.7,2128.4h4.77v79.7h-4.77zM840.6,2071.0h4.77v150.9h-4.77zM857.0,2091.6h4.77v59.2h-4.77zM863.6,2116.3h4.77v46.4h-4.77zM866.9,2072.9h4.77v5.0h-4.77zM870.1,2086.3h4.77v53.3h-4.77zM889.9,2122.3h4.77v52.6h-4.77zM893.1,2073.2h4.77v96.6h-4.77zM896.4,2128.7h4.77v68.6h-4.77zM899.7,2080.7h4.77v100.5h-4.77zM903.0,2109.4h4.77v83.4h-4.77zM906.3,2089.8h4.77v115.6h-4.77zM909.6,2104.7h4.77v94.9h-4.77zM929.3,2078.4h4.77v108.5h-4.77zM935.9,2104.0h4.77v104.4h-4.77zM939.2,2100.2h4.77v47.8h-4.77zM942.4,2123.3h4.77v188.0h-4.77zM945.7,2097.0h4.77v82.1h-4.77zM958.9,2101.5h4.77v80.0h-4.77zM962.2,2129.4h4.77v55.0h-4.77zM968.7,2102.5h4.77v58.3h-4.77zM972.0,2134.5h4.77v51.5h-4.77zM981.9,2127.9h4.77v122.8h-4.77zM991.7,2104.9h4.77v65.6h-4.77zM998.3,2106.1h4.77v51.6h-4.77zM1001.6,2121.4h4.77v87.0h-4.77zM1024.6,2136.8h4.77v5.0h-4.77zM1034.5,2125.2h4.77v75.5h-4.77zM1057.5,2131.1h4.77v40.8h-4.77zM1064.0,2095.0h4.77v63.0h-4.77zM1067.3,2071.6h4.77v90.3h-4.77zM1070.6,2153.3h4.77v11.9h-4.77zM1073.9,2102.9h4.77v52.3h-4.77zM1077.2,2106.6h4.77v47.8h-4.77zM1087.0,2107.3h4.77v110.3h-4.77zM1093.6,2102.6h4.77v16.2h-4.77zM1096.9,2099.8h4.77v32.7h-4.77zM1103.5,2095.7h4.77v166.2h-4.77zM1106.8,2125.3h4.77v47.2h-4.77zM1113.3,2071.3h4.77v122.2h-4.77zM1116.6,2105.8h4.77v33.7h-4.77zM1123.2,2124.3h4.77v5.0h-4.77zM1136.3,2108.3h4.77v63.3h-4.77zM1139.6,2111.4h4.77v50.3h-4.77zM1142.9,2062.9h4.77v90.7h-4.77zM1156.0,2083.3h4.77v132.8h-4.77zM1172.5,2106.0h4.77v41.4h-4.77zM1202.1,2127.5h4.77v5.0h-4.77zM1211.9,2117.9h4.77v52.6h-4.77zM1225.1,2126.2h4.77v5.0h-4.77zM1244.8,2085.1h4.77v113.2h-4.77zM1248.1,2138.3h4.77v56.7h-4.77zM1261.2,2107.4h4.77v52.1h-4.77zM1274.3,2119.8h4.77v58.2h-4.77zM1284.2,2131.8h4.77v8.7h-4.77zM1287.5,2091.8h4.77v106.0h-4.77zM1303.9,2110.4h4.77v89.1h-4.77zM1310.5,2114.8h4.77v65.3h-4.77zM1330.2,2122.7h4.77v51.1h-4.77zM1343.4,2113.5h4.77v20.6h-4.77zM1353.2,2071.8h4.77v5.0h-4.77zM1356.5,2098.4h4.77v88.3h-4.77zM1363.1,2079.1h4.77v113.3h-4.77zM1369.6,2080.6h4.77v178.2h-4.77zM1389.4,2070.2h4.77v75.3h-4.77zM1392.7,2132.4h4.77v184.3h-4.77zM1395.9,2065.8h4.77v82.4h-4.77zM1399.2,2077.1h4.77v5.0h-4.77zM1422.2,2115.7h4.77v53.6h-4.77zM1425.5,2093.8h4.77v78.5h-4.77zM1435.4,2077.2h4.77v161.0h-4.77zM1451.8,2115.9h4.77v99.4h-4.77zM1455.1,2095.4h4.77v27.2h-4.77zM1458.4,2082.4h4.77v42.1h-4.77zM1464.9,2115.7h4.77v39.2h-4.77zM1474.8,2148.7h4.77v39.2h-4.77zM1478.1,2101.9h4.77v5.0h-4.77zM1488.0,2132.7h4.77v40.6h-4.77zM1494.5,2088.9h4.77v112.3h-4.77zM1524.1,2123.4h4.77v57.2h-4.77zM1534.0,2077.7h4.77v181.9h-4.77zM1547.1,2085.7h4.77v232.8h-4.77zM1553.7,2113.6h4.77v5.0h-4.77zM1566.8,2081.5h4.77v69.2h-4.77zM1589.8,2075.4h4.77v56.3h-4.77zM1593.1,2110.4h4.77v34.4h-4.77zM1596.4,2131.8h4.77v29.6h-4.77zM1606.3,2086.1h4.77v48.9h-4.77zM1616.1,2089.2h4.77v183.0h-4.77zM1635.8,2101.2h4.77v58.7h-4.77zM1639.1,2107.1h4.77v44.7h-4.77zM1642.4,2099.5h4.77v79.2h-4.77zM1658.8,2069.5h4.77v86.1h-4.77zM1691.7,2098.0h4.77v87.2h-4.77zM1695.0,2099.5h4.77v157.7h-4.77zM1698.3,2115.0h4.77v126.0h-4.77zM1701.6,2065.1h4.77v84.3h-4.77zM1704.8,2144.3h4.77v5.0h-4.77zM1714.7,2090.6h4.77v78.8h-4.77zM1721.3,2115.1h4.77v41.2h-4.77zM1724.6,2124.3h4.77v33.4h-4.77zM1727.8,2086.8h4.77v5.0h-4.77zM1734.4,2127.4h4.77v26.1h-4.77zM1737.7,2116.6h4.77v54.4h-4.77zM1747.6,2145.1h4.77v18.5h-4.77zM1750.9,2093.0h4.77v97.3h-4.77zM1754.1,2068.2h4.77v122.8h-4.77zM1764.0,2122.9h4.77v89.9h-4.77zM1767.3,2105.8h4.77v93.3h-4.77zM1770.6,2097.4h4.77v101.0h-4.77zM1787.0,2113.6h4.77v25.4h-4.77zM1796.9,2142.4h4.77v31.3h-4.77zM1819.9,2094.0h4.77v124.9h-4.77zM1829.7,2104.4h4.77v109.8h-4.77zM1856.0,2116.6h4.77v78.9h-4.77zM1859.3,2109.0h4.77v93.1h-4.77zM1869.2,2127.1h4.77v70.8h-4.77zM1875.7,2086.3h4.77v92.7h-4.77zM1879.0,2085.8h4.77v12.9h-4.77zM1895.4,2124.1h4.77v13.1h-4.77zM1898.7,2084.6h4.77v53.9h-4.77zM1902.0,2122.8h4.77v77.0h-4.77zM1908.6,2102.0h4.77v5.0h-4.77zM1915.2,2103.5h4.77v56.5h-4.77zM1934.9,2070.4h4.77v142.5h-4.77zM1944.7,2110.9h4.77v43.0h-4.77zM1948.0,2114.8h4.77v37.6h-4.77zM1971.0,2096.5h4.77v69.2h-4.77zM1974.3,2146.5h4.77v5.0h-4.77zM1980.9,2083.9h4.77v74.4h-4.77zM2000.6,2073.3h4.77v6.9h-4.77zM2017.0,2128.1h4.77v42.8h-4.77zM2023.6,2075.8h4.77v120.6h-4.77zM2036.8,2139.8h4.77v12.9h-4.77zM2082.8,2136.6h4.77v47.8h-4.77zM2086.0,2076.9h4.77v103.8h-4.77zM2095.9,2110.2h4.77v66.4h-4.77zM2155.1,2110.3h4.77v80.4h-4.77zM2181.3,2089.5h4.77v5.0h-4.77zM2187.9,2107.7h4.77v56.4h-4.77zM2201.1,2108.7h4.77v126.9h-4.77zM2204.3,2131.0h4.77v17.9h-4.77zM2214.2,2112.9h4.77v15.8h-4.77zM2217.5,2124.8h4.77v33.7h-4.77zM2224.1,2085.2h4.77v65.2h-4.77zM2227.4,2137.2h4.77v50.6h-4.77zM2233.9,2129.2h4.77v81.1h-4.77zM2256.9,2128.1h4.77v34.5h-4.77zM2263.5,2102.6h4.77v54.3h-4.77zM2273.4,2127.1h4.77v24.7h-4.77zM2286.5,2092.3h4.77v104.5h-4.77zM2293.1,2070.2h4.77v130.1h-4.77zM2302.9,2084.9h4.77v113.8h-4.77zM2306.2,2102.8h4.77v34.9h-4.77zM2312.8,2093.2h4.77v5.0h-4.77zM2325.9,2070.7h4.77v96.9h-4.77zM2329.2,2091.8h4.77v80.0h-4.77zM2339.1,2098.7h4.77v199.1h-4.77zM2345.7,2123.7h4.77v102.4h-4.77zM2358.8,2121.0h4.77v42.0h-4.77zM2378.5,2146.7h4.77v26.5h-4.77zM2388.4,2137.9h4.77v67.1h-4.77zM2404.8,2134.4h4.77v104.9h-4.77zM2414.7,2123.3h4.77v68.4h-4.77zM2424.5,2104.4h4.77v118.8h-4.77zM2427.8,2097.4h4.77v68.2h-4.77zM2431.1,2063.1h4.77v110.7h-4.77zM2434.4,2097.4h4.77v5.0h-4.77zM2467.2,2079.6h4.77v118.9h-4.77zM2500.1,2073.5h4.77v97.5h-4.77zM2513.3,2098.0h4.77v117.7h-4.77zM2519.8,2120.1h4.77v47.4h-4.77zM2598.7,2088.2h4.77v95.8h-4.77zM2605.3,2091.8h4.77v70.8h-4.77zM2634.8,2102.2h4.77v108.0h-4.77zM2638.1,2097.0h4.77v59.1h-4.77zM2641.4,2137.1h4.77v43.8h-4.77zM2644.7,2146.7h4.77v74.2h-4.77zM2654.6,2137.5h4.77v150.4h-4.77zM2684.1,2108.2h4.77v49.2h-4.77zM2687.4,2132.1h4.77v68.4h-4.77zM2697.3,2117.9h4.77v62.6h-4.77zM2700.6,2092.3h4.77v88.0h-4.77zM2703.9,2083.0h4.77v93.5h-4.77zM2710.4,2063.3h4.77v138.2h-4.77zM2746.6,2080.3h4.77v93.4h-4.77zM2753.1,2105.7h4.77v100.5h-4.77zM2776.1,2107.7h4.77v96.5h-4.77zM2792.6,2126.1h4.77v98.7h-4.77zM2802.4,2072.0h4.77v152.4h-4.77zM2805.7,2085.3h4.77v91.0h-4.77zM2812.3,2118.9h4.77v5.0h-4.77zM2815.6,2107.2h4.77v192.7h-4.77zM2828.7,2115.7h4.77v107.8h-4.77zM2835.3,2128.4h4.77v18.6h-4.77zM2838.6,2109.2h4.77v5.0h-4.77zM2841.9,2124.2h4.77v20.9h-4.77zM2848.4,2118.7h4.77v28.9h-4.77zM2851.7,2147.0h4.77v5.0h-4.77zM2864.9,2073.9h4.77v5.0h-4.77zM2891.2,2101.2h4.77v91.3h-4.77zM2910.9,2112.8h4.77v63.4h-4.77zM2920.7,2096.3h4.77v119.7h-4.77zM2943.7,2080.8h4.77v81.4h-4.77zM2970.0,2097.3h4.77v221.2h-4.77zM2973.3,2118.4h4.77v89.6h-4.77zM2976.6,2075.3h4.77v103.8h-4.77zM2979.9,2094.7h4.77v7.3h-4.77zM2983.2,2084.9h4.77v100.5h-4.77zM2993.0,2126.2h4.77v61.2h-4.77zM2996.3,2112.7h4.77v84.4h-4.77zM3012.8,2109.3h4.77v68.8h-4.77zM3016.0,2101.9h4.77v53.9h-4.77zM3042.3,2094.8h4.77v68.6h-4.77zM3048.9,2085.8h4.77v58.3h-4.77zM3052.2,2111.1h4.77v82.3h-4.77zM3058.8,2115.7h4.77v25.4h-4.77zM3065.3,2084.8h4.77v5.0h-4.77zM3068.6,2096.4h4.77v93.9h-4.77zM3078.5,2093.2h4.77v57.2h-4.77zM3081.8,2100.1h4.77v59.7h-4.77zM3098.2,2078.6h4.77v136.9h-4.77zM3127.8,2102.6h4.77v34.0h-4.77zM3131.1,2097.8h4.77v87.4h-4.77zM3137.6,2126.7h4.77v32.4h-4.77zM3147.5,2119.6h4.77v71.0h-4.77zM3160.6,2074.2h4.77v79.9h-4.77zM3173.8,2099.8h4.77v41.4h-4.77zM3196.8,2128.5h4.77v51.8h-4.77zM3200.1,2090.0h4.77v104.6h-4.77zM3203.4,2092.4h4.77v113.9h-4.77zM3209.9,2075.4h4.77v116.8h-4.77zM3216.5,2076.7h4.77v101.6h-4.77zM3226.4,2088.5h4.77v86.1h-4.77zM3229.6,2077.0h4.77v100.3h-4.77zM3236.2,2085.7h4.77v89.5h-4.77zM3239.5,2088.6h4.77v81.7h-4.77zM3252.6,2105.7h4.77v67.3h-4.77zM3262.5,2093.1h4.77v38.5h-4.77zM3288.8,2123.1h4.77v47.6h-4.77zM3298.7,2097.1h4.77v83.4h-4.77zM3347.9,2134.6h4.77v58.8h-4.77zM3380.8,2080.9h4.77v97.4h-4.77zM3387.4,2145.1h4.77v36.2h-4.77zM3394.0,2118.9h4.77v62.6h-4.77zM3417.0,2091.5h4.77v77.9h-4.77zM3430.1,2065.1h4.77v195.4h-4.77zM3449.8,2097.2h4.77v89.4h-4.77zM3453.1,2109.8h4.77v44.4h-4.77zM3469.5,2099.1h4.77v88.2h-4.77zM3492.5,2111.8h4.77v51.5h-4.77zM3502.4,2087.1h4.77v9.5h-4.77zM3509.0,2102.1h4.77v49.5h-4.77z" fill="#6e6600"/>
<path d="M229.3,2166.6h4.77v35.8h-4.77zM232.6,2158.4h4.77v8.3h-4.77zM249.1,2165.8h4.77v33.6h-4.77zM252.3,2162.1h4.77v13.6h-4.77zM255.6,2147.2h4.77v57.2h-4.77zM262.2,2315.7h4.77v1.8h-4.77zM265.5,2172.6h4.77v49.9h-4.77zM275.3,2190.0h4.77v51.6h-4.77zM288.5,2162.2h4.77v48.6h-4.77zM291.8,2154.9h4.77v48.6h-4.77zM301.6,2161.2h4.77v12.0h-4.77zM308.2,2190.6h4.77v10.3h-4.77zM314.8,2199.9h4.77v12.5h-4.77zM321.3,2190.4h4.77v23.7h-4.77zM354.2,2176.5h4.77v65.4h-4.77zM357.5,2174.6h4.77v18.6h-4.77zM360.8,2148.5h4.77v35.8h-4.77zM367.4,2153.1h4.77v48.9h-4.77zM370.6,2143.0h4.77v40.8h-4.77zM373.9,2142.1h4.77v18.5h-4.77zM410.1,2193.9h4.77v12.8h-4.77zM413.4,2173.0h4.77v8.7h-4.77zM416.6,2184.3h4.77v34.4h-4.77zM436.4,2086.7h4.77v124.9h-4.77zM452.8,2193.3h4.77v19.0h-4.77zM459.4,2174.3h4.77v92.6h-4.77zM469.2,2166.9h4.77v28.6h-4.77zM482.4,2177.5h4.77v27.4h-4.77zM495.5,2096.9h4.77v51.9h-4.77zM498.8,2164.7h4.77v35.9h-4.77zM521.8,2162.0h4.77v17.5h-4.77zM525.1,2164.9h4.77v63.6h-4.77zM528.4,2216.6h4.77v92.1h-4.77zM535.0,2158.3h4.77v18.5h-4.77zM554.7,2208.0h4.77v32.4h-4.77zM581.0,2176.3h4.77v96.5h-4.77zM607.2,2234.2h4.77v36.9h-4.77zM613.8,2167.8h4.77v47.2h-4.77zM630.3,2157.7h4.77v155.8h-4.77zM653.3,2163.1h4.77v39.2h-4.77zM673.0,2155.6h4.77v77.7h-4.77zM686.1,2179.8h4.77v12.0h-4.77zM692.7,2151.6h4.77v12.6h-4.77zM738.7,2151.0h4.77v40.9h-4.77zM742.0,2152.3h4.77v54.1h-4.77zM745.3,2242.5h4.77v63.6h-4.77zM758.4,2180.6h4.77v49.4h-4.77zM761.7,2179.6h4.77v114.6h-4.77zM765.0,2317.5h4.77v0.0h-4.77zM778.1,2188.9h4.77v29.2h-4.77zM807.7,2207.1h4.77v48.3h-4.77zM840.6,2220.9h4.77v20.9h-4.77zM857.0,2149.8h4.77v8.2h-4.77zM863.6,2161.7h4.77v55.7h-4.77zM866.9,2076.9h4.77v8.1h-4.77zM870.1,2138.6h4.77v10.9h-4.77zM889.9,2173.9h4.77v143.6h-4.77zM893.1,2168.8h4.77v72.3h-4.77zM896.4,2196.3h4.77v9.3h-4.77zM899.7,2180.2h4.77v10.4h-4.77zM903.0,2191.8h4.77v20.2h-4.77zM906.3,2204.5h4.77v82.6h-4.77zM909.6,2198.6h4.77v12.6h-4.77zM929.3,2185.9h4.77v58.7h-4.77zM935.9,2207.5h4.77v97.2h-4.77zM939.2,2147.0h4.77v23.3h-4.77zM942.4,2310.4h4.77v7.1h-4.77zM945.7,2178.1h4.77v139.4h-4.77zM958.9,2180.5h4.77v15.9h-4.77zM962.2,2183.4h4.77v62.4h-4.77zM968.7,2159.8h4.77v11.0h-4.77zM972.0,2185.0h4.77v28.5h-4.77zM981.9,2249.6h4.77v9.0h-4.77zM991.7,2169.5h4.77v37.7h-4.77zM998.3,2156.7h4.77v12.8h-4.77zM1001.6,2207.5h4.77v58.0h-4.77zM1024.6,2140.8h4.77v21.0h-4.77zM1034.5,2199.7h4.77v85.7h-4.77zM1057.5,2170.9h4.77v13.2h-4.77zM1064.0,2157.0h4.77v53.2h-4.77zM1067.3,2160.9h4.77v12.2h-4.77zM1070.6,2164.2h4.77v37.0h-4.77zM1073.9,2154.2h4.77v15.2h-4.77zM1077.2,2153.4h4.77v50.5h-4.77zM1087.0,2216.6h4.77v35.3h-4.77zM1093.6,2117.8h4.77v100.0h-4.77zM1096.9,2131.5h4.77v49.7h-4.77zM1103.5,2260.9h4.77v56.6h-4.77zM1106.8,2171.4h4.77v37.1h-4.77zM1113.3,2192.4h4.77v52.6h-4.77zM1116.6,2138.5h4.77v119.2h-4.77zM1123.2,2128.3h4.77v134.0h-4.77zM1136.3,2170.6h4.77v70.7h-4.77zM1139.6,2160.7h4.77v21.5h-4.77zM1142.9,2152.6h4.77v25.2h-4.77zM1156.0,2215.0h4.77v21.8h-4.77zM1172.5,2146.4h4.77v59.7h-4.77zM1202.1,2131.5h4.77v15.8h-4.77zM1211.9,2169.4h4.77v13.4h-4.77zM1225.1,2130.2h4.77v23.1h-4.77zM1244.8,2197.3h4.77v38.2h-4.77zM1248.1,2194.0h4.77v98.4h-4.77zM1261.2,2158.4h4.77v17.1h-4.77zM1274.3,2177.0h4.77v21.8h-4.77zM1284.2,2139.5h4.77v48.0h-4.77zM1287.5,2196.7h4.77v23.3h-4.77zM1303.9,2198.6h4.77v39.0h-4.77zM1310.5,2179.1h4.77v23.0h-4.77zM1330.2,2172.8h4.77v59.6h-4.77zM1343.4,2133.1h4.77v21.4h-4.77zM1353.2,2075.8h4.77v56.7h-4.77zM1356.5,2185.8h4.77v26.5h-4.77zM1363.1,2191.4h4.77v51.5h-4.77zM1369.6,2257.8h4.77v28.2h-4.77zM1389.4,2144.5h4.77v101.7h-4.77zM1392.7,2315.7h4.77v1.8h-4.77zM1395.9,2147.2h4.77v10.1h-4.77zM1399.2,2081.1h4.77v31.1h-4.77zM1422.2,2168.2h4.77v32.4h-4.77zM1425.5,2171.3h4.77v13.6h-4.77zM1435.4,2237.2h4.77v28.4h-4.77zM1451.8,2214.3h4.77v16.9h-4.77zM1455.1,2121.6h4.77v57.6h-4.77zM1458.4,2123.5h4.77v19.0h-4.77zM1464.9,2153.9h4.77v43.6h-4.77zM1474.8,2186.9h4.77v43.8h-4.77zM1478.1,2105.9h4.77v11.6h-4.77zM1488.0,2172.3h4.77v28.2h-4.77zM1494.5,2200.2h4.77v14.3h-4.77zM1524.1,2179.6h4.77v60.5h-4.77zM1534.0,2258.6h4.77v18.6h-4.77zM1547.1,2317.5h4.77v0.0h-4.77zM1553.7,2117.6h4.77v36.9h-4.77zM1566.8,2149.7h4.77v42.6h-4.77zM1589.8,2130.7h4.77v13.6h-4.77zM1593.1,2143.8h4.77v65.9h-4.77zM1596.4,2160.3h4.77v21.0h-4.77zM1606.3,2134.0h4.77v13.0h-4.77zM1616.1,2271.2h4.77v45.7h-4.77zM1635.8,2158.9h4.77v40.4h-4.77zM1639.1,2150.9h4.77v51.5h-4.77zM1642.4,2177.7h4.77v16.2h-4.77zM1658.8,2154.6h4.77v38.3h-4.77zM1691.7,2184.2h4.77v30.5h-4.77zM1695.0,2256.3h4.77v49.8h-4.77zM1698.3,2240.0h4.77v77.5h-4.77zM1701.6,2148.4h4.77v19.2h-4.77zM1704.8,2148.3h4.77v9.4h-4.77zM1714.7,2168.4h4.77v134.0h-4.77zM1721.3,2155.3h4.77v19.9h-4.77zM1724.6,2156.7h4.77v25.0h-4.77zM1727.8,2090.8h4.77v38.5h-4.77zM1734.4,2152.6h4.77v16.5h-4.77zM1737.7,2170.0h4.77v69.8h-4.77zM1747.6,2162.6h4.77v52.4h-4.77zM1750.9,2189.2h4.77v20.6h-4.77zM1754.1,2190.0h4.77v28.8h-4.77zM1764.0,2211.9h4.77v22.1h-4.77zM1767.3,2198.2h4.77v47.7h-4.77zM1770.6,2197.4h4.77v20.8h-4.77zM1787.0,2138.1h4.77v175.4h-4.77zM1796.9,2172.8h4.77v74.6h-4.77zM1819.9,2217.9h4.77v25.6h-4.77zM1829.7,2213.2h4.77v13.8h-4.77zM1856.0,2194.5h4.77v76.7h-4.77zM1859.3,2201.1h4.77v57.1h-4.77zM1869.2,2196.9h4.77v71.6h-4.77zM1875.7,2178.0h4.77v20.6h-4.77zM1879.0,2097.8h4.77v57.5h-4.77zM1895.4,2136.2h4.77v19.6h-4.77zM1898.7,2137.5h4.77v45.4h-4.77zM1902.0,2198.8h4.77v32.1h-4.77zM1908.6,2106.0h4.77v87.4h-4.77zM1915.2,2159.0h4.77v31.6h-4.77zM1934.9,2211.9h4.77v51.4h-4.77zM1944.7,2152.9h4.77v15.4h-4.77zM1948.0,2151.5h4.77v26.2h-4.77zM1971.0,2164.7h4.77v14.6h-4.77zM1974.3,2150.5h4.77v60.8h-4.77zM1980.9,2157.3h4.77v11.8h-4.77zM2000.6,2079.2h4.77v20.9h-4.77zM2017.0,2169.9h4.77v21.1h-4.77zM2023.6,2195.4h4.77v25.5h-4.77zM2036.8,2151.7h4.77v128.3h-4.77zM2082.8,2183.4h4.77v51.9h-4.77zM2086.0,2179.7h4.77v38.8h-4.77zM2095.9,2175.7h4.77v71.0h-4.77zM2155.1,2189.7h4.77v25.3h-4.77zM2181.3,2093.5h4.77v91.9h-4.77zM2187.9,2163.1h4.77v119.3h-4.77zM2201.1,2234.6h4.77v15.8h-4.77zM2204.3,2147.8h4.77v98.3h-4.77zM2214.2,2127.7h4.77v72.9h-4.77zM2217.5,2157.5h4.77v11.2h-4.77zM2224.1,2149.4h4.77v50.8h-4.77zM2227.4,2186.8h4.77v47.4h-4.77zM2233.9,2209.3h4.77v108.2h-4.77zM2256.9,2161.7h4.77v111.3h-4.77zM2263.5,2155.9h4.77v161.6h-4.77zM2273.4,2150.8h4.77v46.4h-4.77zM2286.5,2195.9h4.77v73.6h-4.77zM2293.1,2199.3h4.77v11.6h-4.77zM2302.9,2197.7h4.77v44.5h-4.77zM2306.2,2136.7h4.77v54.3h-4.77zM2312.8,2097.2h4.77v31.8h-4.77zM2325.9,2166.6h4.77v23.4h-4.77zM2329.2,2170.8h4.77v19.3h-4.77zM2339.1,2296.8h4.77v20.7h-4.77zM2345.7,2225.1h4.77v25.3h-4.77zM2358.8,2162.0h4.77v75.6h-4.77zM2378.5,2172.2h4.77v20.1h-4.77zM2388.4,2204.0h4.77v19.1h-4.77zM2404.8,2238.3h4.77v40.9h-4.77zM2414.7,2190.8h4.77v76.0h-4.77zM2424.5,2222.2h4.77v75.5h-4.77zM2427.8,2164.6h4.77v13.5h-4.77zM2431.1,2172.9h4.77v25.3h-4.77zM2434.4,2101.4h4.77v12.2h-4.77zM2467.2,2197.6h4.77v115.9h-4.77zM2500.1,2170.0h4.77v44.3h-4.77zM2513.3,2214.7h4.77v52.4h-4.77zM2519.8,2166.5h4.77v32.9h-4.77zM2598.7,2183.0h4.77v22.5h-4.77zM2605.3,2161.6h4.77v51.4h-4.77zM2634.8,2209.1h4.77v104.4h-4.77zM2638.1,2155.1h4.77v22.0h-4.77zM2641.4,2179.9h4.77v61.9h-4.77zM2644.7,2219.8h4.77v93.6h-4.77zM2654.6,2286.9h4.77v30.6h-4.77zM2684.1,2156.4h4.77v9.8h-4.77zM2687.4,2199.5h4.77v53.2h-4.77zM2697.3,2179.5h4.77v42.9h-4.77zM2700.6,2179.2h4.77v18.3h-4.77zM2703.9,2175.4h4.77v26.7h-4.77zM2710.4,2200.5h4.77v63.3h-4.77zM2746.6,2172.7h4.77v22.4h-4.77zM2753.1,2205.2h4.77v15.6h-4.77zM2776.1,2203.3h4.77v110.2h-4.77zM2792.6,2223.8h4.77v37.1h-4.77zM2802.4,2223.4h4.77v10.9h-4.77zM2805.7,2175.4h4.77v142.1h-4.77zM2812.3,2122.9h4.77v58.5h-4.77zM2815.6,2298.9h4.77v14.8h-4.77zM2828.7,2222.4h4.77v14.9h-4.77zM2835.3,2146.0h4.77v29.5h-4.77zM2838.6,2113.2h4.77v13.8h-4.77zM2841.9,2144.1h4.77v114.1h-4.77zM2848.4,2146.7h4.77v63.5h-4.77zM2851.7,2151.0h4.77v44.4h-4.77zM2864.9,2077.9h4.77v25.3h-4.77zM2891.2,2191.5h4.77v26.6h-4.77zM2910.9,2175.2h4.77v27.6h-4.77zM2920.7,2215.0h4.77v20.6h-4.77zM2943.7,2161.1h4.77v11.7h-4.77zM2970.0,2317.5h4.77v-4.0h-4.77zM2973.3,2207.0h4.77v86.5h-4.77zM2976.6,2178.0h4.77v65.7h-4.77zM2979.9,2101.0h4.77v53.1h-4.77zM2983.2,2184.4h4.77v16.4h-4.77zM2993.0,2186.4h4.77v12.6h-4.77zM2996.3,2196.1h4.77v21.4h-4.77zM3012.8,2177.1h4.77v77.2h-4.77zM3016.0,2154.8h4.77v33.2h-4.77zM3042.3,2162.4h4.77v15.6h-4.77zM3048.9,2143.1h4.77v25.1h-4.77zM3052.2,2192.4h4.77v43.4h-4.77zM3058.8,2140.1h4.77v23.7h-4.77zM3065.3,2088.8h4.77v9.7h-4.77zM3068.6,2189.3h4.77v46.5h-4.77zM3078.5,2149.3h4.77v42.0h-4.77zM3081.8,2158.9h4.77v134.3h-4.77zM3098.2,2214.4h4.77v28.0h-4.77zM3127.8,2135.6h4.77v54.3h-4.77zM3131.1,2184.1h4.77v133.4h-4.77zM3137.6,2158.1h4.77v46.2h-4.77zM3147.5,2189.5h4.77v45.4h-4.77zM3160.6,2153.1h4.77v10.7h-4.77zM3173.8,2140.2h4.77v9.0h-4.77zM3196.8,2179.3h4.77v14.8h-4.77zM3200.1,2193.6h4.77v41.9h-4.77zM3203.4,2205.3h4.77v112.2h-4.77zM3209.9,2191.2h4.77v16.8h-4.77zM3216.5,2177.3h4.77v66.3h-4.77zM3226.4,2173.6h4.77v59.7h-4.77zM3229.6,2176.3h4.77v48.9h-4.77zM3236.2,2174.2h4.77v12.4h-4.77zM3239.5,2169.4h4.77v27.1h-4.77zM3252.6,2172.0h4.77v28.5h-4.77zM3262.5,2130.6h4.77v126.3h-4.77zM3288.8,2169.7h4.77v104.4h-4.77zM3298.7,2179.5h4.77v41.5h-4.77zM3347.9,2192.4h4.77v34.4h-4.77zM3380.8,2177.3h4.77v31.9h-4.77zM3387.4,2180.3h4.77v137.2h-4.77zM3394.0,2180.5h4.77v12.9h-4.77zM3417.0,2168.4h4.77v28.1h-4.77zM3430.1,2259.5h4.77v35.5h-4.77zM3449.8,2185.5h4.77v33.7h-4.77zM3453.1,2153.2h4.77v32.7h-4.77zM3469.5,2186.3h4.77v110.9h-4.77zM3492.5,2162.3h4.77v78.3h-4.77zM3502.4,2095.6h4.77v39.1h-4.77zM3509.0,2150.6h4.77v26.0h-4.77z" fill="#ffff00" fill-opacity="0.7"/>
</g>
</g>
</svg>
<div id="side"></div>
<div class="btn teal" style="top:156px;height:154px;width:566px"><div class="gloss g1"></div><div class="tx " style="left:188.6px;top:29.3px;font-size:75.7px;line-height:90.9px;color:#fff;transform:scaleX(1.0012);text-shadow:0 0 4px rgba(0,0,0,.55);">Span</div></div><div class="btn orange" style="top:327px;height:264px;width:566px"><div class="gloss g2"></div><div class="tx " style="left:192.7px;top:27.3px;font-size:75.7px;line-height:90.9px;color:#fff;transform:scaleX(0.9716);text-shadow:0 0 4px rgba(0,0,0,.55);">Span</div><div class="tx " style="left:41.3px;top:133.5px;font-size:62.9px;line-height:75.4px;color:#fff;transform:scaleX(0.9932);text-shadow:0 0 4px rgba(0,0,0,.55);">100.000000 MHz</div></div><div class="btn empty" style="top:634px;height:266px;width:563px"></div><div class="btn navy" style="top:939.5px;height:265.5px;width:563px"><div class="gloss g3"></div><div class="tx " style="left:128.3px;top:79.2px;font-size:74.3px;line-height:89.1px;color:#fff;transform:scaleX(0.9560);text-shadow:0 0 4px rgba(0,0,0,.55);">Full Span</div></div><div class="btn navy" style="top:1245px;height:264px;width:563px"><div class="gloss g3"></div><div class="tx " style="left:105.8px;top:78.3px;font-size:75.7px;line-height:90.9px;color:#fff;transform:scaleX(0.9817);text-shadow:0 0 4px rgba(0,0,0,.55);">Zero Span</div></div><div class="btn navy" style="top:1551.5px;height:262.5px;width:563px"><div class="gloss g3"></div><div class="tx " style="left:111.1px;top:77.9px;font-size:75.3px;line-height:90.3px;color:#fff;transform:scaleX(0.9878);text-shadow:0 0 4px rgba(0,0,0,.55);">Last Span</div></div><div class="btn empty" style="top:1857.5px;height:265.5px;width:563px"></div><div class="btn empty" style="top:2162.5px;height:266.5px;width:563px"></div>
<div id="status"></div>
<div class="tx " style="left:75.2px;top:47.4px;font-size:64.0px;line-height:76.8px;color:#fff;transform:scaleX(1.0227);">Spectrum - Swept SA</div><div class="tx " style="left:3630.0px;top:55.6px;font-size:55.6px;line-height:66.7px;color:#fff;transform:scaleX(0.9433);">03:07:19</div><div class="tx " style="left:3878.2px;top:55.6px;font-size:55.6px;line-height:66.7px;color:#fff;transform:scaleX(1.0191);">2018/4/21</div><div class="tx " style="left:233.9px;top:184.3px;font-size:80.0px;line-height:96.0px;color:#fff;transform:scaleX(1.0648);">Span:</div><div class="tx " style="left:521.9px;top:186.6px;font-size:78.6px;line-height:94.3px;color:#7fd2ea;transform:scaleX(1.0357);">100.000000 MHz</div><div class="tx " style="left:1801.6px;top:167.5px;font-size:48.6px;line-height:58.3px;color:#fff;transform:scaleX(1.0401);font-weight:bold;">Ref: Int</div><div class="tx " style="left:2151.8px;top:167.5px;font-size:48.6px;line-height:58.3px;color:#fff;transform:scaleX(1.0098);font-weight:bold;">Couple: AC</div><div class="tx " style="left:2502.6px;top:167.5px;font-size:48.6px;line-height:58.3px;color:#fff;transform:scaleX(1.0312);font-weight:bold;">Input: RF</div><div class="tx " style="left:2858.0px;top:161.3px;font-size:48.3px;line-height:57.9px;color:#fff;transform:scaleX(1.0576);font-weight:bold;">Atten:20dB</div><div class="tx " style="left:1802.5px;top:248.1px;font-size:48.1px;line-height:57.8px;color:#fff;transform:scaleX(1.0232);font-weight:bold;">FreeRun</div><div class="tx " style="left:2151.8px;top:248.1px;font-size:48.1px;line-height:57.8px;color:#fff;transform:scaleX(1.0579);font-weight:bold;">Continuous</div><div class="tx " style="left:2507.7px;top:248.1px;font-size:48.1px;line-height:57.8px;color:#fff;transform:scaleX(1.0973);font-weight:bold;">Avg : Off</div><div class="tx " style="left:3213.1px;top:248.1px;font-size:48.1px;line-height:57.8px;color:#fff;transform:scaleX(1.0478);font-weight:bold;">Time Gate:Off</div><div style="position:absolute;left:3200px;top:150px;width:348px;height:80px;overflow:hidden"><div class="tx" style="left:10.3px;top:11.3px;font-size:48.3px;line-height:57.9px;font-weight:bold;transform:scaleX(1.047)">PreAmplify:Off</div></div><div class="tx " style="left:224.1px;top:376.3px;font-size:54.6px;line-height:65.5px;color:#fff;transform:scaleX(1.0526);font-weight:bold;">Ref Level 44.00 dBm</div><div class="tx " style="left:224.0px;top:462.5px;font-size:54.6px;line-height:65.5px;color:#fff;transform:scaleX(1.0701);font-weight:bold;">Log 10.0 dB/Div</div><div class="tx " style="left:1579.3px;top:404.9px;font-size:38.6px;line-height:46.3px;color:#ffff00;transform:scaleX(1.1262);font-weight:bold;">T1[W, N]</div><div class="tx " style="left:1782.0px;top:404.9px;font-size:38.6px;line-height:46.3px;color:#8e8e8e;transform:scaleX(1.1262);font-weight:bold;">T3[W, N]</div><div class="tx " style="left:1986.3px;top:404.9px;font-size:38.6px;line-height:46.3px;color:#8e8e8e;transform:scaleX(1.1262);font-weight:bold;">T5[W, N]</div><div class="tx " style="left:1579.3px;top:475.9px;font-size:38.6px;line-height:46.3px;color:#8e8e8e;transform:scaleX(1.1262);font-weight:bold;">T2[W, N]</div><div class="tx " style="left:1782.0px;top:475.9px;font-size:38.6px;line-height:46.3px;color:#8e8e8e;transform:scaleX(1.1262);font-weight:bold;">T4[W, N]</div><div class="tx " style="left:1986.3px;top:475.9px;font-size:38.6px;line-height:46.3px;color:#8e8e8e;transform:scaleX(1.1262);font-weight:bold;">T6[W, N]</div><div class="tx " style="left:83.3px;top:705.7px;font-size:41.0px;line-height:49.2px;color:#eaeaea;transform:scaleX(1.0000);">34.00</div><div class="tx " style="left:83.3px;top:882.8px;font-size:41.0px;line-height:49.2px;color:#eaeaea;transform:scaleX(1.0000);">24.00</div><div class="tx " style="left:83.3px;top:1059.8px;font-size:41.0px;line-height:49.2px;color:#eaeaea;transform:scaleX(1.0000);">14.00</div><div class="tx " style="left:106.1px;top:1236.9px;font-size:41.0px;line-height:49.2px;color:#eaeaea;transform:scaleX(1.0000);">4.00</div><div class="tx " style="left:92.4px;top:1413.9px;font-size:41.0px;line-height:49.2px;color:#eaeaea;transform:scaleX(1.0000);">-6.00</div><div class="tx " style="left:69.6px;top:1591.0px;font-size:41.0px;line-height:49.2px;color:#eaeaea;transform:scaleX(1.0000);">-16.00</div><div class="tx " style="left:69.6px;top:1768.0px;font-size:41.0px;line-height:49.2px;color:#eaeaea;transform:scaleX(1.0000);">-26.00</div><div class="tx " style="left:69.6px;top:1945.1px;font-size:41.0px;line-height:49.2px;color:#eaeaea;transform:scaleX(1.0000);">-36.00</div><div class="tx " style="left:69.6px;top:2122.1px;font-size:41.0px;line-height:49.2px;color:#eaeaea;transform:scaleX(1.0000);">-46.00</div><div class="tx " style="left:225.1px;top:2332.2px;font-size:53.4px;line-height:64.1px;color:#fff;transform:scaleX(1.0871);font-weight:bold;">Center Freq 24.150000000GHz</div><div class="tx " style="left:223.6px;top:2399.4px;font-size:53.0px;line-height:63.6px;color:#fff;transform:scaleX(1.1006);font-weight:bold;">RBW 1.00MHz</div><div class="tx " style="left:1370.2px;top:2332.2px;font-size:53.4px;line-height:64.1px;color:#fff;transform:scaleX(1.0746);font-weight:bold;">Sweep Time 25.0000ms (1001Points)</div><div class="tx " style="left:1673.5px;top:2399.4px;font-size:53.0px;line-height:63.6px;color:#fff;transform:scaleX(1.1116);font-weight:bold;">VBW 1.00MHz</div><div class="tx " style="left:2921.5px;top:2332.2px;font-size:53.4px;line-height:64.1px;color:#fff;transform:scaleX(1.0948);font-weight:bold;">Span 100.000000MHz</div><div class="tx " style="left:2980.2px;top:2399.4px;font-size:53.0px;line-height:63.6px;color:#fff;transform:scaleX(1.0763);font-weight:bold;">Sweep Type: Swept</div><div class="tx " style="left:35.0px;top:2518.7px;font-size:53.9px;line-height:64.6px;color:#fff;transform:scaleX(0.9939);">Sweeping...</div>
</body></html>
